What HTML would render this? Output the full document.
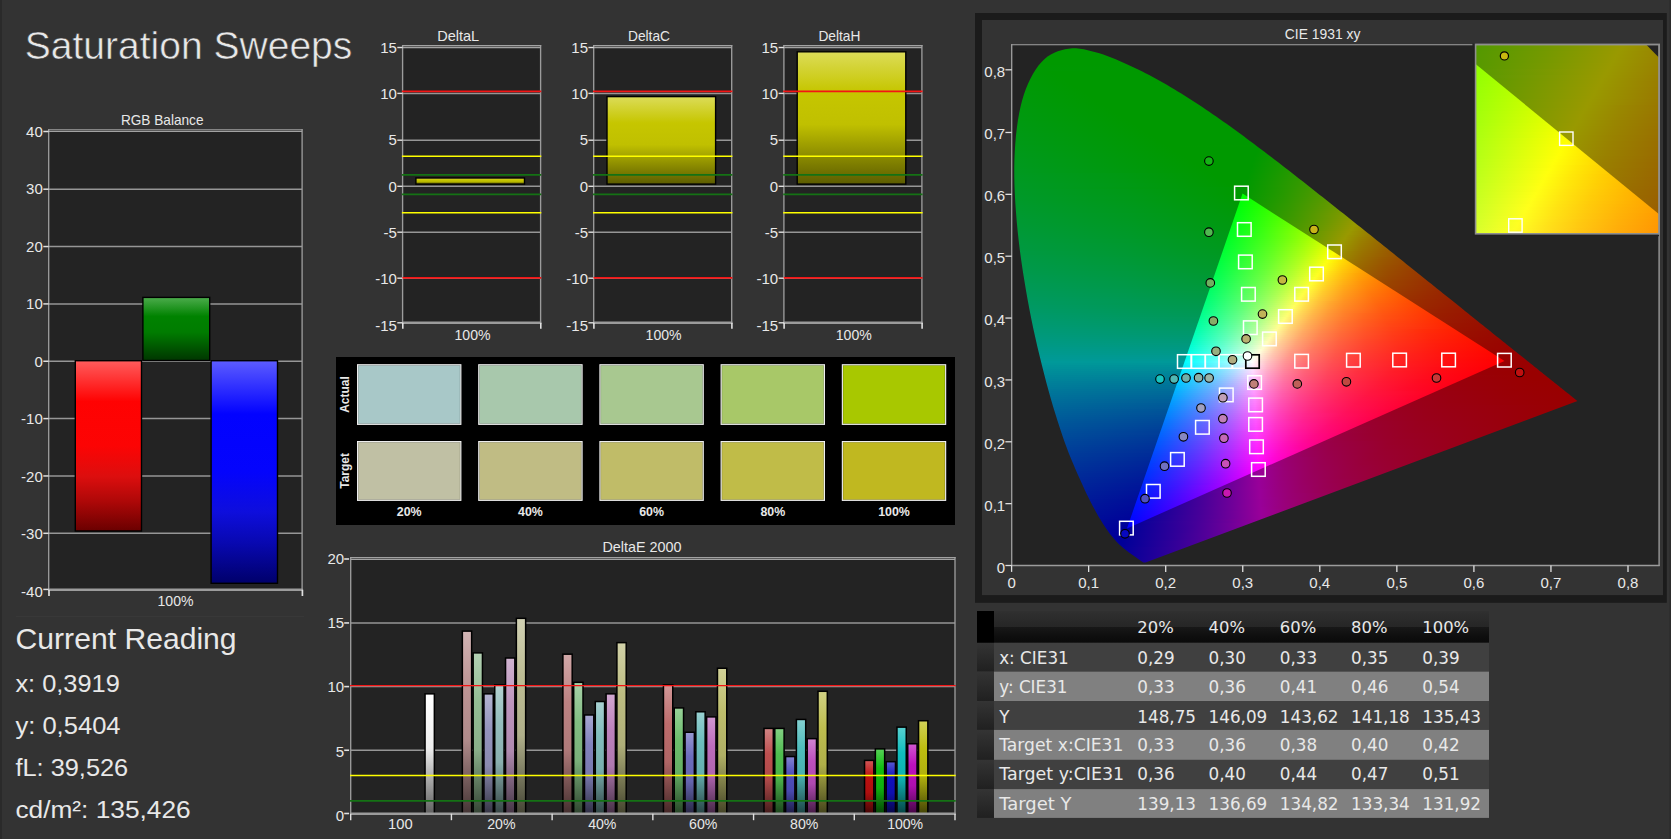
<!DOCTYPE html><html><head><meta charset="utf-8"><title>Saturation Sweeps</title><style>
html,body{margin:0;padding:0}body{width:1671px;height:839px;background:#333333;overflow:hidden;position:relative;font-family:'Liberation Sans', sans-serif}
svg{position:absolute;left:0;top:0}text{font-family:'Liberation Sans', sans-serif;fill:#e8e8e8}
.dj{font-family:'DejaVu Sans',sans-serif}.cl{position:absolute;overflow:hidden}.cl i{position:absolute;display:block}
</style></head><body>
<svg width="1671" height="839" viewBox="0 0 1671 839">
<rect x="0" y="0" width="2" height="839" fill="#2a2a2a"/>
<text x="24.8" y="58.6" font-size="38.8" textLength="327.5" lengthAdjust="spacingAndGlyphs" fill="#f4f4f4" stroke="#333" stroke-width=".55">Saturation Sweeps</text>
<rect x="48.7" y="129.8" width="253.4" height="459.9" fill="#232323"/>
<line x1="48.7" y1="189.2" x2="302.1" y2="189.2" stroke="#969696" stroke-width="1.5"/>
<line x1="48.7" y1="246.55" x2="302.1" y2="246.55" stroke="#969696" stroke-width="1.5"/>
<line x1="48.7" y1="303.9" x2="302.1" y2="303.9" stroke="#969696" stroke-width="1.5"/>
<line x1="48.7" y1="361.25" x2="302.1" y2="361.25" stroke="#969696" stroke-width="1.5"/>
<line x1="48.7" y1="418.6" x2="302.1" y2="418.6" stroke="#969696" stroke-width="1.5"/>
<line x1="48.7" y1="475.95" x2="302.1" y2="475.95" stroke="#969696" stroke-width="1.5"/>
<line x1="48.7" y1="533.3" x2="302.1" y2="533.3" stroke="#969696" stroke-width="1.5"/>
<defs><linearGradient id="gR" x1="0" y1="0" x2="0" y2="1"><stop offset="0" stop-color="#ff5c5c"/><stop offset=".24" stop-color="#ff0202"/><stop offset=".5" stop-color="#fc0404"/><stop offset=".68" stop-color="#dc0e0e"/><stop offset=".82" stop-color="#b00808"/><stop offset="1" stop-color="#6a0000"/></linearGradient>
<linearGradient id="gG" x1="0" y1="0" x2="0" y2="1"><stop offset="0" stop-color="#4cac4c"/><stop offset=".3" stop-color="#008200"/><stop offset=".55" stop-color="#007c00"/><stop offset="1" stop-color="#003600"/></linearGradient>
<linearGradient id="gB" x1="0" y1="0" x2="0" y2="1"><stop offset="0" stop-color="#5c5cff"/><stop offset=".24" stop-color="#0202ff"/><stop offset=".5" stop-color="#0404fc"/><stop offset=".68" stop-color="#0e0edc"/><stop offset=".82" stop-color="#0808b0"/><stop offset="1" stop-color="#00006a"/></linearGradient></defs>
<rect x="75.3" y="360.7" width="66.2" height="170.3" fill="url(#gR)" stroke="#000" stroke-width="1.4"/>
<rect x="142.9" y="297.4" width="66.8" height="63.1" fill="url(#gG)" stroke="#000" stroke-width="1.4"/>
<rect x="211.1" y="360.7" width="66.4" height="222.6" fill="url(#gB)" stroke="#000" stroke-width="1.4"/>
<line x1="48.7" y1="129.25" x2="48.7" y2="590.9" stroke="#9c9c9c" stroke-width="1.35"/>
<line x1="302.1" y1="129.25" x2="302.1" y2="590.9" stroke="#9c9c9c" stroke-width="1.35"/>
<line x1="48.1" y1="129.8" x2="302.7" y2="129.8" stroke="#a2a2a2" stroke-width="1.1"/>
<line x1="48.7" y1="131.4" x2="302.1" y2="131.4" stroke="#a2a2a2" stroke-width="1.3"/>
<line x1="48.1" y1="589.7" x2="302.7" y2="589.7" stroke="#9c9c9c" stroke-width="2.4"/>
<line x1="43.3" y1="131.5" x2="48.7" y2="131.5" stroke="#e0e0e0" stroke-width="1.5"/>
<text x="42.8" y="136.5" font-size="15" text-anchor="end">40</text>
<line x1="43.3" y1="189.2" x2="48.7" y2="189.2" stroke="#e0e0e0" stroke-width="1.5"/>
<text x="42.8" y="194" font-size="15" text-anchor="end">30</text>
<line x1="43.3" y1="246.55" x2="48.7" y2="246.55" stroke="#e0e0e0" stroke-width="1.5"/>
<text x="42.8" y="251.5" font-size="15" text-anchor="end">20</text>
<line x1="43.3" y1="303.9" x2="48.7" y2="303.9" stroke="#e0e0e0" stroke-width="1.5"/>
<text x="42.8" y="309" font-size="15" text-anchor="end">10</text>
<line x1="43.3" y1="361.25" x2="48.7" y2="361.25" stroke="#e0e0e0" stroke-width="1.5"/>
<text x="42.8" y="366.5" font-size="15" text-anchor="end">0</text>
<line x1="43.3" y1="418.6" x2="48.7" y2="418.6" stroke="#e0e0e0" stroke-width="1.5"/>
<text x="42.8" y="424" font-size="15" text-anchor="end">-10</text>
<line x1="43.3" y1="475.95" x2="48.7" y2="475.95" stroke="#e0e0e0" stroke-width="1.5"/>
<text x="42.8" y="481.5" font-size="15" text-anchor="end">-20</text>
<line x1="43.3" y1="533.3" x2="48.7" y2="533.3" stroke="#e0e0e0" stroke-width="1.5"/>
<text x="42.8" y="539" font-size="15" text-anchor="end">-30</text>
<line x1="43.3" y1="589.4" x2="48.7" y2="589.4" stroke="#e0e0e0" stroke-width="1.5"/>
<text x="42.8" y="596.5" font-size="15" text-anchor="end">-40</text>
<line x1="49" y1="589.7" x2="49" y2="596" stroke="#e0e0e0" stroke-width="1.7"/>
<line x1="302.4" y1="589.7" x2="302.4" y2="596" stroke="#e0e0e0" stroke-width="1.7"/>
<text x="162.2" y="125" font-size="15" text-anchor="middle" textLength="82.6" lengthAdjust="spacingAndGlyphs">RGB Balance</text>
<text x="175.5" y="605.5" font-size="15" text-anchor="middle" textLength="36" lengthAdjust="spacingAndGlyphs">100%</text>
<line x1="16" y1="616.5" x2="304" y2="616.5" stroke="#383838" stroke-width="1"/>
<text x="15.6" y="648.6" font-size="29.6" textLength="221" lengthAdjust="spacingAndGlyphs" fill="#f2f2f2">Current Reading</text>
<text x="15.4" y="692.1" font-size="24.4" textLength="104.4" lengthAdjust="spacingAndGlyphs" fill="#f2f2f2">x: 0,3919</text>
<text x="15.4" y="734.2" font-size="24.4" textLength="105.2" lengthAdjust="spacingAndGlyphs" fill="#f2f2f2">y: 0,5404</text>
<text x="15.4" y="776.3" font-size="24.4" textLength="112.8" lengthAdjust="spacingAndGlyphs" fill="#f2f2f2">fL: 39,526</text>
<text x="15.4" y="818.4" font-size="24.4" textLength="175.3" lengthAdjust="spacingAndGlyphs" fill="#f2f2f2">cd/m²: 135,426</text>
<defs><linearGradient id="gY" x1="0" y1="0" x2="0" y2="1"><stop offset="0" stop-color="#dcdc58"/><stop offset=".3" stop-color="#c6c600"/><stop offset=".55" stop-color="#c0c000"/><stop offset="1" stop-color="#5c5c00"/></linearGradient></defs>
<rect x="402.6" y="45.6" width="138" height="277.2" fill="#232323"/>
<line x1="402.6" y1="93.4" x2="540.6" y2="93.4" stroke="#969696" stroke-width="1.5"/>
<line x1="402.6" y1="140.2" x2="540.6" y2="140.2" stroke="#969696" stroke-width="1.5"/>
<line x1="402.6" y1="186.3" x2="540.6" y2="186.3" stroke="#969696" stroke-width="1.5"/>
<line x1="402.6" y1="232.2" x2="540.6" y2="232.2" stroke="#969696" stroke-width="1.5"/>
<line x1="402.6" y1="278.2" x2="540.6" y2="278.2" stroke="#969696" stroke-width="1.5"/>
<rect x="415.9" y="178" width="108.6" height="6.1" fill="url(#gY)" stroke="#000" stroke-width="1.4"/>
<line x1="402.6" y1="45.05" x2="402.6" y2="324" stroke="#9c9c9c" stroke-width="1.35"/>
<line x1="540.6" y1="45.05" x2="540.6" y2="324" stroke="#9c9c9c" stroke-width="1.35"/>
<line x1="402" y1="45.6" x2="541.2" y2="45.6" stroke="#a2a2a2" stroke-width="1.1"/>
<line x1="402.6" y1="47.5" x2="540.6" y2="47.5" stroke="#a2a2a2" stroke-width="1.3"/>
<line x1="402" y1="322.8" x2="541.2" y2="322.8" stroke="#9c9c9c" stroke-width="2.4"/>
<line x1="401.9" y1="91.4" x2="541.3" y2="91.4" stroke="#f41414" stroke-width="1.8"/>
<line x1="401.9" y1="277.8" x2="541.3" y2="277.8" stroke="#f41414" stroke-width="1.8"/>
<line x1="401.9" y1="156.36" x2="541.3" y2="156.36" stroke="#ffff00" stroke-width="1.5"/>
<line x1="401.9" y1="212.84" x2="541.3" y2="212.84" stroke="#ffff00" stroke-width="1.5"/>
<line x1="401.9" y1="174.91" x2="541.3" y2="174.91" stroke="#147214" stroke-width="1.8"/>
<line x1="401.9" y1="194.29" x2="541.3" y2="194.29" stroke="#147214" stroke-width="1.8"/>
<line x1="397.3" y1="47.5" x2="402.6" y2="47.5" stroke="#e0e0e0" stroke-width="1.4"/>
<text x="396.9" y="52.65" font-size="15" text-anchor="end">15</text>
<line x1="397.3" y1="93.4" x2="402.6" y2="93.4" stroke="#e0e0e0" stroke-width="1.4"/>
<text x="396.9" y="98.98" font-size="15" text-anchor="end">10</text>
<line x1="397.3" y1="140.2" x2="402.6" y2="140.2" stroke="#e0e0e0" stroke-width="1.4"/>
<text x="396.9" y="145.31" font-size="15" text-anchor="end">5</text>
<line x1="397.3" y1="186.3" x2="402.6" y2="186.3" stroke="#e0e0e0" stroke-width="1.4"/>
<text x="396.9" y="191.64" font-size="15" text-anchor="end">0</text>
<line x1="397.3" y1="232.2" x2="402.6" y2="232.2" stroke="#e0e0e0" stroke-width="1.4"/>
<text x="396.9" y="237.97" font-size="15" text-anchor="end">-5</text>
<line x1="397.3" y1="278.2" x2="402.6" y2="278.2" stroke="#e0e0e0" stroke-width="1.4"/>
<text x="396.9" y="284.3" font-size="15" text-anchor="end">-10</text>
<line x1="397.3" y1="322.8" x2="402.6" y2="322.8" stroke="#e0e0e0" stroke-width="1.4"/>
<text x="396.9" y="330.63" font-size="15" text-anchor="end">-15</text>
<line x1="402.8" y1="322.8" x2="402.8" y2="328.8" stroke="#e0e0e0" stroke-width="1.6"/>
<line x1="540.8" y1="322.8" x2="540.8" y2="328.8" stroke="#e0e0e0" stroke-width="1.6"/>
<text x="458.2" y="41.2" font-size="15" text-anchor="middle" textLength="42" lengthAdjust="spacingAndGlyphs">DeltaL</text>
<text x="472.5" y="339.8" font-size="15" text-anchor="middle" textLength="36" lengthAdjust="spacingAndGlyphs">100%</text>
<rect x="593.7" y="45.6" width="138" height="277.2" fill="#232323"/>
<line x1="593.7" y1="93.4" x2="731.7" y2="93.4" stroke="#969696" stroke-width="1.5"/>
<line x1="593.7" y1="140.2" x2="731.7" y2="140.2" stroke="#969696" stroke-width="1.5"/>
<line x1="593.7" y1="186.3" x2="731.7" y2="186.3" stroke="#969696" stroke-width="1.5"/>
<line x1="593.7" y1="232.2" x2="731.7" y2="232.2" stroke="#969696" stroke-width="1.5"/>
<line x1="593.7" y1="278.2" x2="731.7" y2="278.2" stroke="#969696" stroke-width="1.5"/>
<rect x="607" y="96.6" width="108.6" height="87.5" fill="url(#gY)" stroke="#000" stroke-width="1.4"/>
<line x1="593.7" y1="45.05" x2="593.7" y2="324" stroke="#9c9c9c" stroke-width="1.35"/>
<line x1="731.7" y1="45.05" x2="731.7" y2="324" stroke="#9c9c9c" stroke-width="1.35"/>
<line x1="593.1" y1="45.6" x2="732.3" y2="45.6" stroke="#a2a2a2" stroke-width="1.1"/>
<line x1="593.7" y1="47.5" x2="731.7" y2="47.5" stroke="#a2a2a2" stroke-width="1.3"/>
<line x1="593.1" y1="322.8" x2="732.3" y2="322.8" stroke="#9c9c9c" stroke-width="2.4"/>
<line x1="593" y1="91.4" x2="732.4" y2="91.4" stroke="#f41414" stroke-width="1.8"/>
<line x1="593" y1="277.8" x2="732.4" y2="277.8" stroke="#f41414" stroke-width="1.8"/>
<line x1="593" y1="156.36" x2="732.4" y2="156.36" stroke="#ffff00" stroke-width="1.5"/>
<line x1="593" y1="212.84" x2="732.4" y2="212.84" stroke="#ffff00" stroke-width="1.5"/>
<line x1="593" y1="174.91" x2="732.4" y2="174.91" stroke="#147214" stroke-width="1.8"/>
<line x1="593" y1="194.29" x2="732.4" y2="194.29" stroke="#147214" stroke-width="1.8"/>
<line x1="588.4" y1="47.5" x2="593.7" y2="47.5" stroke="#e0e0e0" stroke-width="1.4"/>
<text x="588" y="52.65" font-size="15" text-anchor="end">15</text>
<line x1="588.4" y1="93.4" x2="593.7" y2="93.4" stroke="#e0e0e0" stroke-width="1.4"/>
<text x="588" y="98.98" font-size="15" text-anchor="end">10</text>
<line x1="588.4" y1="140.2" x2="593.7" y2="140.2" stroke="#e0e0e0" stroke-width="1.4"/>
<text x="588" y="145.31" font-size="15" text-anchor="end">5</text>
<line x1="588.4" y1="186.3" x2="593.7" y2="186.3" stroke="#e0e0e0" stroke-width="1.4"/>
<text x="588" y="191.64" font-size="15" text-anchor="end">0</text>
<line x1="588.4" y1="232.2" x2="593.7" y2="232.2" stroke="#e0e0e0" stroke-width="1.4"/>
<text x="588" y="237.97" font-size="15" text-anchor="end">-5</text>
<line x1="588.4" y1="278.2" x2="593.7" y2="278.2" stroke="#e0e0e0" stroke-width="1.4"/>
<text x="588" y="284.3" font-size="15" text-anchor="end">-10</text>
<line x1="588.4" y1="322.8" x2="593.7" y2="322.8" stroke="#e0e0e0" stroke-width="1.4"/>
<text x="588" y="330.63" font-size="15" text-anchor="end">-15</text>
<line x1="593.9" y1="322.8" x2="593.9" y2="328.8" stroke="#e0e0e0" stroke-width="1.6"/>
<line x1="731.9" y1="322.8" x2="731.9" y2="328.8" stroke="#e0e0e0" stroke-width="1.6"/>
<text x="649" y="41.2" font-size="15" text-anchor="middle" textLength="42" lengthAdjust="spacingAndGlyphs">DeltaC</text>
<text x="663.6" y="339.8" font-size="15" text-anchor="middle" textLength="36" lengthAdjust="spacingAndGlyphs">100%</text>
<rect x="783.9" y="45.6" width="138" height="277.2" fill="#232323"/>
<line x1="783.9" y1="93.4" x2="921.9" y2="93.4" stroke="#969696" stroke-width="1.5"/>
<line x1="783.9" y1="140.2" x2="921.9" y2="140.2" stroke="#969696" stroke-width="1.5"/>
<line x1="783.9" y1="186.3" x2="921.9" y2="186.3" stroke="#969696" stroke-width="1.5"/>
<line x1="783.9" y1="232.2" x2="921.9" y2="232.2" stroke="#969696" stroke-width="1.5"/>
<line x1="783.9" y1="278.2" x2="921.9" y2="278.2" stroke="#969696" stroke-width="1.5"/>
<rect x="797.2" y="51.8" width="108.6" height="132.3" fill="url(#gY)" stroke="#000" stroke-width="1.4"/>
<line x1="783.9" y1="45.05" x2="783.9" y2="324" stroke="#9c9c9c" stroke-width="1.35"/>
<line x1="921.9" y1="45.05" x2="921.9" y2="324" stroke="#9c9c9c" stroke-width="1.35"/>
<line x1="783.3" y1="45.6" x2="922.5" y2="45.6" stroke="#a2a2a2" stroke-width="1.1"/>
<line x1="783.9" y1="47.5" x2="921.9" y2="47.5" stroke="#a2a2a2" stroke-width="1.3"/>
<line x1="783.3" y1="322.8" x2="922.5" y2="322.8" stroke="#9c9c9c" stroke-width="2.4"/>
<line x1="783.2" y1="91.4" x2="922.6" y2="91.4" stroke="#f41414" stroke-width="1.8"/>
<line x1="783.2" y1="277.8" x2="922.6" y2="277.8" stroke="#f41414" stroke-width="1.8"/>
<line x1="783.2" y1="156.36" x2="922.6" y2="156.36" stroke="#ffff00" stroke-width="1.5"/>
<line x1="783.2" y1="212.84" x2="922.6" y2="212.84" stroke="#ffff00" stroke-width="1.5"/>
<line x1="783.2" y1="174.91" x2="922.6" y2="174.91" stroke="#147214" stroke-width="1.8"/>
<line x1="783.2" y1="194.29" x2="922.6" y2="194.29" stroke="#147214" stroke-width="1.8"/>
<line x1="778.6" y1="47.5" x2="783.9" y2="47.5" stroke="#e0e0e0" stroke-width="1.4"/>
<text x="778.2" y="52.65" font-size="15" text-anchor="end">15</text>
<line x1="778.6" y1="93.4" x2="783.9" y2="93.4" stroke="#e0e0e0" stroke-width="1.4"/>
<text x="778.2" y="98.98" font-size="15" text-anchor="end">10</text>
<line x1="778.6" y1="140.2" x2="783.9" y2="140.2" stroke="#e0e0e0" stroke-width="1.4"/>
<text x="778.2" y="145.31" font-size="15" text-anchor="end">5</text>
<line x1="778.6" y1="186.3" x2="783.9" y2="186.3" stroke="#e0e0e0" stroke-width="1.4"/>
<text x="778.2" y="191.64" font-size="15" text-anchor="end">0</text>
<line x1="778.6" y1="232.2" x2="783.9" y2="232.2" stroke="#e0e0e0" stroke-width="1.4"/>
<text x="778.2" y="237.97" font-size="15" text-anchor="end">-5</text>
<line x1="778.6" y1="278.2" x2="783.9" y2="278.2" stroke="#e0e0e0" stroke-width="1.4"/>
<text x="778.2" y="284.3" font-size="15" text-anchor="end">-10</text>
<line x1="778.6" y1="322.8" x2="783.9" y2="322.8" stroke="#e0e0e0" stroke-width="1.4"/>
<text x="778.2" y="330.63" font-size="15" text-anchor="end">-15</text>
<line x1="784.1" y1="322.8" x2="784.1" y2="328.8" stroke="#e0e0e0" stroke-width="1.6"/>
<line x1="922.1" y1="322.8" x2="922.1" y2="328.8" stroke="#e0e0e0" stroke-width="1.6"/>
<text x="839.4" y="41.2" font-size="15" text-anchor="middle" textLength="42" lengthAdjust="spacingAndGlyphs">DeltaH</text>
<text x="853.8" y="339.8" font-size="15" text-anchor="middle" textLength="36" lengthAdjust="spacingAndGlyphs">100%</text>
<rect x="336" y="357" width="619" height="168" fill="#000"/>
<rect x="357" y="364.2" width="104.4" height="60.7" fill="#fff"/>
<rect x="358.2" y="365.4" width="102" height="58.3" fill="#a8c8c8" stroke="#000" stroke-opacity=".22" stroke-width="1"/>
<rect x="357" y="441" width="104.4" height="59.9" fill="#fff"/>
<rect x="358.2" y="442.2" width="102" height="57.5" fill="#c0c0a4" stroke="#000" stroke-opacity=".22" stroke-width="1"/>
<text x="409.2" y="516.3" font-size="12.4" text-anchor="middle" font-weight="bold" fill="#fff">20%</text>
<rect x="478.2" y="364.2" width="104.4" height="60.7" fill="#fff"/>
<rect x="479.4" y="365.4" width="102" height="58.3" fill="#a8c8ac" stroke="#000" stroke-opacity=".22" stroke-width="1"/>
<rect x="478.2" y="441" width="104.4" height="59.9" fill="#fff"/>
<rect x="479.4" y="442.2" width="102" height="57.5" fill="#c0bc84" stroke="#000" stroke-opacity=".22" stroke-width="1"/>
<text x="530.4" y="516.3" font-size="12.4" text-anchor="middle" font-weight="bold" fill="#fff">40%</text>
<rect x="599.4" y="364.2" width="104.4" height="60.7" fill="#fff"/>
<rect x="600.6" y="365.4" width="102" height="58.3" fill="#a8c890" stroke="#000" stroke-opacity=".22" stroke-width="1"/>
<rect x="599.4" y="441" width="104.4" height="59.9" fill="#fff"/>
<rect x="600.6" y="442.2" width="102" height="57.5" fill="#c0bc68" stroke="#000" stroke-opacity=".22" stroke-width="1"/>
<text x="651.6" y="516.3" font-size="12.4" text-anchor="middle" font-weight="bold" fill="#fff">60%</text>
<rect x="720.6" y="364.2" width="104.4" height="60.7" fill="#fff"/>
<rect x="721.8" y="365.4" width="102" height="58.3" fill="#a8c868" stroke="#000" stroke-opacity=".22" stroke-width="1"/>
<rect x="720.6" y="441" width="104.4" height="59.9" fill="#fff"/>
<rect x="721.8" y="442.2" width="102" height="57.5" fill="#c0bc48" stroke="#000" stroke-opacity=".22" stroke-width="1"/>
<text x="772.8" y="516.3" font-size="12.4" text-anchor="middle" font-weight="bold" fill="#fff">80%</text>
<rect x="841.8" y="364.2" width="104.4" height="60.7" fill="#fff"/>
<rect x="843" y="365.4" width="102" height="58.3" fill="#a8c800" stroke="#000" stroke-opacity=".22" stroke-width="1"/>
<rect x="841.8" y="441" width="104.4" height="59.9" fill="#fff"/>
<rect x="843" y="442.2" width="102" height="57.5" fill="#c0b820" stroke="#000" stroke-opacity=".22" stroke-width="1"/>
<text x="894" y="516.3" font-size="12.4" text-anchor="middle" font-weight="bold" fill="#fff">100%</text>
<text transform="translate(348.8,394.5) rotate(-90)" font-size="12" font-weight="bold" text-anchor="middle" fill="#fff">Actual</text>
<text transform="translate(348.8,470.9) rotate(-90)" font-size="12" font-weight="bold" text-anchor="middle" fill="#fff">Target</text>
<rect x="350.7" y="557.6" width="604.3" height="256.1" fill="#232323"/>
<line x1="350.7" y1="622.95" x2="955" y2="622.95" stroke="#969696" stroke-width="1.5"/>
<line x1="350.7" y1="686.6" x2="955" y2="686.6" stroke="#969696" stroke-width="1.5"/>
<line x1="350.7" y1="750.25" x2="955" y2="750.25" stroke="#969696" stroke-width="1.5"/>
<defs><linearGradient id="e10" x1="0" y1="0" x2="0" y2="1"><stop offset="0" stop-color="#d1b4b4"/><stop offset=".3" stop-color="#bd9494"/><stop offset=".6" stop-color="#af8a8a"/><stop offset="1" stop-color="#443535"/></linearGradient><linearGradient id="e11" x1="0" y1="0" x2="0" y2="1"><stop offset="0" stop-color="#b4d1b4"/><stop offset=".3" stop-color="#94bd94"/><stop offset=".6" stop-color="#8aaf8a"/><stop offset="1" stop-color="#354435"/></linearGradient><linearGradient id="e12" x1="0" y1="0" x2="0" y2="1"><stop offset="0" stop-color="#b4b4d1"/><stop offset=".3" stop-color="#9494bd"/><stop offset=".6" stop-color="#8a8aaf"/><stop offset="1" stop-color="#353544"/></linearGradient><linearGradient id="e13" x1="0" y1="0" x2="0" y2="1"><stop offset="0" stop-color="#b4d1d1"/><stop offset=".3" stop-color="#94bdbd"/><stop offset=".6" stop-color="#8aafaf"/><stop offset="1" stop-color="#354444"/></linearGradient><linearGradient id="e14" x1="0" y1="0" x2="0" y2="1"><stop offset="0" stop-color="#d1b4d1"/><stop offset=".3" stop-color="#bd94bd"/><stop offset=".6" stop-color="#af8aaf"/><stop offset="1" stop-color="#443544"/></linearGradient><linearGradient id="e15" x1="0" y1="0" x2="0" y2="1"><stop offset="0" stop-color="#d1d1b4"/><stop offset=".3" stop-color="#bdbd94"/><stop offset=".6" stop-color="#afaf8a"/><stop offset="1" stop-color="#444435"/></linearGradient><linearGradient id="e20" x1="0" y1="0" x2="0" y2="1"><stop offset="0" stop-color="#d1a8a8"/><stop offset=".3" stop-color="#bd8282"/><stop offset=".6" stop-color="#af7979"/><stop offset="1" stop-color="#442f2f"/></linearGradient><linearGradient id="e21" x1="0" y1="0" x2="0" y2="1"><stop offset="0" stop-color="#a8d1a8"/><stop offset=".3" stop-color="#82bd82"/><stop offset=".6" stop-color="#79af79"/><stop offset="1" stop-color="#2f442f"/></linearGradient><linearGradient id="e22" x1="0" y1="0" x2="0" y2="1"><stop offset="0" stop-color="#a8a8d1"/><stop offset=".3" stop-color="#8282bd"/><stop offset=".6" stop-color="#7979af"/><stop offset="1" stop-color="#2f2f44"/></linearGradient><linearGradient id="e23" x1="0" y1="0" x2="0" y2="1"><stop offset="0" stop-color="#a8d1d1"/><stop offset=".3" stop-color="#82bdbd"/><stop offset=".6" stop-color="#79afaf"/><stop offset="1" stop-color="#2f4444"/></linearGradient><linearGradient id="e24" x1="0" y1="0" x2="0" y2="1"><stop offset="0" stop-color="#d1a8d1"/><stop offset=".3" stop-color="#bd82bd"/><stop offset=".6" stop-color="#af79af"/><stop offset="1" stop-color="#442f44"/></linearGradient><linearGradient id="e25" x1="0" y1="0" x2="0" y2="1"><stop offset="0" stop-color="#d1d1a8"/><stop offset=".3" stop-color="#bdbd82"/><stop offset=".6" stop-color="#afaf79"/><stop offset="1" stop-color="#44442f"/></linearGradient><linearGradient id="e30" x1="0" y1="0" x2="0" y2="1"><stop offset="0" stop-color="#d19898"/><stop offset=".3" stop-color="#bd6c6c"/><stop offset=".6" stop-color="#af6565"/><stop offset="1" stop-color="#442727"/></linearGradient><linearGradient id="e31" x1="0" y1="0" x2="0" y2="1"><stop offset="0" stop-color="#98d198"/><stop offset=".3" stop-color="#6cbd6c"/><stop offset=".6" stop-color="#65af65"/><stop offset="1" stop-color="#274427"/></linearGradient><linearGradient id="e32" x1="0" y1="0" x2="0" y2="1"><stop offset="0" stop-color="#9898d1"/><stop offset=".3" stop-color="#6c6cbd"/><stop offset=".6" stop-color="#6565af"/><stop offset="1" stop-color="#272744"/></linearGradient><linearGradient id="e33" x1="0" y1="0" x2="0" y2="1"><stop offset="0" stop-color="#98d1d1"/><stop offset=".3" stop-color="#6cbdbd"/><stop offset=".6" stop-color="#65afaf"/><stop offset="1" stop-color="#274444"/></linearGradient><linearGradient id="e34" x1="0" y1="0" x2="0" y2="1"><stop offset="0" stop-color="#d198d1"/><stop offset=".3" stop-color="#bd6cbd"/><stop offset=".6" stop-color="#af65af"/><stop offset="1" stop-color="#442744"/></linearGradient><linearGradient id="e35" x1="0" y1="0" x2="0" y2="1"><stop offset="0" stop-color="#d1d198"/><stop offset=".3" stop-color="#bdbd6c"/><stop offset=".6" stop-color="#afaf65"/><stop offset="1" stop-color="#444427"/></linearGradient><linearGradient id="e40" x1="0" y1="0" x2="0" y2="1"><stop offset="0" stop-color="#d18484"/><stop offset=".3" stop-color="#bd4f4f"/><stop offset=".6" stop-color="#af4949"/><stop offset="1" stop-color="#441c1c"/></linearGradient><linearGradient id="e41" x1="0" y1="0" x2="0" y2="1"><stop offset="0" stop-color="#84d184"/><stop offset=".3" stop-color="#4fbd4f"/><stop offset=".6" stop-color="#49af49"/><stop offset="1" stop-color="#1c441c"/></linearGradient><linearGradient id="e42" x1="0" y1="0" x2="0" y2="1"><stop offset="0" stop-color="#8484d1"/><stop offset=".3" stop-color="#4f4fbd"/><stop offset=".6" stop-color="#4949af"/><stop offset="1" stop-color="#1c1c44"/></linearGradient><linearGradient id="e43" x1="0" y1="0" x2="0" y2="1"><stop offset="0" stop-color="#84d1d1"/><stop offset=".3" stop-color="#4fbdbd"/><stop offset=".6" stop-color="#49afaf"/><stop offset="1" stop-color="#1c4444"/></linearGradient><linearGradient id="e44" x1="0" y1="0" x2="0" y2="1"><stop offset="0" stop-color="#d184d1"/><stop offset=".3" stop-color="#bd4fbd"/><stop offset=".6" stop-color="#af49af"/><stop offset="1" stop-color="#441c44"/></linearGradient><linearGradient id="e45" x1="0" y1="0" x2="0" y2="1"><stop offset="0" stop-color="#d1d184"/><stop offset=".3" stop-color="#bdbd4f"/><stop offset=".6" stop-color="#afaf49"/><stop offset="1" stop-color="#44441c"/></linearGradient><linearGradient id="e50" x1="0" y1="0" x2="0" y2="1"><stop offset="0" stop-color="#d15858"/><stop offset=".3" stop-color="#bd1010"/><stop offset=".6" stop-color="#af0f0f"/><stop offset="1" stop-color="#440606"/></linearGradient><linearGradient id="e51" x1="0" y1="0" x2="0" y2="1"><stop offset="0" stop-color="#58d158"/><stop offset=".3" stop-color="#10bd10"/><stop offset=".6" stop-color="#0faf0f"/><stop offset="1" stop-color="#064406"/></linearGradient><linearGradient id="e52" x1="0" y1="0" x2="0" y2="1"><stop offset="0" stop-color="#5858d1"/><stop offset=".3" stop-color="#1010bd"/><stop offset=".6" stop-color="#0f0faf"/><stop offset="1" stop-color="#060644"/></linearGradient><linearGradient id="e53" x1="0" y1="0" x2="0" y2="1"><stop offset="0" stop-color="#58d1d1"/><stop offset=".3" stop-color="#10bdbd"/><stop offset=".6" stop-color="#0fafaf"/><stop offset="1" stop-color="#064444"/></linearGradient><linearGradient id="e54" x1="0" y1="0" x2="0" y2="1"><stop offset="0" stop-color="#d158d1"/><stop offset=".3" stop-color="#bd10bd"/><stop offset=".6" stop-color="#af0faf"/><stop offset="1" stop-color="#440644"/></linearGradient><linearGradient id="e55" x1="0" y1="0" x2="0" y2="1"><stop offset="0" stop-color="#d1d158"/><stop offset=".3" stop-color="#bdbd10"/><stop offset=".6" stop-color="#afaf0f"/><stop offset="1" stop-color="#444406"/></linearGradient><linearGradient id="e06" x1="0" y1="0" x2="0" y2="1"><stop offset="0" stop-color="#fff"/><stop offset=".45" stop-color="#eee"/><stop offset="1" stop-color="#606060"/></linearGradient></defs>
<rect x="425.05" y="693.85" width="9.3" height="119.85" fill="url(#e06)" stroke="#000" stroke-width="1.5"/>
<rect x="462.35" y="631.13" width="9.3" height="182.57" fill="url(#e10)" stroke="#000" stroke-width="1.5"/>
<rect x="473.15" y="652.89" width="9.3" height="160.81" fill="url(#e11)" stroke="#000" stroke-width="1.5"/>
<rect x="483.95" y="693.85" width="9.3" height="119.85" fill="url(#e12)" stroke="#000" stroke-width="1.5"/>
<rect x="494.75" y="684.89" width="9.3" height="128.81" fill="url(#e13)" stroke="#000" stroke-width="1.5"/>
<rect x="505.55" y="658.01" width="9.3" height="155.69" fill="url(#e14)" stroke="#000" stroke-width="1.5"/>
<rect x="516.35" y="618.33" width="9.3" height="195.37" fill="url(#e15)" stroke="#000" stroke-width="1.5"/>
<rect x="562.9" y="654.17" width="9.3" height="159.53" fill="url(#e20)" stroke="#000" stroke-width="1.5"/>
<rect x="573.7" y="682.33" width="9.3" height="131.37" fill="url(#e21)" stroke="#000" stroke-width="1.5"/>
<rect x="584.5" y="714.97" width="9.3" height="98.73" fill="url(#e22)" stroke="#000" stroke-width="1.5"/>
<rect x="595.3" y="701.53" width="9.3" height="112.17" fill="url(#e23)" stroke="#000" stroke-width="1.5"/>
<rect x="606.1" y="693.85" width="9.3" height="119.85" fill="url(#e24)" stroke="#000" stroke-width="1.5"/>
<rect x="616.9" y="642.65" width="9.3" height="171.05" fill="url(#e25)" stroke="#000" stroke-width="1.5"/>
<rect x="663.45" y="684.89" width="9.3" height="128.81" fill="url(#e30)" stroke="#000" stroke-width="1.5"/>
<rect x="674.25" y="707.93" width="9.3" height="105.77" fill="url(#e31)" stroke="#000" stroke-width="1.5"/>
<rect x="685.05" y="732.25" width="9.3" height="81.45" fill="url(#e32)" stroke="#000" stroke-width="1.5"/>
<rect x="695.85" y="711.77" width="9.3" height="101.93" fill="url(#e33)" stroke="#000" stroke-width="1.5"/>
<rect x="706.65" y="716.89" width="9.3" height="96.81" fill="url(#e34)" stroke="#000" stroke-width="1.5"/>
<rect x="717.45" y="668.25" width="9.3" height="145.45" fill="url(#e35)" stroke="#000" stroke-width="1.5"/>
<rect x="764" y="728.41" width="9.3" height="85.29" fill="url(#e40)" stroke="#000" stroke-width="1.5"/>
<rect x="774.8" y="728.41" width="9.3" height="85.29" fill="url(#e41)" stroke="#000" stroke-width="1.5"/>
<rect x="785.6" y="756.57" width="9.3" height="57.13" fill="url(#e42)" stroke="#000" stroke-width="1.5"/>
<rect x="796.4" y="719.45" width="9.3" height="94.25" fill="url(#e43)" stroke="#000" stroke-width="1.5"/>
<rect x="807.2" y="738.65" width="9.3" height="75.05" fill="url(#e44)" stroke="#000" stroke-width="1.5"/>
<rect x="818" y="691.29" width="9.3" height="122.41" fill="url(#e45)" stroke="#000" stroke-width="1.5"/>
<rect x="864.55" y="760.41" width="9.3" height="53.29" fill="url(#e50)" stroke="#000" stroke-width="1.5"/>
<rect x="875.35" y="748.89" width="9.3" height="64.81" fill="url(#e51)" stroke="#000" stroke-width="1.5"/>
<rect x="886.15" y="761.69" width="9.3" height="52.01" fill="url(#e52)" stroke="#000" stroke-width="1.5"/>
<rect x="896.95" y="727.13" width="9.3" height="86.57" fill="url(#e53)" stroke="#000" stroke-width="1.5"/>
<rect x="907.75" y="743.77" width="9.3" height="69.93" fill="url(#e54)" stroke="#000" stroke-width="1.5"/>
<rect x="918.55" y="720.73" width="9.3" height="92.97" fill="url(#e55)" stroke="#000" stroke-width="1.5"/>
<line x1="350.7" y1="557.05" x2="350.7" y2="814.9" stroke="#9c9c9c" stroke-width="1.35"/>
<line x1="955" y1="557.05" x2="955" y2="814.9" stroke="#9c9c9c" stroke-width="1.35"/>
<line x1="350.1" y1="557.6" x2="955.6" y2="557.6" stroke="#a2a2a2" stroke-width="1.1"/>
<line x1="350.7" y1="559.4" x2="955" y2="559.4" stroke="#a2a2a2" stroke-width="1.3"/>
<line x1="350.1" y1="813.7" x2="955.6" y2="813.7" stroke="#9c9c9c" stroke-width="2.4"/>
<line x1="350" y1="685.6" x2="955.7" y2="685.6" stroke="#f41414" stroke-width="1.3"/>
<line x1="350" y1="775.5" x2="955.7" y2="775.5" stroke="#ffff00" stroke-width="1.4"/>
<line x1="350" y1="800.8" x2="955.7" y2="800.8" stroke="#147214" stroke-width="1.7"/>
<line x1="344.2" y1="559" x2="349.1" y2="559" stroke="#e0e0e0" stroke-width="1.6"/>
<text x="344.1" y="563.8" font-size="15" text-anchor="end">20</text>
<line x1="344.2" y1="622.95" x2="349.1" y2="622.95" stroke="#e0e0e0" stroke-width="1.6"/>
<text x="344.1" y="628.1" font-size="15" text-anchor="end">15</text>
<line x1="344.2" y1="686.6" x2="349.1" y2="686.6" stroke="#e0e0e0" stroke-width="1.6"/>
<text x="344.1" y="692.4" font-size="15" text-anchor="end">10</text>
<line x1="344.2" y1="750.25" x2="349.1" y2="750.25" stroke="#e0e0e0" stroke-width="1.6"/>
<text x="344.1" y="756.7" font-size="15" text-anchor="end">5</text>
<line x1="344.2" y1="813.5" x2="349.1" y2="813.5" stroke="#e0e0e0" stroke-width="1.6"/>
<text x="344.1" y="821" font-size="15" text-anchor="end">0</text>
<line x1="350.7" y1="813.7" x2="350.7" y2="820.2" stroke="#e0e0e0" stroke-width="1.4"/>
<line x1="451.42" y1="813.7" x2="451.42" y2="820.2" stroke="#e0e0e0" stroke-width="1.4"/>
<line x1="552.13" y1="813.7" x2="552.13" y2="820.2" stroke="#e0e0e0" stroke-width="1.4"/>
<line x1="652.85" y1="813.7" x2="652.85" y2="820.2" stroke="#e0e0e0" stroke-width="1.4"/>
<line x1="753.57" y1="813.7" x2="753.57" y2="820.2" stroke="#e0e0e0" stroke-width="1.4"/>
<line x1="854.28" y1="813.7" x2="854.28" y2="820.2" stroke="#e0e0e0" stroke-width="1.4"/>
<line x1="955" y1="813.7" x2="955" y2="820.2" stroke="#e0e0e0" stroke-width="1.4"/>
<text x="400.4" y="829.4" font-size="15" text-anchor="middle" textLength="24.6" lengthAdjust="spacingAndGlyphs">100</text>
<text x="501.35" y="829.4" font-size="15" text-anchor="middle" textLength="28.3" lengthAdjust="spacingAndGlyphs">20%</text>
<text x="602.3" y="829.4" font-size="15" text-anchor="middle" textLength="28.3" lengthAdjust="spacingAndGlyphs">40%</text>
<text x="703.25" y="829.4" font-size="15" text-anchor="middle" textLength="28.3" lengthAdjust="spacingAndGlyphs">60%</text>
<text x="804.2" y="829.4" font-size="15" text-anchor="middle" textLength="28.3" lengthAdjust="spacingAndGlyphs">80%</text>
<text x="905.15" y="829.4" font-size="15" text-anchor="middle" textLength="36" lengthAdjust="spacingAndGlyphs">100%</text>
<text x="642" y="551.9" font-size="15" text-anchor="middle" textLength="79.2" lengthAdjust="spacingAndGlyphs">DeltaE 2000</text>
<defs><linearGradient id="th" x1="0" y1="0" x2="0" y2="1"><stop offset="0" stop-color="#303030"/><stop offset=".5" stop-color="#262626"/><stop offset=".5" stop-color="#181818"/><stop offset=".8" stop-color="#0e0e0e"/><stop offset="1" stop-color="#0a0a0a"/></linearGradient><linearGradient id="tc" x1="0" y1="0" x2="0" y2="1"><stop offset="0" stop-color="#343434"/><stop offset="1" stop-color="#202020"/></linearGradient></defs>
<rect x="977" y="611" width="512" height="31.8" fill="url(#th)"/>
<rect x="977" y="611" width="17" height="31.8" fill="#000"/>
<text x="1137.3" y="633.3" font-size="16.4" class="dj" fill="#fff">20%</text>
<text x="1208.55" y="633.3" font-size="16.4" class="dj" fill="#fff">40%</text>
<text x="1279.8" y="633.3" font-size="16.4" class="dj" fill="#fff">60%</text>
<text x="1351.05" y="633.3" font-size="16.4" class="dj" fill="#fff">80%</text>
<text x="1422.3" y="633.3" font-size="16.4" class="dj" fill="#fff">100%</text>
<rect x="994" y="642.8" width="495" height="28.8" fill="#404040"/>
<rect x="977" y="642.8" width="17" height="28.8" fill="url(#tc)"/>
<text x="999.2" y="663.9" font-size="16.8" class="dj" fill="#fff">x: CIE31</text>
<text x="1137.3" y="663.9" font-size="16.8" class="dj" fill="#fff">0,29</text>
<text x="1208.55" y="663.9" font-size="16.8" class="dj" fill="#fff">0,30</text>
<text x="1279.8" y="663.9" font-size="16.8" class="dj" fill="#fff">0,33</text>
<text x="1351.05" y="663.9" font-size="16.8" class="dj" fill="#fff">0,35</text>
<text x="1422.3" y="663.9" font-size="16.8" class="dj" fill="#fff">0,39</text>
<rect x="994" y="671.6" width="495" height="29.4" fill="#808080"/>
<rect x="977" y="671.6" width="17" height="29.4" fill="url(#tc)"/>
<text x="999.2" y="692.6" font-size="16.8" class="dj" fill="#f4f4f4">y: CIE31</text>
<text x="1137.3" y="692.6" font-size="16.8" class="dj" fill="#f4f4f4">0,33</text>
<text x="1208.55" y="692.6" font-size="16.8" class="dj" fill="#f4f4f4">0,36</text>
<text x="1279.8" y="692.6" font-size="16.8" class="dj" fill="#f4f4f4">0,41</text>
<text x="1351.05" y="692.6" font-size="16.8" class="dj" fill="#f4f4f4">0,46</text>
<text x="1422.3" y="692.6" font-size="16.8" class="dj" fill="#f4f4f4">0,54</text>
<rect x="994" y="701" width="495" height="28.9" fill="#404040"/>
<rect x="977" y="701" width="17" height="28.9" fill="url(#tc)"/>
<text x="999.2" y="723" font-size="16.8" class="dj" fill="#fff">Y</text>
<text x="1137.3" y="723" font-size="16.8" class="dj" fill="#fff">148,75</text>
<text x="1208.55" y="723" font-size="16.8" class="dj" fill="#fff">146,09</text>
<text x="1279.8" y="723" font-size="16.8" class="dj" fill="#fff">143,62</text>
<text x="1351.05" y="723" font-size="16.8" class="dj" fill="#fff">141,18</text>
<text x="1422.3" y="723" font-size="16.8" class="dj" fill="#fff">135,43</text>
<rect x="994" y="729.9" width="495" height="30" fill="#808080"/>
<rect x="977" y="729.9" width="17" height="30" fill="url(#tc)"/>
<text x="999.2" y="751.3" font-size="16.8" textLength="124.2" lengthAdjust="spacingAndGlyphs" class="dj" fill="#f4f4f4">Target x:CIE31</text>
<text x="1137.3" y="751.3" font-size="16.8" class="dj" fill="#f4f4f4">0,33</text>
<text x="1208.55" y="751.3" font-size="16.8" class="dj" fill="#f4f4f4">0,36</text>
<text x="1279.8" y="751.3" font-size="16.8" class="dj" fill="#f4f4f4">0,38</text>
<text x="1351.05" y="751.3" font-size="16.8" class="dj" fill="#f4f4f4">0,40</text>
<text x="1422.3" y="751.3" font-size="16.8" class="dj" fill="#f4f4f4">0,42</text>
<rect x="994" y="759.9" width="495" height="29.2" fill="#404040"/>
<rect x="977" y="759.9" width="17" height="29.2" fill="url(#tc)"/>
<text x="999.2" y="780.1" font-size="16.8" textLength="125" lengthAdjust="spacingAndGlyphs" class="dj" fill="#fff">Target y:CIE31</text>
<text x="1137.3" y="780.1" font-size="16.8" class="dj" fill="#fff">0,36</text>
<text x="1208.55" y="780.1" font-size="16.8" class="dj" fill="#fff">0,40</text>
<text x="1279.8" y="780.1" font-size="16.8" class="dj" fill="#fff">0,44</text>
<text x="1351.05" y="780.1" font-size="16.8" class="dj" fill="#fff">0,47</text>
<text x="1422.3" y="780.1" font-size="16.8" class="dj" fill="#fff">0,51</text>
<rect x="994" y="789.1" width="495" height="28.8" fill="#808080"/>
<rect x="977" y="789.1" width="17" height="28.8" fill="url(#tc)"/>
<text x="999.2" y="809.7" font-size="16.8" textLength="72.2" lengthAdjust="spacingAndGlyphs" class="dj" fill="#f4f4f4">Target Y</text>
<text x="1137.3" y="809.7" font-size="16.8" class="dj" fill="#f4f4f4">139,13</text>
<text x="1208.55" y="809.7" font-size="16.8" class="dj" fill="#f4f4f4">136,69</text>
<text x="1279.8" y="809.7" font-size="16.8" class="dj" fill="#f4f4f4">134,82</text>
<text x="1351.05" y="809.7" font-size="16.8" class="dj" fill="#f4f4f4">133,34</text>
<text x="1422.3" y="809.7" font-size="16.8" class="dj" fill="#f4f4f4">131,92</text>
<rect x="975" y="13" width="691.8" height="589.8" fill="#1b1b1b"/>
<rect x="982" y="20" width="681" height="575.1" fill="#333333"/>
<rect x="1669.5" y="0" width="1.5" height="839" fill="#2b2b2b"/>
<rect x="1011.7" y="44.75" width="647.4" height="520.65" fill="#232323"/>
<text x="1322.6" y="38.6" font-size="15" text-anchor="middle" textLength="75.6" lengthAdjust="spacingAndGlyphs">CIE 1931 xy</text>
</svg>
<div class="cl" style="left:1012px;top:45px;width:647px;height:521px;clip-path:polygon(133.54px 517.5px,133.42px 517.51px,133.24px 517.53px,133.04px 517.55px,132.81px 517.57px,132.58px 517.59px,132.35px 517.61px,132.16px 517.62px,132px 517.62px,131.89px 517.62px,131.81px 517.61px,131.74px 517.59px,131.69px 517.57px,131.64px 517.54px,131.6px 517.51px,131.54px 517.48px,131.46px 517.44px,131.37px 517.4px,131.28px 517.35px,131.18px 517.3px,131.07px 517.25px,130.96px 517.2px,130.85px 517.14px,130.74px 517.07px,130.62px 517px,130.5px 516.93px,130.37px 516.86px,130.25px 516.78px,130.12px 516.7px,129.99px 516.62px,129.85px 516.52px,129.7px 516.43px,129.54px 516.32px,129.37px 516.21px,129.19px 516.09px,129.01px 515.97px,128.82px 515.84px,128.62px 515.71px,128.42px 515.57px,128.21px 515.42px,128px 515.27px,127.78px 515.11px,127.56px 514.95px,127.33px 514.78px,127.1px 514.6px,126.85px 514.42px,126.6px 514.23px,126.34px 514.04px,126.07px 513.84px,125.79px 513.64px,125.5px 513.43px,125.2px 513.22px,124.9px 513px,124.58px 512.78px,124.24px 512.55px,123.89px 512.3px,123.53px 512.04px,123.14px 511.78px,122.75px 511.5px,122.33px 511.21px,121.9px 510.92px,121.46px 510.61px,121.01px 510.29px,120.54px 509.97px,120.06px 509.63px,119.57px 509.28px,119.07px 508.93px,118.55px 508.57px,118.02px 508.2px,117.48px 507.81px,116.92px 507.4px,116.34px 506.98px,115.75px 506.53px,115.13px 506.06px,114.5px 505.57px,113.85px 505.08px,113.19px 504.56px,112.51px 504.01px,111.81px 503.44px,111.09px 502.83px,110.35px 502.19px,109.6px 501.52px,108.85px 500.86px,108.08px 500.17px,107.29px 499.45px,106.47px 498.67px,105.62px 497.83px,104.74px 496.89px,103.8px 495.86px,102.83px 494.75px,101.82px 493.58px,100.78px 492.35px,99.7px 491.04px,98.59px 489.64px,97.44px 488.13px,96.25px 486.51px,95.02px 484.76px,93.76px 482.92px,92.46px 481px,91.13px 478.99px,89.77px 476.86px,88.36px 474.6px,86.9px 472.18px,85.4px 469.58px,83.85px 466.78px,82.25px 463.82px,80.61px 460.73px,78.92px 457.48px,77.19px 454.07px,75.41px 450.46px,73.57px 446.65px,71.69px 442.61px,69.75px 438.33px,67.73px 433.82px,65.64px 429.13px,63.48px 424.24px,61.28px 419.12px,59.05px 413.77px,56.8px 408.17px,54.56px 402.31px,52.33px 396.17px,50.11px 389.74px,47.86px 383.04px,45.59px 376.07px,43.32px 368.86px,41.06px 361.4px,38.81px 353.72px,36.58px 345.81px,34.38px 337.7px,32.19px 329.31px,29.97px 320.59px,27.75px 311.62px,25.56px 302.43px,23.41px 293.09px,21.34px 283.66px,19.37px 274.18px,17.51px 264.73px,15.73px 255.18px,14px 245.46px,12.34px 235.61px,10.76px 225.71px,9.29px 215.81px,7.95px 205.99px,6.75px 196.29px,5.72px 186.79px,4.82px 177.41px,4.04px 168.04px,3.37px 158.73px,2.84px 149.53px,2.47px 140.48px,2.26px 131.62px,2.23px 122.98px,2.4px 114.62px,2.76px 106.47px,3.29px 98.43px,3.98px 90.57px,4.85px 82.93px,5.89px 75.56px,7.11px 68.49px,8.52px 61.78px,10.11px 55.48px,11.91px 49.52px,13.93px 43.85px,16.13px 38.49px,18.52px 33.47px,21.05px 28.8px,23.72px 24.51px,26.5px 20.62px,29.37px 17.16px,32.37px 14.16px,35.55px 11.61px,38.86px 9.47px,42.29px 7.71px,45.81px 6.29px,49.4px 5.16px,53.02px 4.29px,56.65px 3.64px,60.32px 3.31px,64.08px 3.36px,67.9px 3.73px,71.77px 4.37px,75.68px 5.21px,79.59px 6.2px,83.5px 7.27px,87.39px 8.36px,91.28px 9.54px,95.2px 10.89px,99.14px 12.39px,103.08px 14px,107px 15.69px,110.91px 17.44px,114.78px 19.2px,118.6px 20.94px,122.37px 22.69px,126.11px 24.49px,129.81px 26.33px,133.5px 28.2px,137.15px 30.11px,140.79px 32.05px,144.42px 34.02px,148.03px 36.01px,151.62px 38.02px,155.19px 40.07px,158.74px 42.15px,162.26px 44.25px,165.78px 46.38px,169.29px 48.54px,172.8px 50.73px,176.31px 52.93px,179.81px 55.17px,183.31px 57.44px,186.81px 59.73px,190.3px 62.05px,193.78px 64.39px,197.26px 66.76px,200.73px 69.14px,204.2px 71.53px,207.66px 73.95px,211.12px 76.39px,214.57px 78.85px,218.01px 81.32px,221.46px 83.82px,224.9px 86.32px,228.34px 88.84px,231.78px 91.37px,235.22px 93.92px,238.66px 96.48px,242.1px 99.05px,245.54px 101.63px,248.97px 104.23px,252.41px 106.84px,255.85px 109.46px,259.29px 112.08px,262.74px 114.72px,266.18px 117.36px,269.63px 120.02px,273.09px 122.69px,276.54px 125.36px,279.99px 128.04px,283.43px 130.72px,286.87px 133.41px,290.31px 136.1px,293.75px 138.8px,297.18px 141.5px,300.61px 144.21px,304.04px 146.92px,307.46px 149.63px,310.88px 152.34px,314.3px 155.05px,317.72px 157.75px,321.15px 160.46px,324.57px 163.17px,327.98px 165.88px,331.4px 168.59px,334.8px 171.29px,338.2px 173.99px,341.58px 176.69px,344.95px 179.38px,348.32px 182.06px,351.68px 184.75px,355.03px 187.43px,358.37px 190.11px,361.7px 192.77px,365.01px 195.43px,368.32px 198.08px,371.61px 200.71px,374.89px 203.34px,378.16px 205.97px,381.41px 208.58px,384.66px 211.18px,387.88px 213.77px,391.09px 216.35px,394.28px 218.91px,397.45px 221.45px,400.61px 223.99px,403.76px 226.51px,406.88px 229.02px,409.99px 231.51px,413.07px 233.99px,416.13px 236.44px,419.17px 238.87px,422.18px 241.28px,425.18px 243.68px,428.15px 246.05px,431.1px 248.41px,434.02px 250.74px,436.92px 253.05px,439.77px 255.34px,442.59px 257.6px,445.38px 259.83px,448.14px 262.05px,450.87px 264.25px,453.57px 266.42px,456.23px 268.57px,458.84px 270.67px,461.41px 272.74px,463.93px 274.77px,466.4px 276.75px,468.82px 278.69px,471.2px 280.6px,473.53px 282.47px,475.83px 284.3px,478.08px 286.11px,480.31px 287.89px,482.5px 289.65px,484.67px 291.39px,486.81px 293.1px,488.91px 294.79px,490.98px 296.45px,493.01px 298.07px,495px 299.66px,496.94px 301.22px,498.84px 302.73px,500.68px 304.2px,502.48px 305.64px,504.24px 307.03px,505.95px 308.39px,507.62px 309.72px,509.25px 311.01px,510.84px 312.28px,512.4px 313.52px,513.91px 314.73px,515.38px 315.91px,516.82px 317.06px,518.21px 318.19px,519.56px 319.28px,520.88px 320.34px,522.16px 321.38px,523.42px 322.39px,524.63px 323.37px,525.81px 324.31px,526.95px 325.23px,528.06px 326.13px,529.13px 326.99px,530.18px 327.83px,531.2px 328.65px,532.2px 329.45px,533.17px 330.23px,534.11px 330.98px,535.02px 331.7px,535.9px 332.4px,536.76px 333.08px,537.6px 333.75px,538.41px 334.4px,539.21px 335.03px,539.99px 335.66px,540.74px 336.26px,541.46px 336.84px,542.17px 337.41px,542.86px 337.96px,543.53px 338.51px,544.19px 339.04px,544.84px 339.56px,545.47px 340.07px,546.1px 340.57px,546.7px 341.06px,547.3px 341.54px,547.88px 342.01px,548.44px 342.46px,549px 342.91px,549.54px 343.34px,550.06px 343.77px,550.58px 344.18px,551.08px 344.58px,551.56px 344.98px,552.04px 345.36px,552.5px 345.73px,552.95px 346.09px,553.39px 346.44px,553.82px 346.78px,554.23px 347.11px,554.64px 347.42px,555.03px 347.73px,555.41px 348.02px,555.77px 348.31px,556.13px 348.59px,556.47px 348.86px,556.8px 349.12px,557.12px 349.37px,557.42px 349.62px,557.71px 349.85px,557.99px 350.08px,558.26px 350.3px,558.53px 350.51px,558.78px 350.72px,559.03px 350.92px,559.27px 351.12px,559.51px 351.3px,559.73px 351.48px,559.95px 351.66px,560.16px 351.83px,560.36px 351.99px,560.56px 352.15px,560.74px 352.3px,560.93px 352.44px,561.1px 352.58px,561.27px 352.72px,561.43px 352.85px,561.58px 352.97px,561.73px 353.09px,561.87px 353.2px,561.99px 353.3px,562.11px 353.4px,562.22px 353.49px,562.33px 353.57px,562.43px 353.65px,562.52px 353.73px,562.62px 353.81px,562.71px 353.88px,562.81px 353.96px,562.9px 354.03px,562.99px 354.11px,563.08px 354.18px,563.16px 354.25px,563.25px 354.31px,563.33px 354.38px,563.41px 354.44px,563.48px 354.5px,563.55px 354.56px,563.62px 354.61px,563.69px 354.66px,563.75px 354.72px,563.81px 354.77px,563.88px 354.82px,563.95px 354.87px,564.01px 354.93px,564.08px 354.98px,564.15px 355.04px,564.22px 355.09px,564.29px 355.15px,564.36px 355.2px,564.42px 355.26px,564.48px 355.31px,564.55px 355.36px,564.61px 355.41px,564.67px 355.46px,564.73px 355.51px,564.79px 355.55px,564.84px 355.6px,564.9px 355.64px,564.95px 355.68px,564.99px 355.72px,565.04px 355.75px,565.08px 355.79px,565.12px 355.82px,565.16px 355.85px,565.19px 355.88px,565.23px 355.9px,565.26px 355.93px,565.28px 355.95px,565.31px 355.97px,565.33px 355.99px,565.35px 356px,565.36px 356.02px,565.38px 356.03px,565.39px 356.04px,565.41px 356.05px,565.42px 356.06px,565.44px 356.07px,565.45px 356.08px,565.46px 356.09px,565.47px 356.1px,565.47px 356.1px,565.48px 356.11px,565.49px 356.11px)"><i style="top:2px;left:54px;width:16px;height:2px;background:linear-gradient(90deg,#090 0,#090 16px)"></i><i style="top:4px;left:47px;width:31px;height:2px;background:linear-gradient(90deg,#090 0,#090 31px)"></i><i style="top:6px;left:40px;width:46px;height:2px;background:linear-gradient(90deg,#090 0,#090 46px)"></i><i style="top:8px;left:36px;width:58px;height:2px;background:linear-gradient(90deg,#090 0,#090 58px)"></i><i style="top:10px;left:33px;width:67px;height:2px;background:linear-gradient(90deg,#090 0,#090 67px)"></i><i style="top:12px;left:31px;width:73px;height:2px;background:linear-gradient(90deg,#090 0,#090 73px)"></i><i style="top:14px;left:29px;width:81px;height:2px;background:linear-gradient(90deg,#090 0,#090 81px)"></i><i style="top:16px;left:27px;width:86px;height:2px;background:linear-gradient(90deg,#090 0,#090 86px)"></i><i style="top:18px;left:25px;width:92px;height:2px;background:linear-gradient(90deg,#090 0,#090 92px)"></i><i style="top:20px;left:23px;width:100px;height:2px;background:linear-gradient(90deg,#009901 0,#090 100px)"></i><i style="top:22px;left:22px;width:105px;height:2px;background:linear-gradient(90deg,#009902 0,#090 105px)"></i><i style="top:24px;left:21px;width:109px;height:2px;background:linear-gradient(90deg,#009902 0,#090 109px)"></i><i style="top:26px;left:20px;width:114px;height:2px;background:linear-gradient(90deg,#009903 0,#090 21px,#090 114px)"></i><i style="top:28px;left:18px;width:120px;height:2px;background:linear-gradient(90deg,#009903 0,#090 26px,#090 120px)"></i><i style="top:30px;left:17px;width:124px;height:2px;background:linear-gradient(90deg,#009904 0,#090 30px,#090 124px)"></i><i style="top:32px;left:16px;width:129px;height:2px;background:linear-gradient(90deg,#009905 0,#090 34px,#090 129px)"></i><i style="top:34px;left:15px;width:134px;height:2px;background:linear-gradient(90deg,#009905 0,#090 38px,#090 134px)"></i><i style="top:36px;left:14px;width:138px;height:2px;background:linear-gradient(90deg,#009906 0,#090 42px,#090 138px)"></i><i style="top:38px;left:13px;width:143px;height:2px;background:linear-gradient(90deg,#009906 0,#090 46px,#090 143px)"></i><i style="top:40px;left:12px;width:147px;height:2px;background:linear-gradient(90deg,#009907 0,#090 50px,#090 147px)"></i><i style="top:42px;left:11px;width:152px;height:2px;background:linear-gradient(90deg,#009908 0,#090 54px,#090 152px)"></i><i style="top:44px;left:10px;width:156px;height:2px;background:linear-gradient(90deg,#009908 0,#090 59px,#090 156px)"></i><i style="top:46px;left:10px;width:160px;height:2px;background:linear-gradient(90deg,#009909 0,#090 62px,#090 160px)"></i><i style="top:48px;left:9px;width:164px;height:2px;background:linear-gradient(90deg,#009909 0,#090 66px,#090 164px)"></i><i style="top:50px;left:9px;width:168px;height:2px;background:linear-gradient(90deg,#00990a 0,#090 69px,#090 168px)"></i><i style="top:52px;left:8px;width:172px;height:2px;background:linear-gradient(90deg,#00990a 0,#090 73px,#090 172px)"></i><i style="top:54px;left:8px;width:174px;height:2px;background:linear-gradient(90deg,#00990b 0,#090 76px,#090 174px)"></i><i style="top:56px;left:7px;width:179px;height:2px;background:linear-gradient(90deg,#00990b 0,#090 80px,#090 179px)"></i><i style="top:58px;left:7px;width:182px;height:2px;background:linear-gradient(90deg,#00990c 0,#090 83px,#090 182px)"></i><i style="top:60px;left:6px;width:186px;height:2px;background:linear-gradient(90deg,#00990c 0,#090 88px,#090 186px)"></i><i style="top:62px;left:6px;width:188px;height:2px;background:linear-gradient(90deg,#00990d 0,#090 91px,#090 188px)"></i><i style="top:64px;left:5px;width:193px;height:2px;background:linear-gradient(90deg,#00990e 0,#090 95px,#090 193px)"></i><i style="top:66px;left:5px;width:196px;height:2px;background:linear-gradient(90deg,#00990e 0,#090 98px,#090 196px)"></i><i style="top:68px;left:5px;width:198px;height:2px;background:linear-gradient(90deg,#00990f 0,#090 101px,#090 198px)"></i><i style="top:70px;left:4px;width:203px;height:2px;background:linear-gradient(90deg,#00990f 0,#090 105px,#090 203px)"></i><i style="top:72px;left:4px;width:206px;height:2px;background:linear-gradient(90deg,#009910 0,#090 108px,#090 206px)"></i><i style="top:74px;left:3px;width:210px;height:2px;background:linear-gradient(90deg,#009910 0,#090 112px,#090 210px)"></i><i style="top:76px;left:3px;width:212px;height:2px;background:linear-gradient(90deg,#091 0,#090 116px,#090 212px)"></i><i style="top:78px;left:2px;width:216px;height:2px;background:linear-gradient(90deg,#009912 0,#090 120px,#090 216px)"></i><i style="top:80px;left:2px;width:219px;height:2px;background:linear-gradient(90deg,#009912 0,#090 123px,#090 219px)"></i><i style="top:82px;left:2px;width:222px;height:2px;background:linear-gradient(90deg,#009913 0,#090 126px,#090 222px)"></i><i style="top:84px;left:2px;width:224px;height:2px;background:linear-gradient(90deg,#009913 0,#090 129px,#090 224px)"></i><i style="top:86px;left:1px;width:228px;height:2px;background:linear-gradient(90deg,#009914 0,#090 133px,#090 228px)"></i><i style="top:88px;left:1px;width:231px;height:2px;background:linear-gradient(90deg,#009915 0,#090 136px,#090 231px)"></i><i style="top:90px;left:1px;width:233px;height:2px;background:linear-gradient(90deg,#009915 0,#090 139px,#090 233px)"></i><i style="top:92px;left:1px;width:237px;height:2px;background:linear-gradient(90deg,#009916 0,#090 143px,#090 237px)"></i><i style="top:94px;left:1px;width:239px;height:2px;background:linear-gradient(90deg,#009916 0,#090 146px,#090 239px)"></i><i style="top:96px;left:1px;width:241px;height:2px;background:linear-gradient(90deg,#009917 0,#090 149px,#090 241px)"></i><i style="top:98px;left:1px;width:244px;height:2px;background:linear-gradient(90deg,#009917 0,#090 152px,#090 244px)"></i><i style="top:100px;left:1px;width:247px;height:2px;background:linear-gradient(90deg,#009918 0,#090 155px,#019900 247px)"></i><i style="top:102px;left:0px;width:250px;height:2px;background:linear-gradient(90deg,#009919 0,#090 159px,#090 246px,#039900 250px)"></i><i style="top:104px;left:0px;width:253px;height:2px;background:linear-gradient(90deg,#009919 0,#090 162px,#090 245px,#069900 253px)"></i><i style="top:106px;left:0px;width:256px;height:2px;background:linear-gradient(90deg,#00991a 0,#090 165px,#090 245px,#099900 256px)"></i><i style="top:108px;left:0px;width:258px;height:2px;background:linear-gradient(90deg,#00991b 0,#090 169px,#090 244px,#0b9900 258px)"></i><i style="top:110px;left:0px;width:261px;height:2px;background:linear-gradient(90deg,#00991b 0,#090 172px,#090 243px,#0e9900 261px)"></i><i style="top:112px;left:0px;width:263px;height:2px;background:linear-gradient(90deg,#00991c 0,#090 175px,#090 242px,#190 263px)"></i><i style="top:114px;left:0px;width:266px;height:2px;background:linear-gradient(90deg,#00991d 0,#090 178px,#090 242px,#149900 266px)"></i><i style="top:116px;left:0px;width:269px;height:2px;background:linear-gradient(90deg,#00991d 0,#090 181px,#090 241px,#179900 269px)"></i><i style="top:118px;left:0px;width:271px;height:2px;background:linear-gradient(90deg,#00991e 0,#090 184px,#090 240px,#1a9900 271px)"></i><i style="top:120px;left:0px;width:274px;height:2px;background:linear-gradient(90deg,#00991e 0,#090 187px,#090 240px,#1d9900 274px)"></i><i style="top:122px;left:0px;width:277px;height:2px;background:linear-gradient(90deg,#00991f 0,#090 190px,#090 239px,#219900 277px)"></i><i style="top:124px;left:0px;width:279px;height:2px;background:linear-gradient(90deg,#009920 0,#090 193px,#090 238px,#239900 279px)"></i><i style="top:126px;left:0px;width:281px;height:2px;background:linear-gradient(90deg,#009920 0,#090 197px,#090 238px,#269900 281px)"></i><i style="top:128px;left:0px;width:284px;height:2px;background:linear-gradient(90deg,#009921 0,#009912 106px,#090 200px,#090 237px,#2a9900 284px)"></i><i style="top:130px;left:0px;width:287px;height:2px;background:linear-gradient(90deg,#092 0,#009912 108px,#090 203px,#090 236px,#2e9900 287px)"></i><i style="top:132px;left:0px;width:289px;height:2px;background:linear-gradient(90deg,#009923 0,#009912 110px,#090 206px,#090 236px,#319900 289px)"></i><i style="top:134px;left:0px;width:292px;height:2px;background:linear-gradient(90deg,#009923 0,#009913 111px,#090 209px,#090 235px,#359900 292px)"></i><i style="top:136px;left:0px;width:294px;height:2px;background:linear-gradient(90deg,#009924 0,#009913 113px,#090 212px,#090 234px,#389900 294px)"></i><i style="top:138px;left:0px;width:297px;height:2px;background:linear-gradient(90deg,#009925 0,#009914 115px,#090 215px,#090 234px,#3c9900 297px)"></i><i style="top:140px;left:0px;width:300px;height:2px;background:linear-gradient(90deg,#009925 0,#009914 117px,#090 218px,#090 233px,#409900 300px)"></i><i style="top:142px;left:0px;width:302px;height:2px;background:linear-gradient(90deg,#009926 0,#090 232px,#1f9900 266px,#490 302px)"></i><i style="top:144px;left:0px;width:305px;height:2px;background:linear-gradient(90deg,#009927 0,#009917 109px,#090 232px,#249900 270px,#489900 305px)"></i><i style="top:146px;left:0px;width:308px;height:2px;background:linear-gradient(90deg,#009928 0,#009916 118px,#090 231px,#249900 270px,#4d9900 308px)"></i><i style="top:148px;left:0px;width:310px;height:2px;background:linear-gradient(90deg,#009928 0,#009916 124px,#090 230px,#259900 270px,#519900 310px)"></i><i style="top:150px;left:0px;width:312px;height:2px;background:linear-gradient(90deg,#009929 0,#009917 124px,#009901 230px,#289900 272px,#549900 312px)"></i><i style="top:152px;left:0px;width:314px;height:2px;background:linear-gradient(90deg,#00992a 0,#009918 123px,#009902 229px,#2a9900 273px,#589900 314px)"></i><i style="top:154px;left:1px;width:316px;height:2px;background:linear-gradient(90deg,#00992a 0,#009918 122px,#009903 227px,#0c9900 240px,#2b9900 272px,#5d9900 316px)"></i><i style="top:156px;left:1px;width:319px;height:2px;background:linear-gradient(90deg,#00992b 0,#009919 122px,#009904 226px,#0f9900 243px,#2d9900 273px,#629900 319px)"></i><i style="top:158px;left:1px;width:322px;height:2px;background:linear-gradient(90deg,#00992c 0,#00991a 122px,#009905 226px,#139900 246px,#329900 276px,#689900 322px)"></i><i style="top:160px;left:1px;width:324px;height:2px;background:linear-gradient(90deg,#00992d 0,#00991b 121px,#009906 225px,#179900 249px,#390 276px,#6c9900 324px)"></i><i style="top:162px;left:1px;width:326px;height:2px;background:linear-gradient(90deg,#00992e 0,#00991c 121px,#009907 224px,#1b9900 252px,#349900 276px,#709900 326px)"></i><i style="top:164px;left:2px;width:328px;height:2px;background:linear-gradient(90deg,#00992e 0,#00991d 120px,#009908 223px,#1f9900 254px,#389900 278px,#769900 328px)"></i><i style="top:166px;left:2px;width:331px;height:2px;background:linear-gradient(90deg,#00992f 0,#00991d 120px,#009909 222px,#239900 257px,#3b9900 279px,#7c9900 331px)"></i><i style="top:168px;left:2px;width:333px;height:2px;background:linear-gradient(90deg,#009930 0,#00991f 119px,#00990a 221px,#279900 260px,#3c9900 279px,#819900 333px)"></i><i style="top:170px;left:2px;width:335px;height:2px;background:linear-gradient(90deg,#009931 0,#00991f 119px,#00990b 221px,#2b9900 263px,#3f9900 281px,#869900 335px)"></i><i style="top:172px;left:2px;width:339px;height:2px;background:linear-gradient(90deg,#009932 0,#009920 119px,#00990c 220px,#319900 267px,#439900 283px,#689900 312px,#8e9900 339px)"></i><i style="top:174px;left:2px;width:341px;height:2px;background:linear-gradient(90deg,#093 0,#009921 118px,#00990d 219px,#359900 270px,#490 283px,#6b9900 313px,#939900 341px)"></i><i style="top:176px;left:2px;width:343px;height:2px;background:linear-gradient(90deg,#093 0,#092 118px,#00990e 219px,#3a9900 273px,#489900 285px,#6f9900 315px,#990 343px)"></i><i style="top:178px;left:2px;width:345px;height:2px;background:linear-gradient(90deg,#009934 0,#009923 118px,#00990f 218px,#3f9900 276px,#6a9900 310px,#989900 341px,#999400 345px)"></i><i style="top:180px;left:2px;width:348px;height:2px;background:linear-gradient(90deg,#009935 0,#009924 117px,#009910 217px,#219908 249px,#479900 282px,#6f9900 312px,#990 340px,#998e00 348px)"></i><i style="top:182px;left:3px;width:349px;height:2px;background:linear-gradient(90deg,#009936 0,#009925 117px,#091 216px,#239909 249px,#479900 280px,#6e9900 309px,#989900 337px,#998900 349px)"></i><i style="top:184px;left:3px;width:352px;height:2px;background:linear-gradient(90deg,#009937 0,#009926 116px,#009912 215px,#23990a 248px,#489902 279px,#6e9900 308px,#990 336px,#998300 352px)"></i><i style="top:186px;left:3px;width:355px;height:2px;background:linear-gradient(90deg,#009938 0,#009927 116px,#009914 214px,#20990c 245px,#469903 277px,#590 288px,#989900 334px,#997d00 355px)"></i><i style="top:188px;left:3px;width:357px;height:2px;background:linear-gradient(90deg,#009939 0,#009928 116px,#009915 214px,#23990d 246px,#489904 277px,#5a9900 291px,#990 333px,#997900 357px)"></i><i style="top:190px;left:3px;width:359px;height:2px;background:linear-gradient(90deg,#00993a 0,#009929 115px,#009916 213px,#22990e 245px,#479906 275px,#609900 294px,#989900 331px,#997500 359px)"></i><i style="top:192px;left:4px;width:361px;height:2px;background:linear-gradient(90deg,#00993b 0,#00992a 114px,#009917 211px,#219910 242px,#479907 273px,#690 296px,#990 329px,#998200 345px,#997000 361px)"></i><i style="top:194px;left:4px;width:364px;height:2px;background:linear-gradient(90deg,#00993c 0,#00992c 113px,#009919 210px,#1f9911 239px,#469909 271px,#6c9900 299px,#990 328px,#998000 345px,#996b00 364px)"></i><i style="top:196px;left:4px;width:366px;height:2px;background:linear-gradient(90deg,#00993d 0,#00992c 114px,#00991a 210px,#229912 241px,#47990a 271px,#739900 302px,#990 326px,#997e00 345px,#996800 366px)"></i><i style="top:198px;left:4px;width:368px;height:2px;background:linear-gradient(90deg,#00993e 0,#00992e 113px,#00991b 209px,#229913 240px,#47990b 270px,#799900 305px,#990 325px,#997c00 345px,#996400 368px)"></i><i style="top:200px;left:4px;width:371px;height:2px;background:linear-gradient(90deg,#00993f 0,#00992f 112px,#00991c 208px,#209915 237px,#46990d 268px,#809900 308px,#990 323px,#997a00 345px,#996000 371px)"></i><i style="top:202px;left:5px;width:372px;height:2px;background:linear-gradient(90deg,#00993f 0,#009930 112px,#00991d 207px,#239916 238px,#48990e 267px,#879900 310px,#990 321px,#997800 344px,#995d00 372px)"></i><i style="top:204px;left:5px;width:376px;height:2px;background:linear-gradient(90deg,#009940 0,#009931 111px,#00991f 206px,#239917 237px,#48990f 266px,#6f9907 293px,#990 319px,#997500 345px,#995800 376px)"></i><i style="top:206px;left:5px;width:378px;height:2px;background:linear-gradient(90deg,#009942 0,#009932 111px,#009920 205px,#209919 234px,#479911 264px,#6e9909 291px,#990 318px,#998400 331px,#997300 345px,#950 378px)"></i><i style="top:208px;left:6px;width:379px;height:2px;background:linear-gradient(90deg,#009942 0,#093 110px,#009921 204px,#23991a 234px,#489912 263px,#70990a 290px,#999901 315px,#998400 329px,#997100 344px,#995200 379px)"></i><i style="top:210px;left:6px;width:381px;height:2px;background:linear-gradient(90deg,#094 0,#009934 110px,#009923 203px,#23991c 233px,#479914 261px,#6d990c 287px,#999903 314px,#998300 328px,#996f00 344px,#995000 381px)"></i><i style="top:212px;left:6px;width:384px;height:2px;background:linear-gradient(90deg,#009945 0,#009936 109px,#009924 202px,#21991d 231px,#479916 260px,#6f990d 287px,#999905 312px,#998500 325px,#996d00 344px,#995c00 363px,#994c00 384px)"></i><i style="top:214px;left:7px;width:386px;height:2px;background:linear-gradient(90deg,#009946 0,#009937 108px,#009926 200px,#1f991f 227px,#469917 257px,#6c9910 283px,#999907 310px,#997e00 327px,#996c00 343px,#995900 363px,#994900 386px)"></i><i style="top:216px;left:7px;width:388px;height:2px;background:linear-gradient(90deg,#009947 0,#009938 108px,#009927 200px,#229920 229px,#479919 257px,#6e9911 283px,#999909 308px,#997f02 325px,#996a00 343px,#995700 364px,#994700 388px)"></i><i style="top:218px;left:7px;width:391px;height:2px;background:linear-gradient(90deg,#009948 0,#009939 108px,#009928 199px,#219922 227px,#46991b 255px,#6d9913 281px,#99990a 307px,#997e03 324px,#996800 343px,#950 365px,#940 391px)"></i><i style="top:220px;left:8px;width:392px;height:2px;background:linear-gradient(90deg,#009949 0,#00993b 107px,#00992a 197px,#209924 224px,#46991c 253px,#6e9915 279px,#99990c 304px,#997d05 322px,#960 342px,#995200 365px,#994100 392px)"></i><i style="top:222px;left:8px;width:395px;height:2px;background:linear-gradient(90deg,#00994a 0,#00993c 107px,#00992b 197px,#229925 225px,#47991e 252px,#6d9917 277px,#99980e 303px,#997c06 321px,#996400 342px,#995000 366px,#993e00 395px)"></i><i style="top:224px;left:8px;width:397px;height:2px;background:linear-gradient(90deg,#00994b 0,#00993d 106px,#00992d 196px,#229926 224px,#47991f 251px,#6f9918 277px,#999910 301px,#997c07 320px,#996300 342px,#994e00 367px,#993c00 397px)"></i><i style="top:226px;left:8px;width:399px;height:2px;background:linear-gradient(90deg,#00994c 0,#00993f 106px,#00992e 195px,#1f9929 221px,#459921 249px,#6c991a 274px,#999812 300px,#997b09 319px,#996201 341px,#994c00 368px,#993a00 399px)"></i><i style="top:228px;left:9px;width:400px;height:2px;background:linear-gradient(90deg,#00994d 0,#009940 105px,#009930 194px,#23992a 222px,#499923 249px,#70991b 274px,#999914 297px,#997a0a 317px,#996002 340px,#994b00 367px,#993800 400px)"></i><i style="top:230px;left:9px;width:403px;height:2px;background:linear-gradient(90deg,#00994f 0,#009941 105px,#009932 193px,#21992b 220px,#479925 247px,#6d991e 271px,#999816 296px,#99790c 316px,#995e03 340px,#994800 369px,#993600 403px)"></i><i style="top:232px;left:9px;width:407px;height:2px;background:linear-gradient(90deg,#009950 0,#009943 104px,#093 192px,#20992d 218px,#469927 245px,#6e9920 270px,#999918 294px,#99780d 315px,#995d04 340px,#995100 354px,#994600 370px,#930 407px)"></i><i style="top:234px;left:10px;width:408px;height:2px;background:linear-gradient(90deg,#009951 0,#094 104px,#009935 191px,#23992f 218px,#489928 244px,#6e9921 268px,#98991a 291px,#99760e 314px,#995b05 339px,#994d00 356px,#940 370px,#993100 408px)"></i><i style="top:236px;left:10px;width:410px;height:2px;background:linear-gradient(90deg,#009952 0,#009946 103px,#009936 190px,#229930 217px,#48992a 243px,#6f9923 267px,#99991c 290px,#997610 312px,#995905 339px,#994a00 359px,#994200 371px,#992f00 410px)"></i><i style="top:238px;left:11px;width:412px;height:2px;background:linear-gradient(90deg,#009954 0,#009947 102px,#009938 188px,#209933 213px,#46992c 240px,#6d9926 264px,#98991e 287px,#997411 311px,#995806 338px,#994600 361px,#992d00 412px)"></i><i style="top:240px;left:11px;width:414px;height:2px;background:linear-gradient(90deg,#095 0,#009948 102px,#00993a 188px,#249934 215px,#48992e 240px,#709927 264px,#999920 286px,#997413 309px,#995707 337px,#994300 364px,#992b00 414px)"></i><i style="top:242px;left:11px;width:417px;height:2px;background:linear-gradient(90deg,#009956 0,#00994a 101px,#00993c 187px,#229936 213px,#479930 238px,#6f992a 262px,#989923 284px,#997214 309px,#995508 337px,#994000 367px,#992900 417px)"></i><i style="top:244px;left:12px;width:418px;height:2px;background:linear-gradient(90deg,#009957 0,#00994c 100px,#00993d 185px,#209938 210px,#479932 236px,#6f992c 260px,#999925 282px,#997316 306px,#995409 336px,#993d00 369px,#992800 418px)"></i><i style="top:246px;left:12px;width:420px;height:2px;background:linear-gradient(90deg,#009959 0,#00994d 100px,#01993f 185px,#23993a 211px,#479934 235px,#6e992e 258px,#989927 280px,#997016 306px,#99530a 335px,#993a00 372px,#992600 420px)"></i><i style="top:248px;left:12px;width:423px;height:2px;background:linear-gradient(90deg,#00995a 0,#00994f 100px,#009941 184px,#23993c 210px,#479936 234px,#6e9930 257px,#99992a 279px,#998420 291px,#997118 304px,#99510b 335px,#993700 376px,#992400 423px)"></i><i style="top:250px;left:13px;width:425px;height:2px;background:linear-gradient(90deg,#00995b 0,#009950 99px,#009943 182px,#20993e 206px,#469938 231px,#6d9932 254px,#98992c 276px,#998121 290px,#996f19 303px,#99500c 334px,#993400 378px,#920 425px)"></i><i style="top:252px;left:13px;width:426px;height:2px;background:linear-gradient(90deg,#00995d 0,#009952 98px,#009945 181px,#1e9940 204px,#46993a 230px,#6e9935 253px,#99992e 275px,#998224 288px,#996f1b 301px,#994f0d 333px,#993200 381px,#992100 426px)"></i><i style="top:254px;left:13px;width:429px;height:2px;background:linear-gradient(90deg,#00995e 0,#009954 98px,#009947 181px,#239942 206px,#48993c 230px,#6e9937 252px,#989931 273px,#998125 287px,#996e1d 300px,#995d15 315px,#994d0e 333px,#993d06 357px,#992f00 384px,#991f00 429px)"></i><i style="top:256px;left:13px;width:432px;height:2px;background:linear-gradient(90deg,#009960 0,#095 98px,#009949 180px,#239944 205px,#48993f 229px,#6f9939 251px,#993 272px,#998128 285px,#996d1e 299px,#994c0f 332px,#993c07 357px,#992d00 387px,#991e00 432px)"></i><i style="top:258px;left:14px;width:434px;height:2px;background:linear-gradient(90deg,#009961 0,#00994b 178px,#1e9947 200px,#459941 225px,#6e993c 248px,#989936 269px,#997f29 284px,#996c20 297px,#995a17 313px,#994b10 331px,#993907 358px,#992b00 389px,#991c00 434px)"></i><i style="top:260px;left:14px;width:436px;height:2px;background:linear-gradient(90deg,#009963 0,#00994d 178px,#249948 203px,#499943 226px,#70993e 248px,#999938 268px,#99812c 281px,#996b21 296px,#995a19 312px,#994910 331px,#993808 359px,#992900 392px,#991b00 436px)"></i><i style="top:262px;left:15px;width:437px;height:2px;background:linear-gradient(90deg,#009964 0,#00994f 176px,#22994a 200px,#479946 223px,#6f9940 245px,#98993b 265px,#997e2d 280px,#996a23 294px,#99591a 310px,#994812 329px,#993608 359px,#992700 394px,#991900 437px)"></i><i style="top:264px;left:15px;width:439px;height:2px;background:linear-gradient(90deg,#096 0,#009951 175px,#20994d 198px,#479948 222px,#6f9943 244px,#99993e 264px,#998031 277px,#996b25 292px,#99581b 309px,#994813 328px,#993509 359px,#992400 397px,#991800 439px)"></i><i style="top:266px;left:15px;width:442px;height:2px;background:linear-gradient(90deg,#009967 0,#009953 175px,#23994f 199px,#47994a 221px,#6e9946 242px,#989941 262px,#997e32 277px,#996a27 291px,#99571d 308px,#994613 328px,#993209 361px,#992300 400px,#991700 442px)"></i><i style="top:268px;left:16px;width:444px;height:2px;background:linear-gradient(90deg,#009969 0,#095 173px,#239951 197px,#48994d 219px,#6f9948 240px,#999943 260px,#997e34 274px,#996928 289px,#99551d 307px,#994514 327px,#993109 361px,#992000 403px,#991500 444px)"></i><i style="top:270px;left:16px;width:446px;height:2px;background:linear-gradient(90deg,#00996b 0,#009957 172px,#209954 194px,#46994f 217px,#6d994b 238px,#989946 258px,#997d36 273px,#99682a 288px,#99541f 306px,#994415 326px,#99300a 361px,#991f00 404px,#991400 446px)"></i><i style="top:272px;left:17px;width:448px;height:2px;background:linear-gradient(90deg,#00996c 0,#01995a 171px,#239956 194px,#489952 216px,#70994d 237px,#999949 256px,#997e39 270px,#99672b 286px,#995320 304px,#994216 325px,#992e0a 360px,#991e01 403px,#991300 448px)"></i><i style="top:274px;left:17px;width:450px;height:2px;background:linear-gradient(90deg,#00996e 0,#00995c 170px,#239958 193px,#469955 214px,#6f9950 235px,#98994c 254px,#997b3a 270px,#99662d 285px,#995221 303px,#994117 324px,#992e0b 359px,#991e02 402px,#910 450px)"></i><i style="top:276px;left:17px;width:453px;height:2px;background:linear-gradient(90deg,#009970 0,#00995e 169px,#21995b 191px,#479957 213px,#6f9953 234px,#99994f 253px,#997d3e 267px,#99662f 283px,#995123 302px,#994018 324px,#992d0c 359px,#991d02 402px,#991000 453px)"></i><i style="top:278px;left:18px;width:454px;height:2px;background:linear-gradient(90deg,#009971 0,#009961 167px,#1e995e 187px,#45995a 210px,#6e9956 231px,#989952 250px,#997b3f 266px,#996531 281px,#995124 300px,#993f19 322px,#993010 348px,#992308 378px,#991700 417px,#990f00 454px)"></i><i style="top:280px;left:18px;width:457px;height:2px;background:linear-gradient(90deg,#009973 0,#009963 167px,#229960 189px,#47995d 210px,#6f9959 230px,#995 249px,#997b42 264px,#996433 280px,#995025 299px,#993e1a 321px,#992f11 347px,#992208 378px,#991600 420px,#990e00 457px)"></i><i style="top:282px;left:19px;width:458px;height:2px;background:linear-gradient(90deg,#009975 0,#096 165px,#229963 187px,#47995f 208px,#6f995c 228px,#989958 246px,#997a44 262px,#996334 278px,#994f27 297px,#993d1b 320px,#992e11 347px,#992108 378px,#991400 422px,#990d00 458px)"></i><i style="top:284px;left:19px;width:460px;height:2px;background:linear-gradient(90deg,#097 0,#009968 164px,#1f9966 184px,#469962 206px,#6e995f 226px,#99995b 245px,#997c48 259px,#996337 276px,#994e28 296px,#993c1c 319px,#992d12 346px,#992009 378px,#991300 425px,#990c00 460px)"></i><i style="top:286px;left:20px;width:463px;height:2px;background:linear-gradient(90deg,#009978 0,#00996b 163px,#249968 185px,#489965 205px,#6e9962 224px,#98995f 242px,#997a49 258px,#996138 275px,#994c29 295px,#993b1d 318px,#992b12 346px,#991e09 379px,#910 427px,#990a00 463px)"></i><i style="top:288px;left:20px;width:465px;height:2px;background:linear-gradient(90deg,#00997a 0,#00996d 162px,#22996b 183px,#489968 204px,#6f9965 223px,#999962 241px,#997a4c 256px,#99613a 273px,#994c2b 293px,#993a1e 317px,#992b13 345px,#991d0a 379px,#991000 430px,#990900 465px)"></i><i style="top:290px;left:20px;width:467px;height:2px;background:linear-gradient(90deg,#00997c 0,#009970 161px,#1e996e 180px,#44996b 201px,#699969 219px,#999865 240px,#99794e 255px,#99603c 272px,#994b2c 292px,#99391f 316px,#992914 345px,#991c0a 379px,#990f00 433px,#990800 467px)"></i><i style="top:292px;left:21px;width:468px;height:2px;background:linear-gradient(90deg,#00997e 0,#009973 160px,#239971 181px,#48996e 201px,#70996c 220px,#999969 237px,#997a51 252px,#99603e 269px,#994a2e 290px,#993820 314px,#992915 343px,#991c0b 378px,#990d00 435px,#990700 468px)"></i><i style="top:294px;left:21px;width:471px;height:2px;background:linear-gradient(90deg,#009980 0,#009976 159px,#239974 180px,#479972 199px,#6a996f 216px,#99986c 236px,#997854 251px,#995f40 268px,#99492f 289px,#993721 314px,#992513 349px,#991608 393px,#990c00 438px,#990600 471px)"></i><i style="top:296px;left:22px;width:472px;height:2px;background:linear-gradient(90deg,#009982 0,#009979 157px,#1f9977 176px,#479975 197px,#709973 216px,#999970 233px,#997957 248px,#995e42 266px,#994831 287px,#993622 312px,#992414 347px,#991609 391px,#990b00 441px,#990500 472px)"></i><i style="top:298px;left:22px;width:476px;height:2px;background:linear-gradient(90deg,#009984 0,#01997c 157px,#23997a 177px,#479978 196px,#6c9976 213px,#999873 232px,#997859 247px,#995d44 265px,#994732 286px,#993423 312px,#992315 348px,#991509 392px,#990900 444px,#990400 476px)"></i><i style="top:300px;left:23px;width:476px;height:2px;background:linear-gradient(90deg,#009986 0,#00997f 155px,#23997d 175px,#47997c 194px,#6f997a 212px,#999978 229px,#99785d 244px,#995d46 262px,#994734 283px,#993424 309px,#992216 345px,#99140a 389px,#990800 446px,#990400 476px)"></i><i style="top:302px;left:23px;width:479px;height:2px;background:linear-gradient(90deg,#009989 0,#009982 154px,#219980 173px,#46997f 192px,#6b997e 209px,#99987b 228px,#99775f 243px,#995c48 261px,#994535 283px,#993325 309px,#992116 345px,#99130a 390px,#990700 449px,#990300 479px)"></i><i style="top:304px;left:23px;width:482px;height:2px;background:linear-gradient(90deg,#00998b 0,#009985 153px,#1d9984 170px,#469983 191px,#6e9981 209px,#999980 226px,#997863 241px,#995c4b 259px,#994537 281px,#993226 308px,#992117 344px,#99130b 389px,#990600 452px,#990200 482px)"></i><i style="top:306px;left:24px;width:483px;height:2px;background:linear-gradient(90deg,#00998d 0,#098 152px,#229987 171px,#469986 189px,#6a9985 205px,#999883 224px,#997765 239px,#995b4d 257px,#994439 279px,#993127 306px,#992018 343px,#99120c 388px,#990500 454px,#990100 483px)"></i><i style="top:308px;left:24px;width:486px;height:2px;background:linear-gradient(90deg,#00998f 0,#00998b 151px,#20998b 169px,#46998a 188px,#6f9989 206px,#998 222px,#997769 237px,#995a4f 256px,#99433a 278px,#993029 305px,#991f19 342px,#99110c 388px,#990400 457px,#900 486px)"></i><i style="top:310px;left:25px;width:487px;height:2px;background:linear-gradient(90deg,#009992 0,#00998f 149px,#1e998e 166px,#44998e 185px,#69998d 201px,#99988b 220px,#99766c 235px,#995951 254px,#99413b 277px,#992f29 304px,#991e19 341px,#99100d 387px,#990300 459px,#900 487px)"></i><i style="top:312px;left:25px;width:490px;height:2px;background:linear-gradient(90deg,#009994 0,#009992 149px,#239992 168px,#499992 186px,#6f9991 202px,#999991 218px,#99756e 234px,#995853 253px,#99403c 276px,#992d2a 304px,#991d1a 341px,#990f0d 388px,#990200 462px,#900 490px)"></i><i style="top:314px;left:26px;width:492px;height:2px;background:linear-gradient(90deg,#009996 0,#009996 147px,#219996 165px,#459996 182px,#6a9995 198px,#999894 216px,#997370 232px,#995754 251px,#993f3e 274px,#992c2b 303px,#991c1b 340px,#990e0e 386px,#990100 464px,#900 492px)"></i><i style="top:316px;left:26px;width:493px;height:2px;background:linear-gradient(90deg,#099 0,#099 146px,#1d9899 162px,#439899 180px,#669899 195px,#999697 215px,#997273 231px,#995656 250px,#993e3f 273px,#992b2c 302px,#991b1b 340px,#990d0e 388px,#990001 464px,#900 493px)"></i><i style="top:318px;left:27px;width:495px;height:2px;background:linear-gradient(90deg,#009799 0,#009599 145px,#459499 180px,#999298 214px,#996f73 230px,#995357 249px,#993c3f 273px,#99292c 302px,#99181b 342px,#990b0d 391px,#990002 458px,#900 495px)"></i><i style="top:320px;left:27px;width:498px;height:2px;background:linear-gradient(90deg,#009499 0,#009199 144px,#219199 162px,#469099 180px,#6b9099 196px,#998e98 214px,#996c74 230px,#995158 249px,#993a40 273px,#99272c 303px,#99171b 344px,#990a0d 396px,#990003 454px,#900 498px)"></i><i style="top:322px;left:28px;width:499px;height:2px;background:linear-gradient(90deg,#009299 0,#008e99 142px,#1e8d99 159px,#448d99 178px,#6b8c99 195px,#998a98 213px,#996975 229px,#994d57 249px,#993840 273px,#99262d 302px,#99151a 345px,#99080c 399px,#990004 449px,#900 499px)"></i><i style="top:324px;left:28px;width:501px;height:2px;background:linear-gradient(90deg,#008f99 0,#018b99 142px,#238a99 161px,#478999 179px,#6e8899 196px,#998699 213px,#996675 229px,#994b58 249px,#993640 273px,#99242d 303px,#99141a 347px,#99070c 403px,#990005 444px,#900 501px)"></i><i style="top:326px;left:29px;width:504px;height:2px;background:linear-gradient(90deg,#008d99 0,#008799 140px,#248699 160px,#488599 178px,#6e8499 195px,#998299 212px,#996376 228px,#994958 248px,#993440 273px,#99222d 303px,#99121a 349px,#99050b 409px,#990006 439px,#900 481px,#900 504px)"></i><i style="top:328px;left:30px;width:505px;height:2px;background:linear-gradient(90deg,#008b99 0,#008499 138px,#218399 157px,#468199 176px,#6e8099 194px,#997e99 211px,#995f74 228px,#994658 248px,#993140 273px,#99212d 303px,#991019 351px,#99030a 413px,#990007 433px,#900 482px,#900 505px)"></i><i style="top:330px;left:30px;width:508px;height:2px;background:linear-gradient(90deg,#089 0,#018199 138px,#457e99 175px,#6e7c99 194px,#987a99 211px,#997897 212px,#995a73 229px,#994357 249px,#992f40 274px,#991f2c 305px,#990e19 355px,#99010a 420px,#900 486px,#900 508px)"></i><i style="top:332px;left:31px;width:509px;height:2px;background:linear-gradient(90deg,#008699 0,#007e99 136px,#457a99 174px,#997597 211px,#995874 228px,#994057 249px,#992d40 274px,#991d2c 305px,#990d19 356px,#990009 423px,#900 488px,#900 509px)"></i><i style="top:334px;left:31px;width:511px;height:2px;background:linear-gradient(90deg,#008499 0,#007b99 135px,#207999 154px,#479 173px,#687599 190px,#997198 211px,#995574 228px,#993e57 249px,#992b40 274px,#991c2d 305px,#990c1a 354px,#99000b 418px,#900 491px,#900 511px)"></i><i style="top:336px;left:32px;width:513px;height:2px;background:linear-gradient(90deg,#008199 0,#007899 133px,#1d7699 151px,#447499 172px,#6a7299 190px,#996e98 210px,#995275 227px,#993c58 248px,#992940 274px,#991a2d 305px,#990c1b 352px,#99000c 413px,#990001 487px,#900 513px)"></i><i style="top:338px;left:32px;width:515px;height:2px;background:linear-gradient(90deg,#007f99 0,#007599 133px,#237399 154px,#477099 173px,#6b6e99 190px,#996a98 210px,#995075 227px,#993a58 248px,#992741 274px,#99192d 306px,#990b1b 351px,#99000d 408px,#990002 481px,#900 515px)"></i><i style="top:340px;left:33px;width:517px;height:2px;background:linear-gradient(90deg,#007d99 0,#007299 131px,#227099 152px,#476d99 172px,#6d6b99 190px,#996798 209px,#994c74 227px,#993758 248px,#992540 274px,#99172d 306px,#990a1c 349px,#99000e 403px,#990003 476px,#900 517px)"></i><i style="top:342px;left:33px;width:520px;height:2px;background:linear-gradient(90deg,#007b99 0,#007099 130px,#1e6d99 149px,#466a99 171px,#6d6799 190px,#996499 209px,#994a75 227px,#993558 248px,#992441 274px,#99162e 306px,#990a1d 347px,#990010 398px,#990004 472px,#900 520px)"></i><i style="top:344px;left:34px;width:521px;height:2px;background:linear-gradient(90deg,#007899 0,#006d99 129px,#246a99 151px,#486799 171px,#6f6499 190px,#996199 208px,#994775 226px,#993359 247px,#992241 274px,#99142e 306px,#99091e 345px,#901 393px,#990004 467px,#900 521px)"></i><i style="top:346px;left:34px;width:524px;height:2px;background:linear-gradient(90deg,#007699 0,#006a99 128px,#216799 149px,#456499 169px,#6d6199 189px,#995d99 208px,#995c97 209px,#994474 227px,#993057 249px,#991f40 276px,#99132d 308px,#99081f 345px,#990013 389px,#990005 464px,#900 524px)"></i><i style="top:348px;left:35px;width:525px;height:2px;background:linear-gradient(90deg,#007499 0,#006899 126px,#1f6599 146px,#446299 167px,#995997 208px,#994174 226px,#992e58 248px,#991e41 275px,#99112d 308px,#990820 342px,#990014 383px,#990006 459px,#900 525px)"></i><i style="top:350px;left:35px;width:528px;height:2px;background:linear-gradient(90deg,#007299 0,#006599 126px,#236299 148px,#465e99 168px,#995697 208px,#993f75 226px,#992b58 249px,#991c40 276px,#99102d 309px,#990016 379px,#990007 457px,#900 528px)"></i><i style="top:352px;left:36px;width:529px;height:2px;background:linear-gradient(90deg,#007099 0,#006399 124px,#225f99 146px,#475c99 167px,#995398 207px,#993d75 225px,#992a58 248px,#991b41 275px,#990f2e 308px,#990017 373px,#990008 451px,#900 529px)"></i><i style="top:354px;left:36px;width:532px;height:2px;background:linear-gradient(90deg,#006e99 0,#006099 123px,#205d99 144px,#455999 166px,#6a5599 185px,#995098 207px,#993a76 225px,#992859 248px,#991a42 275px,#990d2e 309px,#990019 368px,#901 403px,#990005 476px,#900 532px)"></i><i style="top:356px;left:37px;width:531px;height:2px;background:linear-gradient(90deg,#006c99 0,#015e99 122px,#245a99 145px,#485699 166px,#6c5299 185px,#994d98 206px,#993876 224px,#992659 247px,#991842 274px,#990c2f 308px,#99001b 363px,#901 401px,#990006 471px,#900 531px)"></i><i style="top:358px;left:38px;width:525px;height:2px;background:linear-gradient(90deg,#006a99 0,#005b99 120px,#235799 143px,#485399 165px,#6e4f99 185px,#994a99 205px,#993677 223px,#99255a 246px,#991743 273px,#990b30 306px,#99001c 357px,#990013 395px,#990008 457px,#900 525px)"></i><i style="top:360px;left:39px;width:518px;height:2px;background:linear-gradient(90deg,#006899 0,#005999 118px,#205599 140px,#475199 163px,#6f4c99 184px,#994799 204px,#993477 222px,#99245b 244px,#991644 271px,#990b31 303px,#99001e 352px,#990014 390px,#990001 518px)"></i><i style="top:362px;left:39px;width:513px;height:2px;background:linear-gradient(90deg,#069 0,#015799 118px,#245299 142px,#494e99 164px,#714999 185px,#994599 204px,#993278 222px,#99225c 244px,#991544 271px,#990a32 303px,#990020 347px,#990015 388px,#990001 513px)"></i><i style="top:364px;left:40px;width:507px;height:2px;background:linear-gradient(90deg,#006499 0,#005499 116px,#444c99 160px,#994197 204px,#992f77 222px,#99205b 244px,#991345 270px,#990932 302px,#902 342px,#990016 386px,#990002 507px)"></i><i style="top:366px;left:40px;width:501px;height:2px;background:linear-gradient(90deg,#006299 0,#005299 115px,#214e99 138px,#454a99 160px,#993e97 204px,#992d77 222px,#991f5d 243px,#991246 269px,#990834 300px,#990024 337px,#990017 382px,#990003 501px)"></i><i style="top:368px;left:41px;width:495px;height:2px;background:linear-gradient(90deg,#006099 0,#015099 114px,#234c99 138px,#474799 160px,#993c98 203px,#992b77 221px,#991d5d 242px,#991247 267px,#990835 298px,#990026 332px,#990018 379px,#990004 495px)"></i><i style="top:370px;left:42px;width:488px;height:2px;background:linear-gradient(90deg,#005e99 0,#004e99 112px,#464599 158px,#6b4099 179px,#993998 202px,#992978 220px,#991b5e 241px,#991048 266px,#990736 296px,#990028 327px,#990019 375px,#990005 488px)"></i><i style="top:372px;left:42px;width:483px;height:2px;background:linear-gradient(90deg,#005c99 0,#004c99 111px,#224799 135px,#464299 158px,#6c3d99 179px,#993798 202px,#99277a 219px,#991a5f 240px,#990f49 265px,#990637 295px,#99002a 322px,#99001a 373px,#990006 483px)"></i><i style="top:374px;left:43px;width:477px;height:2px;background:linear-gradient(90deg,#005a99 0,#004a99 109px,#204599 132px,#454099 156px,#6c3b99 178px,#993499 201px,#99257a 218px,#991960 239px,#990e4a 264px,#990538 293px,#99002c 317px,#99001b 369px,#990007 477px)"></i><i style="top:376px;left:43px;width:471px;height:2px;background:linear-gradient(90deg,#005899 0,#004899 109px,#234399 134px,#473e99 157px,#6e3899 179px,#993299 201px,#99247b 218px,#991760 239px,#990d4b 263px,#990539 292px,#99002f 312px,#99001d 366px,#990008 471px)"></i><i style="top:378px;left:44px;width:465px;height:2px;background:linear-gradient(90deg,#005699 0,#004699 107px,#224199 132px,#483b99 156px,#703599 179px,#992f99 200px,#99227b 217px,#991662 237px,#990c4c 261px,#99043a 289px,#990031 307px,#99001e 362px,#990009 465px)"></i><i style="top:380px;left:44px;width:460px;height:2px;background:linear-gradient(90deg,#059 0,#049 106px,#203f99 130px,#463999 155px,#6e3399 178px,#992d99 200px,#99207b 217px,#991562 237px,#990b4d 260px,#99033b 288px,#990034 302px,#99001f 360px,#99000a 460px)"></i><i style="top:382px;left:45px;width:453px;height:2px;background:linear-gradient(90deg,#005399 0,#004299 105px,#453799 153px,#992a97 200px,#991d7a 217px,#991362 237px,#990a4d 260px,#99023c 287px,#99002d 319px,#990020 357px,#99000c 453px)"></i><i style="top:384px;left:46px;width:447px;height:2px;background:linear-gradient(90deg,#005199 0,#004099 103px,#463599 152px,#992898 199px,#991b7b 216px,#991263 235px,#99094e 258px,#99013d 285px,#99002e 316px,#990021 353px,#99000d 447px)"></i><i style="top:386px;left:47px;width:441px;height:2px;background:linear-gradient(90deg,#004f99 0,#003e99 101px,#213999 126px,#463399 151px,#6b2d99 173px,#992598 198px,#991a7b 215px,#991064 234px,#99084f 257px,#99013e 283px,#99002f 314px,#902 350px,#99000e 441px)"></i><i style="top:388px;left:48px;width:434px;height:2px;background:linear-gradient(90deg,#004d99 0,#013d99 100px,#233799 126px,#463199 150px,#6b2b99 172px,#992398 197px,#99187d 213px,#990f65 232px,#990751 254px,#99003f 280px,#990030 310px,#990024 345px,#99000f 434px)"></i><i style="top:390px;left:48px;width:429px;height:2px;background:linear-gradient(90deg,#004c99 0,#003b99 99px,#223599 125px,#472f99 150px,#6d2999 173px,#992198 197px,#99177d 213px,#990d66 232px,#990651 254px,#990040 279px,#990031 309px,#990025 343px,#990010 429px)"></i><i style="top:392px;left:49px;width:422px;height:2px;background:linear-gradient(90deg,#004a99 0,#003999 97px,#213399 123px,#472d99 149px,#6d2799 172px,#991f99 196px,#99157e 212px,#990c67 230px,#990553 251px,#990042 276px,#903 305px,#990026 338px,#990012 422px)"></i><i style="top:394px;left:49px;width:417px;height:2px;background:linear-gradient(90deg,#004899 0,#013799 97px,#233199 124px,#482b99 149px,#6f2499 173px,#991d99 196px,#99137e 212px,#990b67 230px,#990454 251px,#990043 275px,#990034 303px,#990028 336px,#990013 417px)"></i><i style="top:396px;left:50px;width:411px;height:2px;background:linear-gradient(90deg,#004699 0,#003699 95px,#233099 122px,#482999 148px,#6f2299 172px,#991b99 195px,#991280 210px,#990a69 228px,#99004d 259px,#904 273px,#990029 332px,#990015 411px)"></i><i style="top:398px;left:51px;width:404px;height:2px;background:linear-gradient(90deg,#004599 0,#003499 93px,#222e99 120px,#472799 146px,#6f2099 171px,#991999 194px,#99107f 210px,#990869 227px,#990051 254px,#990046 270px,#99002a 328px,#990016 404px)"></i><i style="top:400px;left:51px;width:399px;height:2px;background:linear-gradient(90deg,#004399 0,#013299 93px,#462699 145px,#991698 195px,#990e7f 210px,#99076a 227px,#990054 250px,#990046 270px,#99002c 326px,#990017 399px)"></i><i style="top:402px;left:52px;width:393px;height:2px;background:linear-gradient(90deg,#004199 0,#003199 91px,#222b99 118px,#462499 144px,#6a1d99 167px,#991498 194px,#990c7f 209px,#99066a 226px,#990059 244px,#990048 267px,#99002d 322px,#990019 393px)"></i><i style="top:404px;left:53px;width:386px;height:2px;background:linear-gradient(90deg,#004099 0,#002f99 89px,#232999 117px,#472299 143px,#6a1b99 166px,#991298 193px,#990b81 207px,#99056c 224px,#99005d 239px,#990049 265px,#99002f 318px,#99001b 386px)"></i><i style="top:406px;left:53px;width:381px;height:2px;background:linear-gradient(90deg,#003e99 0,#012e99 89px,#232799 117px,#472099 143px,#6c1999 167px,#991098 193px,#990a82 207px,#99036c 224px,#990061 235px,#99004b 263px,#990031 314px,#99001c 381px)"></i><i style="top:408px;left:54px;width:374px;height:2px;background:linear-gradient(90deg,#003c99 0,#002c99 87px,#232599 115px,#481e99 142px,#6e1799 167px,#990e99 192px,#990882 206px,#99026e 222px,#99005c 240px,#99004c 261px,#990032 310px,#99001e 374px)"></i><i style="top:410px;left:55px;width:368px;height:2px;background:linear-gradient(90deg,#003b99 0,#002b99 85px,#232499 114px,#481d99 141px,#6e1599 166px,#990d99 191px,#990682 205px,#99016f 220px,#99005d 238px,#99004e 258px,#990034 306px,#990020 368px)"></i><i style="top:412px;left:56px;width:362px;height:2px;background:linear-gradient(90deg,#003999 0,#002999 83px,#212399 111px,#471b99 139px,#6e1399 165px,#990b99 190px,#990582 204px,#990070 219px,#99004f 256px,#990035 303px,#990021 362px)"></i><i style="top:414px;left:57px;width:355px;height:2px;background:linear-gradient(90deg,#003899 0,#002899 82px,#232199 111px,#491999 139px,#701199 165px,#990999 189px,#990484 202px,#990071 217px,#990051 253px,#990037 298px,#990023 355px)"></i><i style="top:416px;left:58px;width:349px;height:2px;background:linear-gradient(90deg,#003699 0,#002699 80px,#221f99 109px,#481899 137px,#6e1099 163px,#990799 188px,#99007e 206px,#990071 216px,#990052 251px,#990039 294px,#990025 349px)"></i><i style="top:418px;left:59px;width:343px;height:2px;background:linear-gradient(90deg,#003499 0,#002599 78px,#201e99 106px,#451799 134px,#6a0f99 159px,#990598 188px,#990083 201px,#990072 215px,#990053 249px,#99003a 291px,#990027 343px)"></i><i style="top:420px;left:59px;width:337px;height:2px;background:linear-gradient(90deg,#039 0,#012399 78px,#221c99 107px,#471599 135px,#6c0d99 160px,#990398 188px,#990089 197px,#990073 214px,#905 247px,#99003d 287px,#990029 337px)"></i><i style="top:422px;left:60px;width:331px;height:2px;background:linear-gradient(90deg,#003199 0,#029 76px,#231b99 106px,#471399 134px,#6c0b99 159px,#990298 187px,#990074 213px,#990057 244px,#99003f 283px,#99002b 331px)"></i><i style="top:424px;left:61px;width:325px;height:2px;background:linear-gradient(90deg,#003099 0,#002199 74px,#211a99 103px,#461299 132px,#6c0a99 158px,#990098 186px,#990075 211px,#990058 242px,#990041 279px,#99002d 325px)"></i><i style="top:426px;left:62px;width:318px;height:2px;background:linear-gradient(90deg,#002e99 0,#011f99 73px,#231899 103px,#481099 132px,#6e0899 158px,#909 185px,#907 209px,#99005a 239px,#990043 275px,#990030 318px)"></i><i style="top:428px;left:63px;width:312px;height:2px;background:linear-gradient(90deg,#002c99 0,#001e99 71px,#231699 102px,#480e99 131px,#809 174px,#909 184px,#907 208px,#99005c 236px,#990045 270px,#990032 312px)"></i><i style="top:430px;left:64px;width:305px;height:2px;background:linear-gradient(90deg,#002b99 0,#001d99 69px,#231599 100px,#470d99 129px,#820099 169px,#909 183px,#990078 206px,#99005e 233px,#990047 266px,#990035 305px)"></i><i style="top:432px;left:65px;width:299px;height:2px;background:linear-gradient(90deg,#002999 0,#011b99 68px,#231499 99px,#480b99 128px,#7c0099 164px,#909 182px,#990079 205px,#99005f 231px,#990049 262px,#990037 299px)"></i><i style="top:434px;left:65px;width:294px;height:2px;background:linear-gradient(90deg,#002899 0,#001a99 67px,#231299 98px,#480a99 128px,#740099 159px,#909 182px,#99007a 204px,#990061 229px,#99004c 259px,#99003a 294px)"></i><i style="top:436px;left:66px;width:287px;height:2px;background:linear-gradient(90deg,#002799 0,#001999 65px,#219 96px,#470999 126px,#6e0099 154px,#980099 181px,#99007c 202px,#990063 226px,#99004e 254px,#99003d 287px)"></i><i style="top:438px;left:67px;width:281px;height:2px;background:linear-gradient(90deg,#002599 0,#011799 64px,#231099 95px,#470799 125px,#670099 148px,#980099 180px,#99007c 201px,#990065 223px,#990051 250px,#99003f 281px)"></i><i style="top:440px;left:68px;width:275px;height:2px;background:linear-gradient(90deg,#002499 0,#001699 62px,#230e99 94px,#480699 124px,#610099 143px,#980099 179px,#99007c 200px,#990067 221px,#990053 246px,#990042 275px)"></i><i style="top:442px;left:69px;width:268px;height:2px;background:linear-gradient(90deg,#029 0,#001599 60px,#230d99 92px,#470599 122px,#5b0099 137px,#980099 178px,#99007e 198px,#990069 218px,#990056 241px,#990046 268px)"></i><i style="top:444px;left:70px;width:262px;height:2px;background:linear-gradient(90deg,#002199 0,#011499 59px,#230c99 91px,#480399 122px,#560099 132px,#909 178px,#990081 195px,#99006c 214px,#99005a 236px,#990049 262px)"></i><i style="top:446px;left:71px;width:256px;height:2px;background:linear-gradient(90deg,#001f99 0,#001399 57px,#220b99 89px,#480299 120px,#6f0099 149px,#909 177px,#990082 193px,#99006d 212px,#99005b 233px,#99004c 256px)"></i><i style="top:448px;left:72px;width:249px;height:2px;background:linear-gradient(90deg,#001e99 0,#001299 55px,#230999 88px,#480099 119px,#6f0099 148px,#909 176px,#990084 191px,#990071 208px,#990050 249px)"></i><i style="top:450px;left:73px;width:243px;height:2px;background:linear-gradient(90deg,#001c99 0,#011099 54px,#240899 87px,#480099 118px,#6f0099 147px,#909 175px,#990084 190px,#990072 206px,#990054 243px)"></i><i style="top:452px;left:74px;width:236px;height:2px;background:linear-gradient(90deg,#001b99 0,#010f99 52px,#230799 85px,#490099 117px,#6f0099 146px,#909 174px,#990075 202px,#990058 236px)"></i><i style="top:454px;left:75px;width:230px;height:2px;background:linear-gradient(90deg,#001999 0,#000e99 50px,#3a0099 104px,#480099 115px,#6f0099 145px,#980099 173px,#907 200px,#99005c 230px)"></i><i style="top:456px;left:76px;width:224px;height:2px;background:linear-gradient(90deg,#001899 0,#000d99 48px,#350099 98px,#480099 114px,#6f0099 144px,#980099 172px,#990079 197px,#990060 224px)"></i><i style="top:458px;left:77px;width:217px;height:2px;background:linear-gradient(90deg,#001699 0,#010c99 47px,#310099 93px,#480099 113px,#6f0099 143px,#980099 171px,#99007c 194px,#990065 217px)"></i><i style="top:460px;left:78px;width:211px;height:2px;background:linear-gradient(90deg,#001599 0,#000b99 45px,#2c0099 87px,#470099 111px,#6e0099 141px,#980099 170px,#99007e 191px,#99006a 211px)"></i><i style="top:462px;left:79px;width:205px;height:2px;background:linear-gradient(90deg,#001499 0,#000a99 43px,#280099 82px,#480099 110px,#6e0099 140px,#909 170px,#990083 186px,#99006f 205px)"></i><i style="top:464px;left:80px;width:198px;height:2px;background:linear-gradient(90deg,#001299 0,#010999 42px,#230099 76px,#480099 109px,#6f0099 140px,#909 169px,#990075 198px)"></i><i style="top:466px;left:81px;width:192px;height:2px;background:linear-gradient(90deg,#019 0,#000899 40px,#1f0099 71px,#480099 108px,#700099 139px,#909 168px,#99007b 192px)"></i><i style="top:468px;left:82px;width:185px;height:2px;background:linear-gradient(90deg,#001099 0,#000799 38px,#1b0099 66px,#470099 106px,#6e0099 137px,#909 167px,#990082 185px)"></i><i style="top:470px;left:83px;width:179px;height:2px;background:linear-gradient(90deg,#000e99 0,#010699 37px,#170099 60px,#480099 105px,#6e0099 136px,#980099 166px,#908 179px)"></i><i style="top:472px;left:84px;width:173px;height:2px;background:linear-gradient(90deg,#000d99 0,#000599 35px,#130099 55px,#480099 104px,#6e0099 135px,#980099 165px,#99008e 173px)"></i><i style="top:474px;left:86px;width:165px;height:2px;background:linear-gradient(90deg,#000b99 0,#000499 31px,#040399 36px,#0f0099 48px,#460099 100px,#990097 165px)"></i><i style="top:476px;left:87px;width:159px;height:2px;background:linear-gradient(90deg,#000a99 0,#000399 30px,#050299 36px,#490099 101px,#6d0099 131px,#940099 159px)"></i><i style="top:478px;left:89px;width:152px;height:2px;background:linear-gradient(90deg,#000899 0,#000299 27px,#060099 34px,#460099 96px,#8c0099 152px)"></i><i style="top:480px;left:90px;width:145px;height:2px;background:linear-gradient(90deg,#000799 0,#000199 25px,#040099 30px,#400099 90px,#840099 145px)"></i><i style="top:482px;left:91px;width:139px;height:2px;background:linear-gradient(90deg,#000699 0,#009 24px,#030099 27px,#3d0099 86px,#7d0099 139px)"></i><i style="top:484px;left:93px;width:132px;height:2px;background:linear-gradient(90deg,#000499 0,#009 21px,#030099 25px,#3a0099 81px,#709 132px)"></i><i style="top:486px;left:94px;width:125px;height:2px;background:linear-gradient(90deg,#000399 0,#020099 22px,#360099 76px,#6f0099 125px)"></i><i style="top:488px;left:95px;width:119px;height:2px;background:linear-gradient(90deg,#000299 0,#010099 19px,#309 71px,#690099 119px)"></i><i style="top:490px;left:97px;width:111px;height:2px;background:linear-gradient(90deg,#009 0,#020099 18px,#300099 66px,#620099 111px)"></i><i style="top:492px;left:98px;width:105px;height:2px;background:linear-gradient(90deg,#009 0,#009 13px,#030099 17px,#2e0099 63px,#5c0099 105px)"></i><i style="top:494px;left:100px;width:98px;height:2px;background:linear-gradient(90deg,#009 0,#009 11px,#060099 18px,#2d0099 59px,#570099 98px)"></i><i style="top:496px;left:102px;width:90px;height:2px;background:linear-gradient(90deg,#009 0,#009 8px,#0a0099 20px,#500099 90px)"></i><i style="top:498px;left:104px;width:83px;height:2px;background:linear-gradient(90deg,#009 0,#009 6px,#0f0099 23px,#4b0099 83px)"></i><i style="top:500px;left:106px;width:76px;height:2px;background:linear-gradient(90deg,#009 0,#009 3px,#160099 28px,#460099 76px)"></i><i style="top:502px;left:108px;width:68px;height:2px;background:linear-gradient(90deg,#009 0,#400099 68px)"></i><i style="top:504px;left:110px;width:61px;height:2px;background:linear-gradient(90deg,#020099 0,#3b0099 61px)"></i><i style="top:506px;left:113px;width:53px;height:2px;background:linear-gradient(90deg,#050099 0,#360099 53px)"></i><i style="top:508px;left:116px;width:44px;height:2px;background:linear-gradient(90deg,#080099 0,#300099 44px)"></i><i style="top:510px;left:119px;width:36px;height:2px;background:linear-gradient(90deg,#0b0099 0,#2c0099 36px)"></i><i style="top:512px;left:121px;width:28px;height:2px;background:linear-gradient(90deg,#0e0099 0,#270099 28px)"></i><i style="top:514px;left:124px;width:20px;height:2px;background:linear-gradient(90deg,#109 0,#230099 20px)"></i><i style="top:516px;left:127px;width:12px;height:2px;background:linear-gradient(90deg,#140099 0,#1e0099 12px)"></i></div>
<div class="cl" style="left:1012px;top:45px;width:647px;height:521px;clip-path:polygon(492.52px 316px,230.55px 148.6px,114.97px 483.4px)"><i style="top:148px;left:228px;width:7px;height:2px;background:linear-gradient(90deg,#00ff01 0,#07ff00 7px)"></i><i style="top:150px;left:227px;width:11px;height:2px;background:linear-gradient(90deg,#00ff03 0,#00ff02 3px,#0cff00 11px)"></i><i style="top:152px;left:226px;width:15px;height:2px;background:linear-gradient(90deg,#00ff05 0,#00ff03 3px,#12ff00 15px)"></i><i style="top:154px;left:226px;width:18px;height:2px;background:linear-gradient(90deg,#00ff06 0,#01ff05 3px,#18ff00 18px)"></i><i style="top:156px;left:225px;width:22px;height:2px;background:linear-gradient(90deg,#00ff08 0,#01ff06 3px,#1eff00 22px)"></i><i style="top:158px;left:224px;width:26px;height:2px;background:linear-gradient(90deg,#00ff09 0,#00ff08 3px,#24ff00 26px)"></i><i style="top:160px;left:223px;width:30px;height:2px;background:linear-gradient(90deg,#00ff0b 0,#01ff09 4px,#2bff00 30px)"></i><i style="top:162px;left:223px;width:33px;height:2px;background:linear-gradient(90deg,#00ff0c 0,#01ff0b 3px,#31ff00 33px)"></i><i style="top:164px;left:222px;width:38px;height:2px;background:linear-gradient(90deg,#00ff0e 0,#00ff0d 3px,#3aff00 38px)"></i><i style="top:166px;left:221px;width:42px;height:2px;background:linear-gradient(90deg,#00ff10 0,#01ff0e 4px,#41ff00 42px)"></i><i style="top:168px;left:221px;width:45px;height:2px;background:linear-gradient(90deg,#0f1 0,#07ff0f 7px,#48ff00 45px)"></i><i style="top:170px;left:220px;width:49px;height:2px;background:linear-gradient(90deg,#00ff13 0,#00ff12 3px,#0aff10 9px,#4fff00 49px)"></i><i style="top:172px;left:219px;width:53px;height:2px;background:linear-gradient(90deg,#00ff15 0,#00ff14 3px,#0dff11 11px,#57ff00 53px)"></i><i style="top:174px;left:219px;width:56px;height:2px;background:linear-gradient(90deg,#00ff17 0,#01ff15 3px,#18ff10 17px,#5eff00 56px)"></i><i style="top:176px;left:218px;width:60px;height:2px;background:linear-gradient(90deg,#00ff18 0,#00ff17 3px,#1bff11 19px,#6f0 60px)"></i><i style="top:178px;left:217px;width:64px;height:2px;background:linear-gradient(90deg,#00ff1a 0,#00ff19 3px,#1eff12 21px,#6eff00 64px)"></i><i style="top:180px;left:217px;width:67px;height:2px;background:linear-gradient(90deg,#00ff1c 0,#01ff1b 3px,#28ff11 26px,#7f0 67px)"></i><i style="top:182px;left:216px;width:72px;height:2px;background:linear-gradient(90deg,#00ff1e 0,#01ff1d 3px,#2cff13 28px,#82ff00 72px)"></i><i style="top:184px;left:215px;width:76px;height:2px;background:linear-gradient(90deg,#00ff20 0,#00ff1f 3px,#2fff14 30px,#8bff00 76px)"></i><i style="top:186px;left:214px;width:80px;height:2px;background:linear-gradient(90deg,#0f2 0,#01ff20 4px,#32ff15 32px,#94ff00 80px)"></i><i style="top:188px;left:214px;width:83px;height:2px;background:linear-gradient(90deg,#00ff24 0,#01ff23 3px,#3cff15 36px,#9dff00 83px)"></i><i style="top:190px;left:213px;width:87px;height:2px;background:linear-gradient(90deg,#00ff26 0,#00ff25 3px,#3fff16 38px,#72ff0b 63px,#a7ff00 87px)"></i><i style="top:192px;left:212px;width:91px;height:2px;background:linear-gradient(90deg,#00ff28 0,#01ff26 4px,#43ff17 40px,#78ff0b 66px,#b1ff00 91px)"></i><i style="top:194px;left:212px;width:94px;height:2px;background:linear-gradient(90deg,#00ff2a 0,#01ff28 3px,#08ff27 7px,#4bff18 43px,#81ff0c 69px,#bcff00 94px)"></i><i style="top:196px;left:211px;width:98px;height:2px;background:linear-gradient(90deg,#00ff2c 0,#00ff2b 3px,#07ff29 7px,#4fff19 45px,#88ff0c 72px,#c7ff00 98px)"></i><i style="top:198px;left:210px;width:103px;height:2px;background:linear-gradient(90deg,#00ff2e 0,#00ff2d 3px,#08ff2b 8px,#55ff1a 48px,#92ff0d 76px,#d4ff00 103px)"></i><i style="top:200px;left:210px;width:106px;height:2px;background:linear-gradient(90deg,#00ff30 0,#01ff2f 3px,#15ff2a 14px,#5dff1b 51px,#9cff0d 79px,#e0ff00 106px)"></i><i style="top:202px;left:209px;width:110px;height:2px;background:linear-gradient(90deg,#00ff32 0,#00ff31 3px,#16ff2c 15px,#62ff1c 53px,#a4ff0e 82px,#ecff00 110px)"></i><i style="top:204px;left:208px;width:114px;height:2px;background:linear-gradient(90deg,#00ff34 0,#0f3 3px,#16ff2f 15px,#66ff1d 55px,#acff0e 85px,#f9ff00 114px)"></i><i style="top:206px;left:208px;width:117px;height:2px;background:linear-gradient(90deg,#00ff36 0,#01ff35 3px,#19ff30 16px,#62ff21 52px,#acff11 84px,#fdff00 114px,#fff900 117px)"></i><i style="top:208px;left:207px;width:121px;height:2px;background:linear-gradient(90deg,#00ff39 0,#01ff38 3px,#1cff32 18px,#6bff21 56px,#b2ff12 86px,#feff02 114px,#ffed00 121px)"></i><i style="top:210px;left:206px;width:125px;height:2px;background:linear-gradient(90deg,#00ff3b 0,#00ff3a 3px,#18ff35 16px,#69ff24 55px,#b0ff15 85px,#fdff06 113px,#ffe100 125px)"></i><i style="top:212px;left:205px;width:129px;height:2px;background:linear-gradient(90deg,#00ff3d 0,#01ff3c 4px,#14ff38 14px,#69ff27 55px,#b1ff18 85px,#feff08 113px,#ffd600 129px)"></i><i style="top:214px;left:205px;width:132px;height:2px;background:linear-gradient(90deg,#00ff3f 0,#01ff3e 3px,#1bff39 17px,#6bff29 55px,#b2ff1b 84px,#fdff0c 111px,#fc0 132px)"></i><i style="top:216px;left:204px;width:137px;height:2px;background:linear-gradient(90deg,#00ff42 0,#00ff41 3px,#17ff3c 15px,#69ff2c 54px,#b0ff1e 83px,#feff0e 111px,#ffdd05 124px,#ffc100 137px)"></i><i style="top:218px;left:203px;width:141px;height:2px;background:linear-gradient(90deg,#0f4 0,#01ff43 4px,#13ff40 13px,#67ff2f 53px,#aeff21 82px,#fdff12 110px,#ffd707 126px,#ffb800 141px)"></i><i style="top:220px;left:203px;width:144px;height:2px;background:linear-gradient(90deg,#00ff47 0,#01ff46 3px,#1cff40 17px,#6cff31 54px,#b2ff23 82px,#feff14 109px,#ffd308 126px,#ffaf00 144px)"></i><i style="top:222px;left:202px;width:148px;height:2px;background:linear-gradient(90deg,#00ff49 0,#00ff48 3px,#16ff44 14px,#67ff34 52px,#adff27 80px,#fffe17 109px,#ffcf0a 127px,#ffa700 148px)"></i><i style="top:224px;left:201px;width:152px;height:2px;background:linear-gradient(90deg,#00ff4c 0,#00ff4b 3px,#13ff47 13px,#68ff37 52px,#b1ff29 81px,#feff1b 108px,#ffc90b 129px,#ffa000 152px)"></i><i style="top:226px;left:201px;width:155px;height:2px;background:linear-gradient(90deg,#00ff4e 0,#01ff4d 3px,#1bff48 16px,#6aff3a 52px,#afff2d 79px,#fffe1e 107px,#ffe215 117px,#ffc60d 129px,#ff9800 155px)"></i><i style="top:228px;left:200px;width:159px;height:2px;background:linear-gradient(90deg,#00ff51 0,#00ff50 3px,#18ff4b 15px,#6aff3c 52px,#b2ff2f 80px,#feff21 106px,#ffde17 118px,#ffc20e 130px,#ffa806 144px,#ff9200 159px)"></i><i style="top:230px;left:199px;width:163px;height:2px;background:linear-gradient(90deg,#00ff54 0,#00ff53 3px,#12ff4f 12px,#66ff40 50px,#adff33 78px,#fffe24 106px,#ffdc19 118px,#ffbf10 131px,#ffa407 146px,#ff8b00 163px)"></i><i style="top:232px;left:199px;width:167px;height:2px;background:linear-gradient(90deg,#00ff56 0,#01ff55 3px,#1cff50 16px,#6bff42 51px,#b1ff36 78px,#feff28 104px,#ffd81b 118px,#ffba11 132px,#ff9e07 148px,#ff8300 167px)"></i><i style="top:234px;left:198px;width:171px;height:2px;background:linear-gradient(90deg,#00ff59 0,#01ff58 3px,#17ff54 14px,#68ff46 50px,#afff39 77px,#fffe2b 104px,#ffd71d 118px,#ffb612 133px,#ff9808 151px,#ff7d00 171px)"></i><i style="top:236px;left:197px;width:175px;height:2px;background:linear-gradient(90deg,#00ff5c 0,#00ff5b 3px,#14ff57 13px,#69ff49 50px,#b0ff3c 77px,#feff2f 103px,#ffd520 118px,#ffb314 134px,#ff9309 153px,#ff7800 175px)"></i><i style="top:238px;left:196px;width:179px;height:2px;background:linear-gradient(90deg,#00ff5f 0,#01ff5d 4px,#0eff5b 10px,#64ff4d 48px,#abff41 75px,#fffe32 103px,#ffd423 118px,#ffae15 136px,#ff8e09 156px,#ff7200 179px)"></i><i style="top:240px;left:196px;width:182px;height:2px;background:linear-gradient(90deg,#00ff61 0,#01ff60 3px,#18ff5c 14px,#69ff4f 49px,#b2ff43 76px,#feff36 101px,#ffd024 118px,#ffaa16 136px,#ff8a0a 157px,#ff6d00 182px)"></i><i style="top:242px;left:195px;width:186px;height:2px;background:linear-gradient(90deg,#00ff64 0,#00ff63 3px,#13ff60 12px,#67ff53 48px,#adff47 74px,#fffe39 101px,#ffce27 118px,#ffa718 137px,#ff850a 160px,#ff6800 186px)"></i><i style="top:244px;left:194px;width:190px;height:2px;background:linear-gradient(90deg,#00ff67 0,#0f6 3px,#10ff64 11px,#67ff56 48px,#b0ff4a 75px,#feff3e 100px,#ffcd29 118px,#ffa419 138px,#ff810b 162px,#ff6300 190px)"></i><i style="top:246px;left:194px;width:193px;height:2px;background:linear-gradient(90deg,#00ff6a 0,#01ff69 3px,#16ff66 13px,#67ff59 47px,#aeff4e 73px,#fffe41 99px,#ffcb2c 117px,#ffa11b 138px,#ff7d0c 163px,#ff5f00 193px)"></i><i style="top:248px;left:193px;width:198px;height:2px;background:linear-gradient(90deg,#00ff6d 0,#00ff6c 3px,#14ff69 12px,#67ff5c 47px,#afff51 73px,#feff45 98px,#ffca2e 117px,#ff9e1c 139px,#ff780c 166px,#ff5900 198px)"></i><i style="top:250px;left:192px;width:202px;height:2px;background:linear-gradient(90deg,#00ff70 0,#00ff6f 3px,#0fff6d 10px,#65ff60 46px,#adff55 72px,#fffe49 98px,#ffc831 117px,#ff9b1d 140px,#ff750d 168px,#f50 202px)"></i><i style="top:252px;left:192px;width:205px;height:2px;background:linear-gradient(90deg,#00ff73 0,#01ff72 3px,#19ff6f 14px,#6aff63 47px,#b1ff59 72px,#feff4d 96px,#ffc634 116px,#ff981f 140px,#ff710e 169px,#ff5100 205px)"></i><i style="top:254px;left:191px;width:209px;height:2px;background:linear-gradient(90deg,#0f7 0,#00ff76 3px,#12ff73 11px,#65ff67 45px,#acff5d 70px,#fffe51 96px,#ffdf42 106px,#ffc536 116px,#ff9520 141px,#ff6d0e 172px,#ff4d00 209px)"></i><i style="top:256px;left:190px;width:213px;height:2px;background:linear-gradient(90deg,#00ff7a 0,#00ff79 3px,#0fff77 10px,#65ff6b 45px,#b0ff60 71px,#feff55 95px,#ffe047 105px,#ffc339 116px,#ffaa2d 128px,#ff9222 142px,#ff6a0e 174px,#ff4900 213px)"></i><i style="top:258px;left:190px;width:216px;height:2px;background:linear-gradient(90deg,#00ff7d 0,#01ff7c 3px,#18ff79 13px,#68ff6e 45px,#adff65 69px,#fffe59 94px,#ffde4a 104px,#ffc23c 115px,#ffa62e 128px,#ff8f23 142px,#ff660f 175px,#ff4500 216px)"></i><i style="top:260px;left:189px;width:220px;height:2px;background:linear-gradient(90deg,#00ff81 0,#01ff80 3px,#15ff7d 12px,#68ff72 45px,#b1ff68 70px,#feff5e 93px,#ffdc4d 104px,#ffbe3d 116px,#ffa330 129px,#ff8c24 143px,#ff6310 177px,#ff4200 220px)"></i><i style="top:262px;left:188px;width:224px;height:2px;background:linear-gradient(90deg,#00ff84 0,#00ff83 3px,#0bff82 8px,#63ff76 43px,#a9ff6d 67px,#fffe62 93px,#ffdb50 104px,#ffbc40 116px,#ffa232 129px,#ff8926 144px,#ff5f10 180px,#ff3e00 224px)"></i><i style="top:264px;left:187px;width:228px;height:2px;background:linear-gradient(90deg,#0f8 0,#00ff87 3px,#08ff86 7px,#63ff7a 43px,#adff71 68px,#feff67 92px,#ffd953 104px,#ffba43 116px,#ff9e34 130px,#ff8627 145px,#ff5c11 182px,#ff3b00 228px)"></i><i style="top:266px;left:187px;width:232px;height:2px;background:linear-gradient(90deg,#00ff8b 0,#01ff8a 3px,#13ff88 11px,#66ff7e 43px,#abff76 66px,#fffe6b 91px,#ffda57 102px,#ffb945 115px,#ff9d36 129px,#ff8328 145px,#ff5911 183px,#ff3700 232px)"></i><i style="top:268px;left:186px;width:236px;height:2px;background:linear-gradient(90deg,#00ff8f 0,#00ff8e 3px,#0eff8c 9px,#66ff82 43px,#afff79 67px,#feff70 90px,#ffd85a 102px,#ffb748 115px,#ff9937 130px,#ff802a 146px,#ff691d 165px,#ff5512 186px,#ff3400 236px)"></i><i style="top:270px;left:185px;width:240px;height:2px;background:linear-gradient(90deg,#00ff92 0,#00ff92 3px,#06ff91 6px,#61ff87 41px,#a9ff7e 65px,#fffe74 90px,#ffd65d 102px,#ffb54b 115px,#ff983a 130px,#ff7e2b 147px,#ff671e 166px,#ff5212 188px,#ff3100 240px)"></i><i style="top:272px;left:185px;width:243px;height:2px;background:linear-gradient(90deg,#00ff96 0,#01ff95 3px,#12ff93 10px,#67ff8a 42px,#b1ff82 66px,#feff7a 88px,#ffd862 100px,#ffb64f 113px,#ff983d 128px,#ff7c2d 146px,#ff651f 166px,#ff5113 188px,#ff2e00 243px)"></i><i style="top:274px;left:184px;width:247px;height:2px;background:linear-gradient(90deg,#00ff9a 0,#0f9 3px,#0cff98 8px,#64ff8f 41px,#abff87 64px,#fffe7e 88px,#ffd666 100px,#ffb250 114px,#ff953e 129px,#ff7a2e 147px,#ff6220 167px,#ff4e14 190px,#ff2b00 247px)"></i><i style="top:276px;left:183px;width:251px;height:2px;background:linear-gradient(90deg,#00ff9e 0,#00ff9d 3px,#09ff9c 7px,#64ff93 41px,#afff8b 65px,#ffff83 87px,#ffd76b 99px,#ffb354 113px,#ff9341 129px,#ff7830 147px,#ff6021 168px,#ff4b14 192px,#ff2900 251px)"></i><i style="top:278px;left:183px;width:254px;height:2px;background:linear-gradient(90deg,#00ffa2 0,#01ffa1 3px,#12ff9f 10px,#67ff97 41px,#adff90 63px,#fffe88 86px,#ffd56e 98px,#ffb157 112px,#ff9243 128px,#ff7531 147px,#ff5e23 168px,#ff4815 193px,#ff2600 254px)"></i><i style="top:280px;left:182px;width:258px;height:2px;background:linear-gradient(90deg,#00ffa6 0,#00ffa5 3px,#0dffa4 8px,#64ff9c 40px,#aeff95 63px,#ffff8e 85px,#ffd371 98px,#ffaf5a 112px,#ff8e45 129px,#ff7333 148px,#ff5b23 170px,#ff4616 195px,#ff2400 258px)"></i><i style="top:282px;left:181px;width:263px;height:2px;background:linear-gradient(90deg,#0fa 0,#00ffa9 3px,#07ffa9 6px,#61ffa1 39px,#a8ff9b 61px,#fffd92 85px,#ffd175 98px,#ffae5d 112px,#ff8d47 129px,#ff7034 149px,#ff5724 172px,#ff4216 198px,#ff2100 263px)"></i><i style="top:284px;left:181px;width:266px;height:2px;background:linear-gradient(90deg,#00ffae 0,#01ffae 3px,#13ffac 10px,#68ffa5 40px,#b0ff9f 62px,#ffff98 83px,#ffd27a 96px,#ffac60 111px,#ff8b49 128px,#ff6f36 148px,#ff5625 171px,#ff4117 198px,#ff2e0a 229px,#ff1e00 266px)"></i><i style="top:286px;left:180px;width:270px;height:2px;background:linear-gradient(90deg,#00ffb3 0,#01ffb2 3px,#0dffb1 8px,#65ffaa 39px,#aaffa5 60px,#fffd9d 83px,#ffd07d 96px,#ffaa63 111px,#ff884b 129px,#ff6c37 149px,#ff5326 173px,#ff3e17 200px,#ff2c0a 232px,#ff1c00 270px)"></i><i style="top:288px;left:179px;width:274px;height:2px;background:linear-gradient(90deg,#00ffb7 0,#00ffb6 3px,#0affb6 7px,#65ffaf 39px,#aeffaa 61px,#ffffa4 82px,#ffcf81 96px,#ffa865 111px,#ff864d 129px,#ff6a39 149px,#ff5228 173px,#ff3c18 202px,#ff290b 235px,#ff1a00 274px)"></i><i style="top:290px;left:178px;width:278px;height:2px;background:linear-gradient(90deg,#00ffbc 0,#02ffbb 4px,#5fffb4 37px,#a8ffaf 59px,#fffda8 82px,#ffd087 95px,#ffa768 111px,#ff8550 129px,#ff683a 150px,#ff4f28 175px,#ff3918 204px,#ff270b 238px,#ff1700 278px)"></i><i style="top:292px;left:178px;width:281px;height:2px;background:linear-gradient(90deg,#00ffc0 0,#01ffc0 3px,#0effbf 8px,#65ffb9 38px,#b0ffb4 60px,#ffffaf 80px,#ffce8a 94px,#ffa56b 110px,#ff8352 128px,#ff653c 150px,#ff4d29 175px,#ff3719 205px,#ff250b 240px,#ff1500 281px)"></i><i style="top:294px;left:177px;width:285px;height:2px;background:linear-gradient(90deg,#00ffc5 0,#00ffc4 3px,#08ffc4 6px,#62ffbe 37px,#aaffba 58px,#fffdb4 80px,#ffcf90 93px,#ffa570 109px,#ff8255 128px,#ff643e 150px,#ff4a2a 176px,#ff3519 207px,#ff220b 243px,#ff1300 285px)"></i><i style="top:296px;left:176px;width:289px;height:2px;background:linear-gradient(90deg,#00ffca 0,#02ffc9 4px,#63ffc4 37px,#afffc0 59px,#ffb 79px,#ffcd94 93px,#ffa373 109px,#ff8057 128px,#ff6240 150px,#ff482b 177px,#ff331a 208px,#ff210c 245px,#f10 289px)"></i><i style="top:298px;left:176px;width:292px;height:2px;background:linear-gradient(90deg,#00ffce 0,#01ffce 3px,#0cffcd 7px,#63ffc9 36px,#a8ffc6 56px,#fffdc0 78px,#ffcb97 92px,#ffa276 108px,#ff7e59 127px,#ff6041 150px,#ff462c 177px,#ff311b 209px,#ff1e0c 247px,#ff0f00 292px)"></i><i style="top:300px;left:175px;width:297px;height:2px;background:linear-gradient(90deg,#00ffd3 0,#00ffd3 3px,#06ffd3 5px,#63ffcf 36px,#adffcb 57px,#ffffc8 77px,#ffcc9e 91px,#ffa079 108px,#ff7b5b 128px,#ff5d42 151px,#ff432d 179px,#ff2e1b 212px,#ff1c0c 251px,#ff0d00 297px)"></i><i style="top:302px;left:174px;width:301px;height:2px;background:linear-gradient(90deg,#00ffd9 0,#02ffd8 4px,#60ffd5 35px,#a7ffd2 55px,#fffdcd 77px,#ffcaa1 91px,#ff9e7c 108px,#ff795d 128px,#ff5c44 151px,#ff422e 179px,#ff2c1c 213px,#ff1a0c 253px,#ff0b00 301px)"></i><i style="top:304px;left:174px;width:304px;height:2px;background:linear-gradient(90deg,#00ffde 0,#01ffdd 3px,#0fffdd 8px,#67ffda 36px,#afffd8 56px,#ffffd5 75px,#ffcba8 89px,#ff9e81 106px,#ff7961 126px,#ff5a46 150px,#ff402f 179px,#ff2b1d 213px,#ff180d 254px,#ff0900 304px)"></i><i style="top:306px;left:173px;width:308px;height:2px;background:linear-gradient(90deg,#00ffe3 0,#03ffe3 4px,#60ffe0 34px,#a9ffde 54px,#fffdda 75px,#ffc9ac 89px,#ff9c84 106px,#ff7864 126px,#ff5847 151px,#ff3e30 180px,#ff291d 215px,#ff160d 257px,#ff0700 308px)"></i><i style="top:308px;left:172px;width:312px;height:2px;background:linear-gradient(90deg,#00ffe9 0,#02ffe8 4px,#60ffe6 34px,#aeffe5 55px,#ffffe3 74px,#ffe2c9 81px,#ffc7b0 89px,#ff9a87 106px,#ff7666 126px,#ff5649 151px,#ff3c31 181px,#ff261e 217px,#ff140d 260px,#ff0500 312px)"></i><i style="top:310px;left:172px;width:315px;height:2px;background:linear-gradient(90deg,#0fe 0,#01ffee 3px,#0dffee 7px,#64ffec 34px,#a7ffeb 52px,#fffde8 73px,#ffe0cd 80px,#ffc5b3 88px,#ff998a 105px,#ff7367 126px,#ff544a 151px,#ff3a32 181px,#ff241e 218px,#ff120d 264px,#ff0400 315px)"></i><i style="top:312px;left:171px;width:319px;height:2px;background:linear-gradient(90deg,#00fff4 0,#01fff4 3px,#06fff4 5px,#64fff3 34px,#b0fff2 54px,#fffff1 72px,#ffe2d5 79px,#ffc6ba 87px,#ff9990 104px,#ff736b 125px,#ff524c 151px,#ff3833 182px,#ff231f 219px,#ff100d 266px,#ff0200 319px)"></i><i style="top:314px;left:170px;width:323px;height:2px;background:linear-gradient(90deg,#00fffa 0,#03fffa 4px,#5dfff9 32px,#a5fff9 51px,#fffdf7 72px,#ffdfda 79px,#ffc7c2 86px,#ff9793 104px,#ff706c 126px,#ff504e 152px,#ff3634 183px,#ff211f 221px,#ff0e0d 269px,#f00 323px)"></i><i style="top:316px;left:169px;width:326px;height:2px;background:linear-gradient(90deg,#00feff 0,#02feff 4px,#59feff 31px,#a1feff 50px,#fdfdff 71px,#fffbfc 72px,#ffddde 79px,#ffc4c6 86px,#ff9596 104px,#ff6e6f 126px,#ff4f50 152px,#ff3435 184px,#ff1e1f 224px,#ff0c0d 275px,#f00 326px)"></i><i style="top:318px;left:169px;width:321px;height:2px;background:linear-gradient(90deg,#00f8ff 0,#04f8ff 4px,#5ef7ff 32px,#a6f7ff 51px,#fff4fd 72px,#ffbfc7 86px,#ff9197 104px,#ff6c72 125px,#ff4d52 151px,#ff3438 182px,#ff1f22 220px,#ff0c0f 270px,#ff0002 321px)"></i><i style="top:320px;left:168px;width:318px;height:2px;background:linear-gradient(90deg,#00f3ff 0,#03f2ff 4px,#5ff1ff 33px,#a6f0ff 52px,#ffedfd 73px,#ffbac8 87px,#ff8d98 105px,#ff6973 126px,#ff4c54 151px,#ff3339 182px,#ff1e24 219px,#ff0c11 268px,#ff0003 318px)"></i><i style="top:322px;left:167px;width:314px;height:2px;background:linear-gradient(90deg,#00edff 0,#02edff 4px,#5debff 33px,#a7e9ff 53px,#ffe6fe 74px,#ffb5c8 88px,#ff8b9c 105px,#ff6775 126px,#ff4a56 151px,#ff323c 181px,#ff1d26 218px,#ff0b12 266px,#ff0005 314px)"></i><i style="top:324px;left:167px;width:310px;height:2px;background:linear-gradient(90deg,#00e7ff 0,#01e7ff 3px,#0ae7ff 6px,#65e4ff 35px,#afe2ff 55px,#ffdffe 74px,#ffc5e1 81px,#ffadc6 89px,#ff859a 106px,#ff6476 126px,#ff4857 151px,#ff303d 181px,#ff1d28 216px,#ff0b14 263px,#ff0007 310px)"></i><i style="top:326px;left:166px;width:306px;height:2px;background:linear-gradient(90deg,#00e2ff 0,#00e2ff 3px,#06e1ff 5px,#63deff 35px,#afdcff 56px,#ffd9ff 75px,#ffaaca 89px,#ff839e 106px,#ff6279 126px,#ff4659 151px,#ff2f3f 180px,#ff1c29 215px,#ff0b16 261px,#ff0009 306px)"></i><i style="top:328px;left:165px;width:303px;height:2px;background:linear-gradient(90deg,#0df 0,#02dcff 4px,#61d9ff 35px,#acd6ff 56px,#ffd2ff 76px,#ffa5cb 90px,#ff7f9f 107px,#ff5f7a 127px,#ff455b 151px,#ff2e41 180px,#ff1c2b 214px,#ff0a17 260px,#ff000a 303px)"></i><i style="top:330px;left:165px;width:298px;height:2px;background:linear-gradient(90deg,#00d7ff 0,#01d7ff 3px,#09d7ff 6px,#62d3ff 35px,#a1d0ff 53px,#feccff 76px,#ffc9fc 77px,#ff9ec9 91px,#ff799d 108px,#ff5b79 128px,#ff425c 151px,#ff2d43 179px,#ff1b2d 212px,#ff0a1a 256px,#ff000c 298px)"></i><i style="top:332px;left:164px;width:295px;height:2px;background:linear-gradient(90deg,#00d2ff 0,#00d2ff 3px,#06d2ff 5px,#5fcdff 35px,#a2caff 54px,#fec5ff 77px,#ffc3fc 78px,#ff99ca 92px,#ff77a1 108px,#ff597c 128px,#ff415e 151px,#ff2c45 178px,#ff1a2f 211px,#ff0a1b 255px,#ff000e 295px)"></i><i style="top:334px;left:163px;width:291px;height:2px;background:linear-gradient(90deg,#00cdff 0,#02cdff 4px,#5dc8ff 35px,#a6c4ff 56px,#ffbdfd 79px,#ff95cb 93px,#ff74a2 109px,#ff587f 128px,#ff3f60 151px,#ff2b47 178px,#ff1a32 209px,#ff0b1f 247px,#ff0010 291px)"></i><i style="top:336px;left:163px;width:287px;height:2px;background:linear-gradient(90deg,#00c8ff 0,#01c8ff 3px,#0fc7ff 8px,#65c2ff 37px,#aabeff 57px,#ffb7fd 79px,#ff90cb 93px,#ff70a3 109px,#ff5580 128px,#ff3e62 150px,#ff2a49 176px,#ff1934 207px,#ff0b21 244px,#ff0012 287px)"></i><i style="top:338px;left:162px;width:283px;height:2px;background:linear-gradient(90deg,#00c4ff 0,#00c3ff 3px,#08c3ff 6px,#63bdff 37px,#aab8ff 58px,#ffb1fe 80px,#ff8ecf 93px,#ff6ea6 109px,#ff5382 128px,#ff3c64 150px,#ff294b 176px,#ff1936 206px,#ff0b24 241px,#ff0014 283px)"></i><i style="top:340px;left:161px;width:280px;height:2px;background:linear-gradient(90deg,#00bfff 0,#00beff 3px,#05beff 5px,#61b8ff 37px,#abb2ff 59px,#ffacfe 81px,#ff89d0 94px,#ff6ba7 110px,#ff5185 128px,#ff3b67 150px,#ff284e 175px,#ff1838 205px,#ff0a26 240px,#ff0016 280px)"></i><i style="top:342px;left:160px;width:276px;height:2px;background:linear-gradient(90deg,#0bf 0,#01baff 4px,#62b3ff 38px,#abadff 60px,#ffa6ff 82px,#ff85d1 95px,#ff67a8 111px,#ff4e86 129px,#ff3969 150px,#ff2750 174px,#ff183b 203px,#ff0a28 237px,#ff0019 276px)"></i><i style="top:344px;left:160px;width:272px;height:2px;background:linear-gradient(90deg,#00b6ff 0,#01b5ff 3px,#0eb4ff 8px,#66adff 39px,#afa7ff 61px,#ffa1ff 82px,#ff81d1 95px,#ff65ab 110px,#ff4d88 128px,#ff386b 149px,#ff2652 173px,#ff173d 201px,#ff0a2b 234px,#ff001b 272px)"></i><i style="top:346px;left:159px;width:268px;height:2px;background:linear-gradient(90deg,#00b2ff 0,#00b1ff 3px,#07b0ff 6px,#64a9ff 39px,#afa2ff 62px,#fe9bff 83px,#ff7cd2 96px,#ff61ac 111px,#ff4a89 129px,#ff366d 149px,#ff2554 173px,#ff163f 200px,#ff001d 268px)"></i><i style="top:348px;left:158px;width:265px;height:2px;background:linear-gradient(90deg,#00adff 0,#02acff 4px,#5fa4ff 38px,#a29eff 59px,#fe96ff 84px,#ff94fc 85px,#ff76d0 98px,#ff5caa 113px,#ff478a 130px,#ff346e 150px,#ff2356 173px,#ff1641 199px,#ff0020 265px)"></i><i style="top:350px;left:158px;width:260px;height:2px;background:linear-gradient(90deg,#00a9ff 0,#01a8ff 3px,#0da7ff 8px,#639fff 39px,#a699ff 60px,#ff8ffc 85px,#ff72d1 98px,#ff5bad 112px,#ff458d 129px,#ff3371 148px,#ff235a 170px,#ff1544 196px,#f02 260px)"></i><i style="top:352px;left:157px;width:257px;height:2px;background:linear-gradient(90deg,#00a5ff 0,#00a4ff 3px,#07a3ff 6px,#619bff 39px,#a694ff 61px,#ff8afd 86px,#ff6ed1 99px,#ff57ae 113px,#ff438f 129px,#ff3174 148px,#ff225b 170px,#ff1447 195px,#ff0025 257px)"></i><i style="top:354px;left:156px;width:253px;height:2px;background:linear-gradient(90deg,#00a1ff 0,#00a0ff 3px,#079fff 6px,#6296ff 40px,#aa8fff 63px,#ff85fd 87px,#ff6cd5 99px,#ff55b1 113px,#ff4292 129px,#ff3076 148px,#ff215e 169px,#ff144a 193px,#ff0028 253px)"></i><i style="top:356px;left:156px;width:248px;height:2px;background:linear-gradient(90deg,#009dff 0,#019cff 3px,#129aff 10px,#6691ff 41px,#ae8aff 64px,#ff80fe 87px,#ff68d6 99px,#ff52b2 113px,#ff3f93 129px,#ff2e78 147px,#ff2060 168px,#ff134c 191px,#ff002b 248px)"></i><i style="top:358px;left:155px;width:245px;height:2px;background:linear-gradient(90deg,#09f 0,#0098ff 3px,#0c97ff 8px,#648dff 41px,#ae85ff 65px,#ff7cfe 88px,#ff64d6 100px,#ff50b5 113px,#ff3e97 128px,#ff2e7c 146px,#ff2064 166px,#ff134f 189px,#ff002d 245px)"></i><i style="top:360px;left:154px;width:241px;height:2px;background:linear-gradient(90deg,#0095ff 0,#0094ff 3px,#0993ff 7px,#6589ff 42px,#ae80ff 66px,#f7f 89px,#ff60d7 101px,#ff4db6 114px,#ff3b98 129px,#ff2c7e 146px,#ff1f67 165px,#ff1352 187px,#ff0030 241px)"></i><i style="top:362px;left:154px;width:237px;height:2px;background:linear-gradient(90deg,#0091ff 0,#0190ff 3px,#148eff 11px,#6884ff 43px,#b27bff 67px,#ff72ff 89px,#ff5cd8 101px,#ff49b7 114px,#ff3899 129px,#ff2a80 145px,#ff1d69 164px,#ff1255 185px,#f03 237px)"></i><i style="top:364px;left:153px;width:233px;height:2px;background:linear-gradient(90deg,#008eff 0,#008dff 3px,#118bff 10px,#6680ff 43px,#af77ff 67px,#fe6eff 90px,#ff58d8 102px,#ff47ba 114px,#ff379c 129px,#ff2982 145px,#ff1c6c 163px,#ff1158 184px,#ff0036 233px)"></i><i style="top:366px;left:152px;width:230px;height:2px;background:linear-gradient(90deg,#008aff 0,#0089ff 3px,#0b88ff 8px,#657cff 43px,#af73ff 68px,#fe69ff 91px,#ff55d9 103px,#ff44ba 115px,#ff359e 129px,#ff2785 145px,#ff1b6e 163px,#ff105a 183px,#ff0039 230px)"></i><i style="top:368px;left:151px;width:226px;height:2px;background:linear-gradient(90deg,#0087ff 0,#0086ff 3px,#0685ff 6px,#6079ff 42px,#a670ff 66px,#ff63fd 93px,#ff51da 104px,#ff41bb 116px,#ff329f 130px,#ff2587 145px,#ff105e 181px,#ff003d 226px)"></i><i style="top:370px;left:151px;width:222px;height:2px;background:linear-gradient(90deg,#0083ff 0,#0182ff 3px,#1380ff 11px,#6674ff 44px,#aa6bff 67px,#ff5ffd 93px,#ff4fdd 103px,#ff3fbe 115px,#ff31a3 128px,#ff258b 143px,#ff1061 178px,#ff0040 222px)"></i><i style="top:372px;left:150px;width:218px;height:2px;background:linear-gradient(90deg,#0080ff 0,#007fff 3px,#0d7dff 9px,#6471ff 44px,#aa67ff 68px,#ff5bfe 94px,#ff4bde 104px,#ff3cbf 116px,#ff2fa4 129px,#ff238d 143px,#ff0f65 176px,#f04 218px)"></i><i style="top:374px;left:149px;width:215px;height:2px;background:linear-gradient(90deg,#007cff 0,#007bff 3px,#087aff 7px,#636dff 44px,#aa63ff 69px,#ff57fe 95px,#ff48de 105px,#ff3ac2 116px,#ff2da7 129px,#ff218f 143px,#ff0e68 175px,#ff0047 215px)"></i><i style="top:376px;left:149px;width:210px;height:2px;background:linear-gradient(90deg,#0079ff 0,#0178ff 3px,#1575ff 12px,#6969ff 46px,#b15eff 71px,#ff53ff 95px,#ff44df 105px,#ff37c3 116px,#ff2093 141px,#ff0e6c 172px,#ff004b 210px)"></i><i style="top:378px;left:148px;width:207px;height:2px;background:linear-gradient(90deg,#0076ff 0,#0075ff 3px,#1272ff 11px,#6765ff 46px,#b15aff 72px,#ff4fff 96px,#ff41e0 106px,#ff35c6 116px,#ff1f96 141px,#ff0d6f 171px,#ff004f 207px)"></i><i style="top:380px;left:147px;width:203px;height:2px;background:linear-gradient(90deg,#0072ff 0,#0071ff 3px,#0c70ff 9px,#6562ff 46px,#ae57ff 72px,#ff4bff 97px,#ff3de0 107px,#ff32c6 117px,#ff1e9a 140px,#ff0c73 169px,#ff0054 203px)"></i><i style="top:382px;left:147px;width:199px;height:2px;background:linear-gradient(90deg,#006fff 0,#016eff 3px,#176bff 13px,#695eff 47px,#b253ff 73px,#fe47ff 97px,#ff2fc7 117px,#ff1c9c 139px,#ff0c77 166px,#ff0057 199px)"></i><i style="top:384px;left:146px;width:195px;height:2px;background:linear-gradient(90deg,#006cff 0,#006bff 3px,#1168ff 11px,#675bff 47px,#af50ff 73px,#fe43ff 98px,#ff2dca 117px,#ff1a9e 139px,#ff0b7a 165px,#ff005c 195px)"></i><i style="top:386px;left:145px;width:192px;height:2px;background:linear-gradient(90deg,#0069ff 0,#0068ff 3px,#0c66ff 9px,#6358ff 46px,#a94dff 72px,#ff3efd 100px,#ff2bcd 117px,#ff19a3 138px,#ff0b7e 163px,#ff0060 192px)"></i><i style="top:388px;left:145px;width:187px;height:2px;background:linear-gradient(90deg,#06f 0,#0165ff 3px,#1861ff 14px,#6954ff 48px,#ac49ff 73px,#ff3bfe 100px,#ff28ce 117px,#ff18a5 137px,#ff0a83 160px,#f06 187px)"></i><i style="top:390px;left:144px;width:184px;height:2px;background:linear-gradient(90deg,#0063ff 0,#0062ff 3px,#135fff 12px,#6751ff 48px,#ad45ff 74px,#ff37fe 101px,#ff26d1 117px,#ff16a9 136px,#ff0988 158px,#ff006a 184px)"></i><i style="top:392px;left:143px;width:180px;height:2px;background:linear-gradient(90deg,#0060ff 0,#005fff 3px,#105cff 11px,#654eff 48px,#ad42ff 75px,#ff34fe 102px,#ff24d4 117px,#ff15ae 135px,#ff098c 156px,#ff0070 180px)"></i><i style="top:394px;left:142px;width:176px;height:2px;background:linear-gradient(90deg,#005eff 0,#015cff 4px,#0d5aff 10px,#664bff 49px,#b03eff 77px,#ff30ff 103px,#ff21d4 118px,#ff14b0 135px,#ff0891 154px,#ff0076 176px)"></i><i style="top:396px;left:142px;width:172px;height:2px;background:linear-gradient(90deg,#005aff 0,#0059ff 3px,#1755ff 14px,#6947ff 50px,#b03aff 77px,#ff2dff 103px,#ff1fd8 117px,#ff12b5 133px,#ff0896 151px,#ff007b 172px)"></i><i style="top:398px;left:141px;width:168px;height:2px;background:linear-gradient(90deg,#0058ff 0,#0057ff 3px,#1254ff 12px,#6744ff 50px,#b137ff 78px,#fe29ff 104px,#ff1cd8 118px,#ff11b9 132px,#ff079c 149px,#ff0082 168px)"></i><i style="top:400px;left:140px;width:165px;height:2px;background:linear-gradient(90deg,#05f 0,#0154ff 4px,#0f51ff 11px,#6641ff 50px,#ae34ff 78px,#fe26ff 105px,#ff1adb 118px,#ff0fbc 132px,#ff069f 148px,#f08 165px)"></i><i style="top:402px;left:140px;width:160px;height:2px;background:linear-gradient(90deg,#0052ff 0,#0151ff 3px,#194dff 15px,#693eff 51px,#b131ff 79px,#fe22ff 105px,#ff17dc 118px,#ff0ec1 130px,#ff06a7 144px,#ff008f 160px)"></i><i style="top:404px;left:139px;width:157px;height:2px;background:linear-gradient(90deg,#0050ff 0,#004fff 3px,#144bff 13px,#673bff 51px,#af2eff 79px,#fd1fff 106px,#ff0cc3 130px,#ff0095 157px)"></i><i style="top:406px;left:138px;width:153px;height:2px;background:linear-gradient(90deg,#004dff 0,#014cff 4px,#1149ff 12px,#6639ff 51px,#ac2bff 79px,#ff1bfe 108px,#ff0cca 128px,#ff009d 153px)"></i><i style="top:408px;left:138px;width:149px;height:2px;background:linear-gradient(90deg,#004bff 0,#0149ff 3px,#1845ff 15px,#6935ff 52px,#af28ff 80px,#ff18fe 108px,#ff0acd 127px,#ff00a4 149px)"></i><i style="top:410px;left:137px;width:145px;height:2px;background:linear-gradient(90deg,#0048ff 0,#0047ff 3px,#1742ff 15px,#6a32ff 53px,#b025ff 81px,#ff15ff 109px,#ff09d2 126px,#ff00ad 145px)"></i><i style="top:412px;left:136px;width:142px;height:2px;background:linear-gradient(90deg,#0046ff 0,#0144ff 4px,#1341ff 13px,#6830ff 53px,#b022ff 82px,#ff12ff 110px,#ff07d7 125px,#ff00b4 142px)"></i><i style="top:414px;left:136px;width:137px;height:2px;background:linear-gradient(90deg,#0043ff 0,#0142ff 3px,#1c3dff 17px,#6b2dff 54px,#b31eff 83px,#ff0fff 110px,#ff06dc 123px,#ff00be 137px)"></i><i style="top:416px;left:135px;width:134px;height:2px;background:linear-gradient(90deg,#0041ff 0,#0040ff 3px,#193bff 16px,#692aff 54px,#b01cff 83px,#fe0cff 111px,#ff00c7 134px)"></i><i style="top:418px;left:134px;width:130px;height:2px;background:linear-gradient(90deg,#003fff 0,#003dff 3px,#1439ff 14px,#6828ff 54px,#b119ff 84px,#fe09ff 112px,#ff00d2 130px)"></i><i style="top:420px;left:133px;width:127px;height:2px;background:linear-gradient(90deg,#003cff 0,#013bff 4px,#1038ff 12px,#6626ff 54px,#ae17ff 84px,#fe06ff 113px,#ff00dc 127px)"></i><i style="top:422px;left:133px;width:122px;height:2px;background:linear-gradient(90deg,#003aff 0,#0039ff 3px,#1933ff 16px,#6922ff 55px,#b113ff 85px,#fd03ff 113px,#ff00e8 122px)"></i><i style="top:424px;left:132px;width:119px;height:2px;background:linear-gradient(90deg,#0038ff 0,#0036ff 3px,#0934ff 8px,#5624ff 47px,#a713ff 82px,#fd00ff 114px,#ff00f3 119px)"></i><i style="top:426px;left:131px;width:115px;height:2px;background:linear-gradient(90deg,#0035ff 0,#0134ff 4px,#1130ff 13px,#661eff 55px,#af0eff 86px,#fd00ff 115px)"></i><i style="top:428px;left:131px;width:110px;height:2px;background:linear-gradient(90deg,#03f 0,#0032ff 3px,#162dff 15px,#631cff 53px,#a50eff 82px,#e0f 110px)"></i><i style="top:430px;left:130px;width:107px;height:2px;background:linear-gradient(90deg,#0031ff 0,#0030ff 3px,#0e2dff 11px,#5d1bff 51px,#9e0dff 80px,#e300ff 107px)"></i><i style="top:432px;left:129px;width:103px;height:2px;background:linear-gradient(90deg,#002fff 0,#052dff 6px,#531bff 47px,#930dff 76px,#d600ff 103px)"></i><i style="top:434px;left:129px;width:99px;height:2px;background:linear-gradient(90deg,#002dff 0,#012bff 3px,#0b29ff 9px,#5219ff 46px,#8c0cff 73px,#cb00ff 99px)"></i><i style="top:436px;left:128px;width:95px;height:2px;background:linear-gradient(90deg,#002bff 0,#0229ff 4px,#4b18ff 43px,#840cff 70px,#bf00ff 95px)"></i><i style="top:438px;left:127px;width:92px;height:2px;background:linear-gradient(90deg,#0029ff 0,#0127ff 4px,#4318ff 40px,#7b0bff 67px,#b500ff 92px)"></i><i style="top:440px;left:127px;width:87px;height:2px;background:linear-gradient(90deg,#0026ff 0,#0125ff 3px,#4216ff 39px,#a900ff 87px)"></i><i style="top:442px;left:126px;width:84px;height:2px;background:linear-gradient(90deg,#0024ff 0,#0023ff 3px,#3b15ff 36px,#a000ff 84px)"></i><i style="top:444px;left:125px;width:80px;height:2px;background:linear-gradient(90deg,#0023ff 0,#0121ff 4px,#3315ff 32px,#9500ff 80px)"></i><i style="top:446px;left:124px;width:77px;height:2px;background:linear-gradient(90deg,#0021ff 0,#011fff 4px,#2d15ff 29px,#8d00ff 77px)"></i><i style="top:448px;left:124px;width:72px;height:2px;background:linear-gradient(90deg,#001fff 0,#001dff 3px,#2c13ff 28px,#8200ff 72px)"></i><i style="top:450px;left:123px;width:69px;height:2px;background:linear-gradient(90deg,#001dff 0,#011bff 4px,#2413ff 24px,#7a00ff 69px)"></i><i style="top:452px;left:122px;width:65px;height:2px;background:linear-gradient(90deg,#001bff 0,#0119ff 4px,#1c13ff 20px,#7100ff 65px)"></i><i style="top:454px;left:122px;width:61px;height:2px;background:linear-gradient(90deg,#0019ff 0,#0018ff 3px,#1d11ff 20px,#6900ff 61px)"></i><i style="top:456px;left:121px;width:57px;height:2px;background:linear-gradient(90deg,#0017ff 0,#0016ff 3px,#1411ff 15px,#6000ff 57px)"></i><i style="top:458px;left:120px;width:54px;height:2px;background:linear-gradient(90deg,#0016ff 0,#0114ff 4px,#0c11ff 11px,#5900ff 54px)"></i><i style="top:460px;left:120px;width:49px;height:2px;background:linear-gradient(90deg,#0014ff 0,#0012ff 3px,#0c0fff 10px,#5000ff 49px)"></i><i style="top:462px;left:119px;width:46px;height:2px;background:linear-gradient(90deg,#0012ff 0,#0310ff 5px,#4900ff 46px)"></i><i style="top:464px;left:118px;width:42px;height:2px;background:linear-gradient(90deg,#0010ff 0,#010fff 4px,#4100ff 42px)"></i><i style="top:466px;left:118px;width:37px;height:2px;background:linear-gradient(90deg,#000eff 0,#010dff 3px,#3900ff 37px)"></i><i style="top:468px;left:117px;width:34px;height:2px;background:linear-gradient(90deg,#000dff 0,#000cff 3px,#30f 34px)"></i><i style="top:470px;left:116px;width:30px;height:2px;background:linear-gradient(90deg,#000bff 0,#010aff 4px,#2b00ff 30px)"></i><i style="top:472px;left:115px;width:27px;height:2px;background:linear-gradient(90deg,#000aff 0,#0108ff 4px,#2500ff 27px)"></i><i style="top:474px;left:115px;width:22px;height:2px;background:linear-gradient(90deg,#0008ff 0,#0007ff 3px,#1e00ff 22px)"></i><i style="top:476px;left:114px;width:19px;height:2px;background:linear-gradient(90deg,#0006ff 0,#0105ff 4px,#1900ff 19px)"></i><i style="top:478px;left:113px;width:15px;height:2px;background:linear-gradient(90deg,#0005ff 0,#0103ff 4px,#1200ff 15px)"></i><i style="top:480px;left:113px;width:11px;height:2px;background:linear-gradient(90deg,#0003ff 0,#0002ff 3px,#0c00ff 11px)"></i><i style="top:482px;left:112px;width:7px;height:2px;background:linear-gradient(90deg,#0002ff 0,#0600ff 7px)"></i></div>
<div class="cl" style="left:1474px;top:45px;width:185px;height:191px;background:#232323"></div>
<div class="cl" style="left:1476px;top:45px;width:183px;height:189px;clip-path:polygon(188px 194px,-5px 194px,-5px -5px,165.77px -5px,168.39px -2.32px,178.4px 7.94px,188px 17.79px)"><i style="top:0px;left:0px;width:183px;height:3px;background:linear-gradient(90deg,#539900 0,#759900 74px,#990 146px,#998700 183px)"></i><i style="top:3px;left:0px;width:183px;height:3px;background:linear-gradient(90deg,#539900 0,#759900 74px,#990 144px,#998600 183px)"></i><i style="top:6px;left:0px;width:183px;height:3px;background:linear-gradient(90deg,#549900 0,#769900 73px,#990 142px,#998500 183px)"></i><i style="top:9px;left:0px;width:183px;height:3px;background:linear-gradient(90deg,#590 0,#769900 72px,#990 140px,#998500 183px)"></i><i style="top:12px;left:0px;width:183px;height:3px;background:linear-gradient(90deg,#590 0,#769900 70px,#990 139px,#998400 183px)"></i><i style="top:15px;left:0px;width:183px;height:3px;background:linear-gradient(90deg,#569900 0,#769900 70px,#990 137px,#998300 183px)"></i><i style="top:18px;left:0px;width:183px;height:3px;background:linear-gradient(90deg,#569900 0,#790 69px,#990 135px,#998200 183px)"></i><i style="top:21px;left:0px;width:183px;height:3px;background:linear-gradient(90deg,#579900 0,#790 68px,#990 133px,#998100 183px)"></i><i style="top:24px;left:0px;width:183px;height:3px;background:linear-gradient(90deg,#589901 0,#990 132px,#998100 183px)"></i><i style="top:27px;left:0px;width:183px;height:3px;background:linear-gradient(90deg,#589901 0,#789900 66px,#990 130px,#998000 183px)"></i><i style="top:30px;left:0px;width:183px;height:3px;background:linear-gradient(90deg,#599902 0,#990 128px,#997f00 183px)"></i><i style="top:33px;left:0px;width:183px;height:3px;background:linear-gradient(90deg,#5a9902 0,#629900 19px,#990 126px,#997e00 183px)"></i><i style="top:36px;left:0px;width:183px;height:3px;background:linear-gradient(90deg,#5a9902 0,#659900 23px,#990 125px,#997d00 183px)"></i><i style="top:39px;left:0px;width:183px;height:3px;background:linear-gradient(90deg,#5b9903 0,#679900 26px,#990 123px,#997d00 183px)"></i><i style="top:42px;left:0px;width:183px;height:3px;background:linear-gradient(90deg,#5c9903 0,#6a9900 30px,#990 121px,#997c00 183px)"></i><i style="top:45px;left:0px;width:183px;height:3px;background:linear-gradient(90deg,#5c9904 0,#6c9900 33px,#990 119px,#997b00 183px)"></i><i style="top:48px;left:0px;width:183px;height:3px;background:linear-gradient(90deg,#5d9904 0,#6f9900 37px,#990 118px,#997a00 183px)"></i><i style="top:51px;left:0px;width:183px;height:3px;background:linear-gradient(90deg,#5e9904 0,#719900 41px,#990 116px,#997a00 183px)"></i><i style="top:54px;left:0px;width:183px;height:3px;background:linear-gradient(90deg,#5e9905 0,#749900 44px,#990 114px,#997900 183px)"></i><i style="top:57px;left:0px;width:183px;height:3px;background:linear-gradient(90deg,#5f9905 0,#790 48px,#990 112px,#997800 183px)"></i><i style="top:60px;left:0px;width:183px;height:3px;background:linear-gradient(90deg,#609906 0,#799900 52px,#990 111px,#998700 145px,#970 183px)"></i><i style="top:63px;left:0px;width:183px;height:3px;background:linear-gradient(90deg,#609906 0,#7c9900 55px,#990 109px,#998700 144px,#970 183px)"></i><i style="top:66px;left:0px;width:183px;height:3px;background:linear-gradient(90deg,#619906 0,#7f9900 59px,#990 107px,#998700 143px,#997600 183px)"></i><i style="top:69px;left:0px;width:183px;height:3px;background:linear-gradient(90deg,#629907 0,#819900 62px,#990 105px,#998600 143px,#997500 183px)"></i><i style="top:72px;left:0px;width:183px;height:3px;background:linear-gradient(90deg,#629907 0,#849900 66px,#990 104px,#998600 141px,#997400 183px)"></i><i style="top:75px;left:0px;width:183px;height:3px;background:linear-gradient(90deg,#639908 0,#879900 70px,#990 102px,#998500 140px,#997400 183px)"></i><i style="top:78px;left:0px;width:183px;height:3px;background:linear-gradient(90deg,#649908 0,#8a9900 73px,#990 100px,#998500 139px,#997300 183px)"></i><i style="top:81px;left:0px;width:183px;height:3px;background:linear-gradient(90deg,#659909 0,#8d9900 77px,#990 98px,#998400 139px,#997200 183px)"></i><i style="top:84px;left:0px;width:183px;height:3px;background:linear-gradient(90deg,#659909 0,#909900 81px,#990 97px,#998400 138px,#997100 183px)"></i><i style="top:87px;left:0px;width:183px;height:3px;background:linear-gradient(90deg,#66990a 0,#990 95px,#998400 136px,#997100 183px)"></i><i style="top:90px;left:0px;width:183px;height:3px;background:linear-gradient(90deg,#67990a 0,#990 93px,#998300 135px,#997000 183px)"></i><i style="top:93px;left:0px;width:183px;height:3px;background:linear-gradient(90deg,#68990a 0,#990 91px,#998300 135px,#996f00 183px)"></i><i style="top:96px;left:0px;width:183px;height:3px;background:linear-gradient(90deg,#68990b 0,#999901 90px,#998200 134px,#996e00 183px)"></i><i style="top:99px;left:0px;width:183px;height:3px;background:linear-gradient(90deg,#69990b 0,#999901 88px,#998200 133px,#996e00 183px)"></i><i style="top:102px;left:0px;width:183px;height:3px;background:linear-gradient(90deg,#6a990c 0,#999902 86px,#998200 131px,#996d00 183px)"></i><i style="top:105px;left:0px;width:183px;height:3px;background:linear-gradient(90deg,#6b990c 0,#999903 84px,#998100 131px,#996c00 183px)"></i><i style="top:108px;left:0px;width:183px;height:3px;background:linear-gradient(90deg,#6b990d 0,#999903 83px,#998100 130px,#996c00 183px)"></i><i style="top:111px;left:0px;width:183px;height:3px;background:linear-gradient(90deg,#6c990d 0,#999904 81px,#998000 129px,#996b00 183px)"></i><i style="top:114px;left:0px;width:183px;height:3px;background:linear-gradient(90deg,#6d990e 0,#999905 79px,#998000 127px,#996a00 183px)"></i><i style="top:117px;left:0px;width:183px;height:3px;background:linear-gradient(90deg,#6e990e 0,#999906 77px,#997f00 127px,#996900 183px)"></i><i style="top:120px;left:0px;width:183px;height:3px;background:linear-gradient(90deg,#6f990f 0,#999906 76px,#997f00 126px,#996900 183px)"></i><i style="top:123px;left:0px;width:183px;height:3px;background:linear-gradient(90deg,#6f990f 0,#999907 74px,#997e00 125px,#996800 183px)"></i><i style="top:126px;left:0px;width:183px;height:3px;background:linear-gradient(90deg,#709910 0,#999908 72px,#997f01 123px,#996700 183px)"></i><i style="top:129px;left:0px;width:183px;height:3px;background:linear-gradient(90deg,#719910 0,#999908 70px,#997e01 123px,#996700 183px)"></i><i style="top:132px;left:0px;width:183px;height:3px;background:linear-gradient(90deg,#729911 0,#999909 69px,#997d02 122px,#960 183px)"></i><i style="top:135px;left:0px;width:183px;height:3px;background:linear-gradient(90deg,#739911 0,#99990a 67px,#997d02 121px,#997400 143px,#996500 183px)"></i><i style="top:138px;left:0px;width:183px;height:3px;background:linear-gradient(90deg,#749912 0,#99990a 65px,#997d03 119px,#997100 147px,#996500 183px)"></i><i style="top:141px;left:0px;width:183px;height:3px;background:linear-gradient(90deg,#749912 0,#99990b 63px,#997c03 119px,#996f00 150px,#996400 183px)"></i><i style="top:144px;left:0px;width:183px;height:3px;background:linear-gradient(90deg,#759913 0,#99990c 62px,#997c04 118px,#996d00 154px,#996300 183px)"></i><i style="top:147px;left:0px;width:183px;height:3px;background:linear-gradient(90deg,#769913 0,#99990d 60px,#997c05 116px,#996b00 158px,#996300 183px)"></i><i style="top:150px;left:0px;width:183px;height:3px;background:linear-gradient(90deg,#779914 0,#99990d 58px,#997b05 115px,#996900 161px,#996200 183px)"></i><i style="top:153px;left:0px;width:183px;height:3px;background:linear-gradient(90deg,#789914 0,#99990e 56px,#997b06 114px,#996100 183px)"></i><i style="top:156px;left:0px;width:183px;height:3px;background:linear-gradient(90deg,#799915 0,#99990f 55px,#997a06 114px,#996100 183px)"></i><i style="top:159px;left:0px;width:183px;height:3px;background:linear-gradient(90deg,#7a9916 0,#999910 53px,#997a07 112px,#996000 183px)"></i><i style="top:162px;left:0px;width:183px;height:3px;background:linear-gradient(90deg,#7b9916 0,#999910 51px,#997a07 111px,#995f00 183px)"></i><i style="top:165px;left:0px;width:183px;height:3px;background:linear-gradient(90deg,#7c9917 0,#991 49px,#997908 110px,#995f00 183px)"></i><i style="top:168px;left:0px;width:183px;height:3px;background:linear-gradient(90deg,#7d9917 0,#999912 48px,#997908 109px,#995e00 183px)"></i><i style="top:171px;left:0px;width:183px;height:3px;background:linear-gradient(90deg,#7d9918 0,#999913 46px,#997809 108px,#995d00 183px)"></i><i style="top:174px;left:0px;width:183px;height:3px;background:linear-gradient(90deg,#7e9918 0,#999913 44px,#99880e 74px,#997809 107px,#995d01 183px)"></i><i style="top:177px;left:0px;width:183px;height:3px;background:linear-gradient(90deg,#7f9919 0,#999914 42px,#99870f 73px,#99780a 106px,#995c01 183px)"></i><i style="top:180px;left:0px;width:183px;height:3px;background:linear-gradient(90deg,#80991a 0,#999915 41px,#99870f 71px,#99770a 105px,#995b01 183px)"></i><i style="top:183px;left:0px;width:183px;height:3px;background:linear-gradient(90deg,#81991a 0,#999916 39px,#998710 70px,#99770b 104px,#995b02 183px)"></i><i style="top:186px;left:0px;width:183px;height:3px;background:linear-gradient(90deg,#82991b 0,#999917 37px,#998711 68px,#99760b 103px,#995a02 183px)"></i></div>
<div class="cl" style="left:1476px;top:45px;width:183px;height:189px;clip-path:polygon(-5px 194px,188px 194px,188px 173.33px,-5px 15.22px)"><i style="top:0px;left:0px;width:183px;height:3px;background:linear-gradient(90deg,#8aff00 0,#c2ff00 74px,#ff0 146px,#ffe100 183px)"></i><i style="top:3px;left:0px;width:183px;height:3px;background:linear-gradient(90deg,#8bff00 0,#c4ff00 74px,#ff0 144px,#ffe000 183px)"></i><i style="top:6px;left:0px;width:183px;height:3px;background:linear-gradient(90deg,#8cff00 0,#c4ff00 73px,#ff0 142px,#ffde00 183px)"></i><i style="top:9px;left:0px;width:183px;height:3px;background:linear-gradient(90deg,#8dff00 0,#c4ff00 72px,#ff0 140px,#fd0 183px)"></i><i style="top:12px;left:0px;width:183px;height:3px;background:linear-gradient(90deg,#8eff00 0,#c4ff00 70px,#ff0 139px,#ffdc00 183px)"></i><i style="top:15px;left:0px;width:183px;height:3px;background:linear-gradient(90deg,#8fff00 0,#c5ff00 70px,#ff0 137px,#ffda00 183px)"></i><i style="top:18px;left:0px;width:183px;height:3px;background:linear-gradient(90deg,#90ff00 0,#c6ff00 69px,#ff0 135px,#ffd900 183px)"></i><i style="top:21px;left:0px;width:183px;height:3px;background:linear-gradient(90deg,#91ff01 0,#c6ff00 68px,#ff0 133px,#ffd800 183px)"></i><i style="top:24px;left:0px;width:183px;height:3px;background:linear-gradient(90deg,#92ff01 0,#c6ff00 66px,#ff0 132px,#ffd600 183px)"></i><i style="top:27px;left:0px;width:183px;height:3px;background:linear-gradient(90deg,#93ff02 0,#9cff00 12px,#c7ff00 66px,#ff0 130px,#ffd500 183px)"></i><i style="top:30px;left:0px;width:183px;height:3px;background:linear-gradient(90deg,#94ff03 0,#a0ff00 15px,#c8ff00 65px,#ff0 128px,#ffd400 183px)"></i><i style="top:33px;left:0px;width:183px;height:3px;background:linear-gradient(90deg,#95ff03 0,#a4ff00 19px,#d1ff00 74px,#ff0 126px,#ffd200 183px)"></i><i style="top:36px;left:0px;width:183px;height:3px;background:linear-gradient(90deg,#96ff04 0,#a8ff00 23px,#d1ff00 73px,#ff0 125px,#ffe700 153px,#ffd100 183px)"></i><i style="top:39px;left:0px;width:183px;height:3px;background:linear-gradient(90deg,#97ff05 0,#acff00 26px,#ff0 123px,#ffe600 152px,#ffd000 183px)"></i><i style="top:42px;left:0px;width:183px;height:3px;background:linear-gradient(90deg,#99ff05 0,#b0ff00 30px,#ff0 121px,#ffe600 151px,#ffce00 183px)"></i><i style="top:45px;left:0px;width:183px;height:3px;background:linear-gradient(90deg,#9aff06 0,#b4ff00 33px,#ff0 119px,#ffe400 151px,#ffcd00 183px)"></i><i style="top:48px;left:0px;width:183px;height:3px;background:linear-gradient(90deg,#9bff07 0,#b8ff00 37px,#ff0 118px,#ffe400 149px,#fc0 183px)"></i><i style="top:51px;left:0px;width:183px;height:3px;background:linear-gradient(90deg,#9cff07 0,#bdff00 41px,#ff0 116px,#ffe400 148px,#ffcb00 183px)"></i><i style="top:54px;left:0px;width:183px;height:3px;background:linear-gradient(90deg,#9dff08 0,#c1ff00 44px,#ff0 114px,#ffe300 147px,#ffc900 183px)"></i><i style="top:57px;left:0px;width:183px;height:3px;background:linear-gradient(90deg,#9eff09 0,#c6ff00 48px,#ff0 112px,#ffe200 147px,#ffc800 183px)"></i><i style="top:60px;left:0px;width:183px;height:3px;background:linear-gradient(90deg,#9fff09 0,#caff00 52px,#ff0 111px,#ffe200 145px,#ffc700 183px)"></i><i style="top:63px;left:0px;width:183px;height:3px;background:linear-gradient(90deg,#a0ff0a 0,#ceff00 55px,#ff0 109px,#ffe100 144px,#ffc600 183px)"></i><i style="top:66px;left:0px;width:183px;height:3px;background:linear-gradient(90deg,#a2ff0b 0,#d3ff00 59px,#ff0 107px,#ffe000 143px,#ffc400 183px)"></i><i style="top:69px;left:0px;width:183px;height:3px;background:linear-gradient(90deg,#a3ff0c 0,#d7ff00 62px,#ff0 105px,#ffdf00 143px,#ffc300 183px)"></i><i style="top:72px;left:0px;width:183px;height:3px;background:linear-gradient(90deg,#a4ff0c 0,#dcff00 66px,#ff0 104px,#ffdf00 141px,#ffc200 183px)"></i><i style="top:75px;left:0px;width:183px;height:3px;background:linear-gradient(90deg,#a5ff0d 0,#e1ff00 70px,#ff0 102px,#ffde00 140px,#ffc100 183px)"></i><i style="top:78px;left:0px;width:183px;height:3px;background:linear-gradient(90deg,#a6ff0e 0,#e6ff00 73px,#ff0 100px,#ffde00 139px,#ffbf00 183px)"></i><i style="top:81px;left:0px;width:183px;height:3px;background:linear-gradient(90deg,#a8ff0e 0,#ebff00 77px,#ff0 98px,#ffdc00 139px,#ffbe00 183px)"></i><i style="top:84px;left:0px;width:183px;height:3px;background:linear-gradient(90deg,#a9ff0f 0,#f0ff00 81px,#ff0 97px,#ffdc00 138px,#ffbd00 183px)"></i><i style="top:87px;left:0px;width:183px;height:3px;background:linear-gradient(90deg,#aaff10 0,#f5ff00 84px,#ff0 95px,#ffdc00 136px,#ffbc00 183px)"></i><i style="top:90px;left:0px;width:183px;height:3px;background:linear-gradient(90deg,#abff11 0,#d4ff08 47px,#ff0 93px,#ffdb00 135px,#ffba00 183px)"></i><i style="top:93px;left:0px;width:183px;height:3px;background:linear-gradient(90deg,#adff11 0,#ff0 91px,#ffda00 135px,#ffb900 183px)"></i><i style="top:96px;left:0px;width:183px;height:3px;background:linear-gradient(90deg,#aeff12 0,#ffff01 90px,#ffd900 134px,#ffb800 183px)"></i><i style="top:99px;left:0px;width:183px;height:3px;background:linear-gradient(90deg,#afff13 0,#ffff02 88px,#fff400 99px,#ffd800 133px,#ffb700 183px)"></i><i style="top:102px;left:0px;width:183px;height:3px;background:linear-gradient(90deg,#b0ff14 0,#ffff03 86px,#ffef00 103px,#ffd800 131px,#ffb600 183px)"></i><i style="top:105px;left:0px;width:183px;height:3px;background:linear-gradient(90deg,#b2ff15 0,#ffff05 84px,#ffeb00 106px,#ffd700 131px,#ffb400 183px)"></i><i style="top:108px;left:0px;width:183px;height:3px;background:linear-gradient(90deg,#b3ff15 0,#ffff06 83px,#ffe600 110px,#ffd600 130px,#ffb300 183px)"></i><i style="top:111px;left:0px;width:183px;height:3px;background:linear-gradient(90deg,#b4ff16 0,#ffff07 81px,#ffe100 114px,#ffd500 129px,#ffb200 183px)"></i><i style="top:114px;left:0px;width:183px;height:3px;background:linear-gradient(90deg,#b6ff17 0,#ffff08 79px,#fd0 117px,#ffd600 127px,#ffb100 183px)"></i><i style="top:117px;left:0px;width:183px;height:3px;background:linear-gradient(90deg,#b7ff18 0,#ffff09 77px,#ffd400 127px,#ffb000 183px)"></i><i style="top:120px;left:0px;width:183px;height:3px;background:linear-gradient(90deg,#b8ff19 0,#fffe0a 76px,#ffe805 100px,#ffd300 126px,#ffaf00 183px)"></i><i style="top:123px;left:0px;width:183px;height:3px;background:linear-gradient(90deg,#baff19 0,#ffff0b 74px,#ffe806 99px,#ffd301 125px,#ffad00 183px)"></i><i style="top:126px;left:0px;width:183px;height:3px;background:linear-gradient(90deg,#bbff1a 0,#ffff0d 72px,#ffe807 97px,#ffd302 123px,#ffac00 183px)"></i><i style="top:129px;left:0px;width:183px;height:3px;background:linear-gradient(90deg,#bcff1b 0,#ffff0e 70px,#ffe708 96px,#ffd102 123px,#ffc800 136px,#ffab00 183px)"></i><i style="top:132px;left:0px;width:183px;height:3px;background:linear-gradient(90deg,#beff1c 0,#fffe0f 69px,#ffe709 94px,#ffd103 122px,#ffc400 140px,#fa0 183px)"></i><i style="top:135px;left:0px;width:183px;height:3px;background:linear-gradient(90deg,#bfff1d 0,#ffff10 67px,#ffe60a 93px,#ffd004 121px,#ffc100 143px,#ffa900 183px)"></i><i style="top:138px;left:0px;width:183px;height:3px;background:linear-gradient(90deg,#c1ff1e 0,#ff1 65px,#ffe70b 91px,#ffd005 119px,#ffbd00 147px,#ffa800 183px)"></i><i style="top:141px;left:0px;width:183px;height:3px;background:linear-gradient(90deg,#c2ff1f 0,#ffff13 63px,#ffe60c 90px,#ffcf06 119px,#ffba00 150px,#ffa700 183px)"></i><i style="top:144px;left:0px;width:183px;height:3px;background:linear-gradient(90deg,#c4ff1f 0,#fffe14 62px,#ffe50d 89px,#ffce07 118px,#ffb600 154px,#ffa500 183px)"></i><i style="top:147px;left:0px;width:183px;height:3px;background:linear-gradient(90deg,#c5ff20 0,#ffff15 60px,#ffe50e 87px,#ffce08 116px,#ffb200 158px,#ffa400 183px)"></i><i style="top:150px;left:0px;width:183px;height:3px;background:linear-gradient(90deg,#c6ff21 0,#ffff16 58px,#ffe50f 85px,#ffcd08 115px,#ffaf00 161px,#ffa300 183px)"></i><i style="top:153px;left:0px;width:183px;height:3px;background:linear-gradient(90deg,#c8ff22 0,#ffff18 56px,#ffe510 84px,#ffcd09 114px,#ffac00 165px,#ffa200 183px)"></i><i style="top:156px;left:0px;width:183px;height:3px;background:linear-gradient(90deg,#c9ff23 0,#fffe19 55px,#ffe411 83px,#ffcb0a 114px,#ffa900 168px,#ffa100 183px)"></i><i style="top:159px;left:0px;width:183px;height:3px;background:linear-gradient(90deg,#cbff24 0,#ffff1a 53px,#ffe412 81px,#ffcb0b 112px,#ffb504 146px,#ffa000 183px)"></i><i style="top:162px;left:0px;width:183px;height:3px;background:linear-gradient(90deg,#ccff25 0,#ffff1b 51px,#ffe313 80px,#ffcb0c 111px,#ffb405 145px,#ff9f00 183px)"></i><i style="top:165px;left:0px;width:183px;height:3px;background:linear-gradient(90deg,#ceff26 0,#ffff1d 49px,#ffe314 78px,#ffca0d 110px,#ffb306 145px,#ff9e00 183px)"></i><i style="top:168px;left:0px;width:183px;height:3px;background:linear-gradient(90deg,#d0ff27 0,#fffe1e 48px,#ffe315 77px,#ffc90e 109px,#ffb207 144px,#ff9c00 183px)"></i><i style="top:171px;left:0px;width:183px;height:3px;background:linear-gradient(90deg,#d1ff28 0,#ffff1f 46px,#ffe216 76px,#ffc90f 108px,#ffb107 144px,#ff9b01 183px)"></i><i style="top:174px;left:0px;width:183px;height:3px;background:linear-gradient(90deg,#d3ff29 0,#ffff20 44px,#ffe218 74px,#ffc80f 107px,#ffb008 143px,#ff9a01 183px)"></i><i style="top:177px;left:0px;width:183px;height:3px;background:linear-gradient(90deg,#d4ff2a 0,#ff2 42px,#ffe118 73px,#ffc710 106px,#ffaf09 143px,#ff9902 183px)"></i><i style="top:180px;left:0px;width:183px;height:3px;background:linear-gradient(90deg,#d6ff2b 0,#fffe23 41px,#ffe11a 71px,#ffc711 105px,#ffae09 142px,#ff9802 183px)"></i><i style="top:183px;left:0px;width:183px;height:3px;background:linear-gradient(90deg,#d8ff2c 0,#fffe24 39px,#ffe11b 70px,#ffc612 104px,#ffad0a 142px,#ff9703 183px)"></i><i style="top:186px;left:0px;width:183px;height:3px;background:linear-gradient(90deg,#d9ff2d 0,#ffff26 37px,#ffe11c 68px,#ffc513 103px,#ffac0b 141px,#ff9603 183px)"></i></div>
<svg width="1671" height="839" viewBox="0 0 1671 839">
<line x1="1011.7" y1="44.2" x2="1011.7" y2="566.12" stroke="#9c9c9c" stroke-width="1.35"/>
<line x1="1659.1" y1="44.2" x2="1659.1" y2="566.12" stroke="#9c9c9c" stroke-width="1.35"/>
<line x1="1011.1" y1="44.75" x2="1659.7" y2="44.75" stroke="#a2a2a2" stroke-width="1.1"/>
<line x1="1011.1" y1="565.4" x2="1659.7" y2="565.4" stroke="#9c9c9c" stroke-width="1.45"/>
<line x1="1011.6" y1="565.4" x2="1011.6" y2="571.9" stroke="#e0e0e0" stroke-width="1.3"/>
<line x1="1005.4" y1="565.5" x2="1011.7" y2="565.5" stroke="#e0e0e0" stroke-width="1.3"/>
<text x="1011.6" y="588.1" font-size="15" text-anchor="middle">0</text>
<text x="1005.2" y="572.8" font-size="15" text-anchor="end">0</text>
<line x1="1088.65" y1="565.4" x2="1088.65" y2="571.9" stroke="#e0e0e0" stroke-width="1.3"/>
<line x1="1005.4" y1="503.64" x2="1011.7" y2="503.64" stroke="#e0e0e0" stroke-width="1.3"/>
<text x="1088.65" y="588.1" font-size="15" text-anchor="middle">0,1</text>
<text x="1005.2" y="510.84" font-size="15" text-anchor="end">0,1</text>
<line x1="1165.7" y1="565.4" x2="1165.7" y2="571.9" stroke="#e0e0e0" stroke-width="1.3"/>
<line x1="1005.4" y1="441.78" x2="1011.7" y2="441.78" stroke="#e0e0e0" stroke-width="1.3"/>
<text x="1165.7" y="588.1" font-size="15" text-anchor="middle">0,2</text>
<text x="1005.2" y="448.88" font-size="15" text-anchor="end">0,2</text>
<line x1="1242.75" y1="565.4" x2="1242.75" y2="571.9" stroke="#e0e0e0" stroke-width="1.3"/>
<line x1="1005.4" y1="379.92" x2="1011.7" y2="379.92" stroke="#e0e0e0" stroke-width="1.3"/>
<text x="1242.75" y="588.1" font-size="15" text-anchor="middle">0,3</text>
<text x="1005.2" y="386.92" font-size="15" text-anchor="end">0,3</text>
<line x1="1319.8" y1="565.4" x2="1319.8" y2="571.9" stroke="#e0e0e0" stroke-width="1.3"/>
<line x1="1005.4" y1="318.06" x2="1011.7" y2="318.06" stroke="#e0e0e0" stroke-width="1.3"/>
<text x="1319.8" y="588.1" font-size="15" text-anchor="middle">0,4</text>
<text x="1005.2" y="324.96" font-size="15" text-anchor="end">0,4</text>
<line x1="1396.85" y1="565.4" x2="1396.85" y2="571.9" stroke="#e0e0e0" stroke-width="1.3"/>
<line x1="1005.4" y1="256.2" x2="1011.7" y2="256.2" stroke="#e0e0e0" stroke-width="1.3"/>
<text x="1396.85" y="588.1" font-size="15" text-anchor="middle">0,5</text>
<text x="1005.2" y="263" font-size="15" text-anchor="end">0,5</text>
<line x1="1473.9" y1="565.4" x2="1473.9" y2="571.9" stroke="#e0e0e0" stroke-width="1.3"/>
<line x1="1005.4" y1="194.34" x2="1011.7" y2="194.34" stroke="#e0e0e0" stroke-width="1.3"/>
<text x="1473.9" y="588.1" font-size="15" text-anchor="middle">0,6</text>
<text x="1005.2" y="201.04" font-size="15" text-anchor="end">0,6</text>
<line x1="1550.95" y1="565.4" x2="1550.95" y2="571.9" stroke="#e0e0e0" stroke-width="1.3"/>
<line x1="1005.4" y1="132.48" x2="1011.7" y2="132.48" stroke="#e0e0e0" stroke-width="1.3"/>
<text x="1550.95" y="588.1" font-size="15" text-anchor="middle">0,7</text>
<text x="1005.2" y="139.08" font-size="15" text-anchor="end">0,7</text>
<line x1="1628" y1="565.4" x2="1628" y2="571.9" stroke="#e0e0e0" stroke-width="1.3"/>
<line x1="1005.4" y1="69.8" x2="1011.7" y2="69.8" stroke="#e0e0e0" stroke-width="1.3"/>
<text x="1628" y="588.1" font-size="15" text-anchor="middle">0,8</text>
<text x="1005.2" y="77.12" font-size="15" text-anchor="end">0,8</text>
<rect x="1294.8" y="354.4" width="13.6" height="13.6" fill="none" stroke="#fff" stroke-width="1.5"/>
<rect x="1346.6" y="353.4" width="13.6" height="13.6" fill="none" stroke="#fff" stroke-width="1.5"/>
<rect x="1392.8" y="353.2" width="13.6" height="13.6" fill="none" stroke="#fff" stroke-width="1.5"/>
<rect x="1441.8" y="353.2" width="13.6" height="13.6" fill="none" stroke="#fff" stroke-width="1.5"/>
<rect x="1497.6" y="353.4" width="13.6" height="13.6" fill="none" stroke="#fff" stroke-width="1.5"/>
<rect x="1234.6" y="186.2" width="13.6" height="13.6" fill="none" stroke="#fff" stroke-width="1.5"/>
<rect x="1237.5" y="222.7" width="13.6" height="13.6" fill="none" stroke="#fff" stroke-width="1.5"/>
<rect x="1238.6" y="255.1" width="13.6" height="13.6" fill="none" stroke="#fff" stroke-width="1.5"/>
<rect x="1241.6" y="287.5" width="13.6" height="13.6" fill="none" stroke="#fff" stroke-width="1.5"/>
<rect x="1243.5" y="320.9" width="13.6" height="13.6" fill="none" stroke="#fff" stroke-width="1.5"/>
<rect x="1219.5" y="388.1" width="13.6" height="13.6" fill="none" stroke="#fff" stroke-width="1.5"/>
<rect x="1195.6" y="420.5" width="13.6" height="13.6" fill="none" stroke="#fff" stroke-width="1.5"/>
<rect x="1170.6" y="452.6" width="13.6" height="13.6" fill="none" stroke="#fff" stroke-width="1.5"/>
<rect x="1146.5" y="484.5" width="13.6" height="13.6" fill="none" stroke="#fff" stroke-width="1.5"/>
<rect x="1119.6" y="521.3" width="13.6" height="13.6" fill="none" stroke="#fff" stroke-width="1.5"/>
<rect x="1177.5" y="354.7" width="13.6" height="13.6" fill="none" stroke="#fff" stroke-width="1.5"/>
<rect x="1191.6" y="354.7" width="13.6" height="13.6" fill="none" stroke="#fff" stroke-width="1.5"/>
<rect x="1205.4" y="354.7" width="13.6" height="13.6" fill="none" stroke="#fff" stroke-width="1.5"/>
<rect x="1219" y="354.7" width="13.6" height="13.6" fill="none" stroke="#fff" stroke-width="1.5"/>
<rect x="1232.1" y="354.7" width="13.6" height="13.6" fill="none" stroke="#fff" stroke-width="1.5"/>
<rect x="1247.8" y="375.7" width="13.6" height="13.6" fill="none" stroke="#fff" stroke-width="1.5"/>
<rect x="1248.8" y="398.1" width="13.6" height="13.6" fill="none" stroke="#fff" stroke-width="1.5"/>
<rect x="1248.8" y="417.6" width="13.6" height="13.6" fill="none" stroke="#fff" stroke-width="1.5"/>
<rect x="1249.7" y="440" width="13.6" height="13.6" fill="none" stroke="#fff" stroke-width="1.5"/>
<rect x="1251.6" y="462.7" width="13.6" height="13.6" fill="none" stroke="#fff" stroke-width="1.5"/>
<rect x="1262.6" y="332.1" width="13.6" height="13.6" fill="none" stroke="#fff" stroke-width="1.5"/>
<rect x="1278.6" y="309.7" width="13.6" height="13.6" fill="none" stroke="#fff" stroke-width="1.5"/>
<rect x="1294.8" y="287.5" width="13.6" height="13.6" fill="none" stroke="#fff" stroke-width="1.5"/>
<rect x="1309.7" y="267.2" width="13.6" height="13.6" fill="none" stroke="#fff" stroke-width="1.5"/>
<rect x="1327.7" y="245" width="13.6" height="13.6" fill="none" stroke="#fff" stroke-width="1.5"/>
<rect x="1245.8" y="354.8" width="13.4" height="13.4" fill="none" stroke="#000" stroke-width="1.7"/>
<circle cx="1160" cy="379.1" r="4.3" fill="#18c4c0" stroke="#000" stroke-width="1.1"/>
<circle cx="1174.1" cy="379.1" r="4.3" fill="#50b8b4" stroke="#000" stroke-width="1.1"/>
<circle cx="1186" cy="378" r="4.3" fill="#70b0ac" stroke="#000" stroke-width="1.1"/>
<circle cx="1198.6" cy="377.7" r="4.3" fill="#8cb0a8" stroke="#000" stroke-width="1.1"/>
<circle cx="1209.1" cy="378" r="4.3" fill="#9cb4a8" stroke="#000" stroke-width="1.1"/>
<circle cx="1208.9" cy="161.1" r="4.3" fill="#14b414" stroke="#000" stroke-width="1.1"/>
<circle cx="1208.9" cy="232.2" r="4.3" fill="#50b850" stroke="#000" stroke-width="1.1"/>
<circle cx="1210.3" cy="282.9" r="4.3" fill="#70b060" stroke="#000" stroke-width="1.1"/>
<circle cx="1213.4" cy="321" r="4.3" fill="#88ac68" stroke="#000" stroke-width="1.1"/>
<circle cx="1216" cy="351.3" r="4.3" fill="#98b080" stroke="#000" stroke-width="1.1"/>
<circle cx="1232.5" cy="359.8" r="4.3" fill="#b0ac80" stroke="#000" stroke-width="1.1"/>
<circle cx="1246.1" cy="338.9" r="4.3" fill="#b8b070" stroke="#000" stroke-width="1.1"/>
<circle cx="1262.5" cy="314.1" r="4.3" fill="#c0b458" stroke="#000" stroke-width="1.1"/>
<circle cx="1282.4" cy="280" r="4.3" fill="#c4b840" stroke="#000" stroke-width="1.1"/>
<circle cx="1314" cy="229.5" r="4.3" fill="#c8b418" stroke="#000" stroke-width="1.1"/>
<circle cx="1253.9" cy="383.9" r="4.3" fill="#c08078" stroke="#000" stroke-width="1.1"/>
<circle cx="1297.3" cy="383.9" r="4.3" fill="#c06058" stroke="#000" stroke-width="1.1"/>
<circle cx="1346.4" cy="381.8" r="4.3" fill="#c04840" stroke="#000" stroke-width="1.1"/>
<circle cx="1436.5" cy="378" r="4.3" fill="#c83838" stroke="#000" stroke-width="1.1"/>
<circle cx="1519.7" cy="372.5" r="4.3" fill="#c01010" stroke="#000" stroke-width="1.1"/>
<circle cx="1222.9" cy="397.7" r="4.3" fill="#c0a0b8" stroke="#000" stroke-width="1.1"/>
<circle cx="1222.9" cy="418.7" r="4.3" fill="#c080b8" stroke="#000" stroke-width="1.1"/>
<circle cx="1223.9" cy="438.2" r="4.3" fill="#c468b8" stroke="#000" stroke-width="1.1"/>
<circle cx="1225.6" cy="463.7" r="4.3" fill="#c850b8" stroke="#000" stroke-width="1.1"/>
<circle cx="1227" cy="493" r="4.3" fill="#c818b0" stroke="#000" stroke-width="1.1"/>
<circle cx="1201" cy="408" r="4.3" fill="#a0a0c0" stroke="#000" stroke-width="1.1"/>
<circle cx="1183.4" cy="436.8" r="4.3" fill="#8888c0" stroke="#000" stroke-width="1.1"/>
<circle cx="1164.5" cy="466.2" r="4.3" fill="#7070c0" stroke="#000" stroke-width="1.1"/>
<circle cx="1145" cy="498.7" r="4.3" fill="#5050c0" stroke="#000" stroke-width="1.1"/>
<circle cx="1125" cy="533.8" r="4.3" fill="#0808c0" stroke="#000" stroke-width="1.1"/>
<circle cx="1247.5" cy="356" r="4.3" fill="#ffffff" stroke="#000" stroke-width="1.1"/>
<rect x="1472.4" y="43.6" width="3.2" height="2.6" fill="#252525"/>
<rect x="1473" y="46" width="2" height="189.8" fill="#212121"/>
<rect x="1473" y="234.6" width="186" height="1.6" fill="#212121"/>
<rect x="1475.6" y="44.4" width="183.6" height="189.4" fill="none" stroke="#8e8e8e" stroke-width="1.6"/>
<rect x="1559.6" y="132" width="13.4" height="13.4" fill="none" stroke="#fff" stroke-width="1.4"/>
<rect x="1508.7" y="218.8" width="13.4" height="13.4" fill="none" stroke="#fff" stroke-width="1.4"/>
<circle cx="1504.4" cy="55.9" r="4.1" fill="#c8b810" stroke="#000" stroke-width="1.2"/>
</svg>
</body></html>
